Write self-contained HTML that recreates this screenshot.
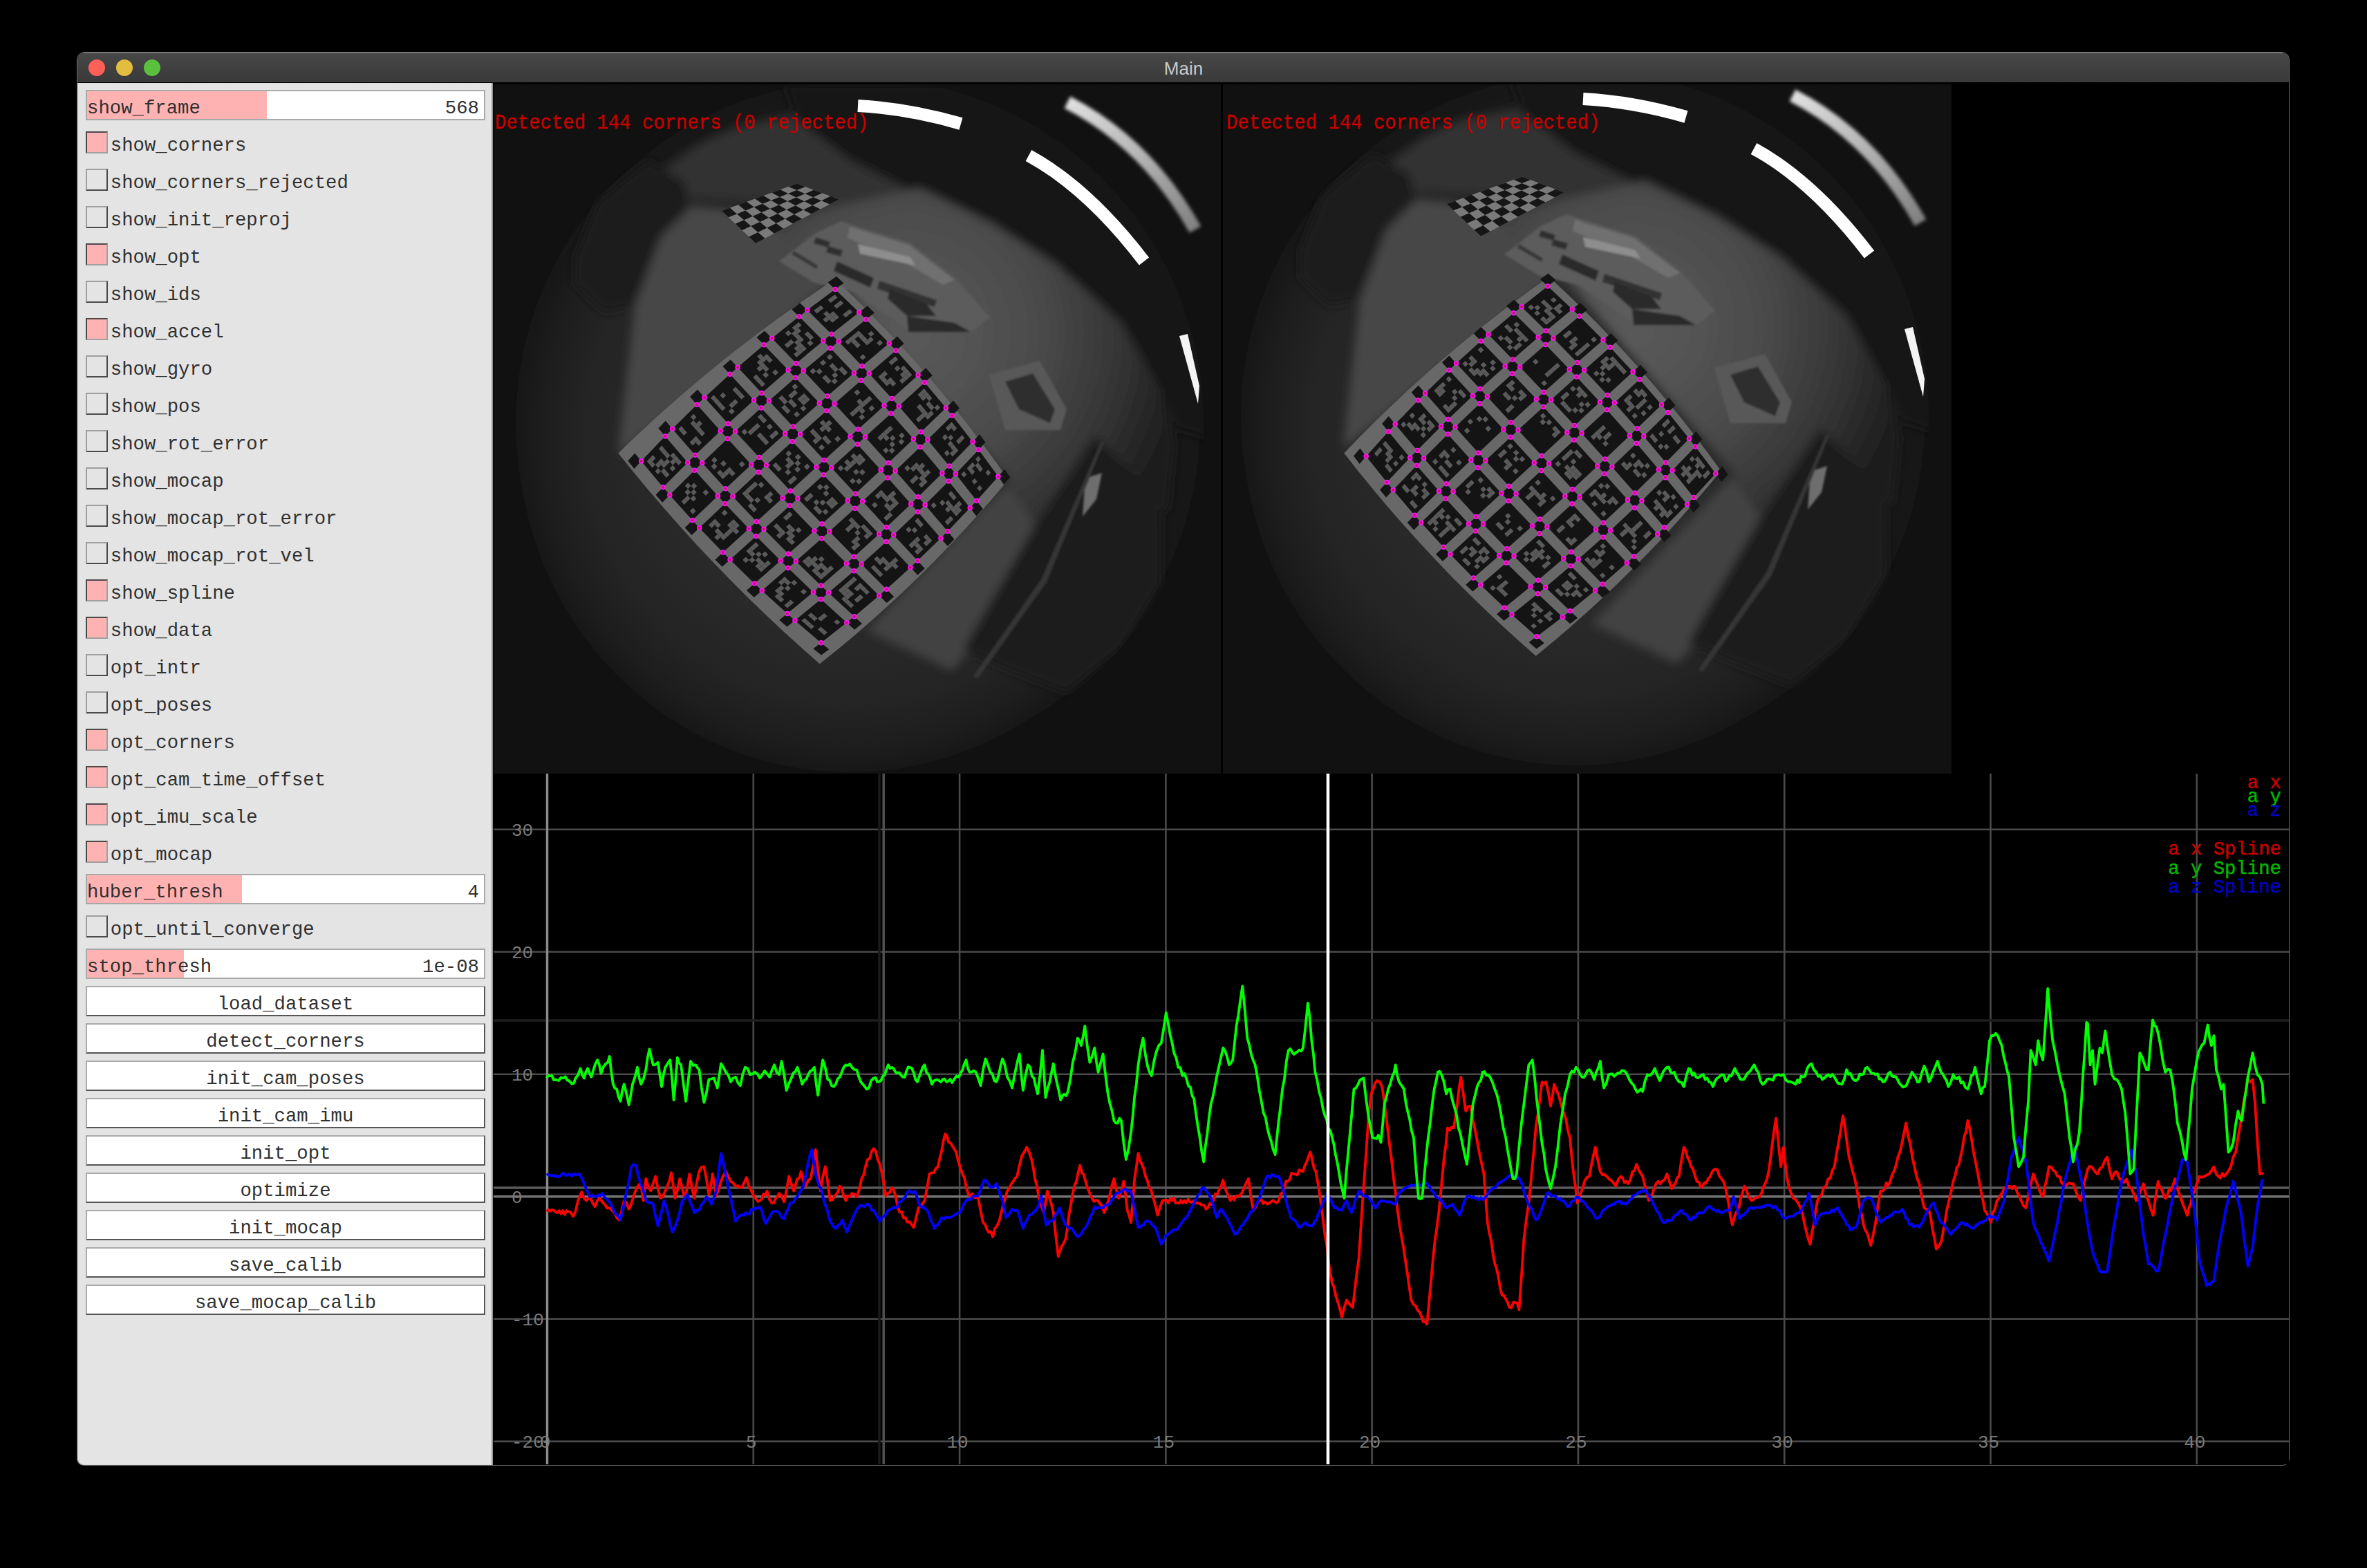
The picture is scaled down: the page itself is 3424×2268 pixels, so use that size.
<!DOCTYPE html><html><head><meta charset="utf-8"><title>Main</title><style>
html,body{margin:0;padding:0;background:#000;width:3424px;height:2268px;overflow:hidden;}
.a{position:absolute;}
.t{position:absolute;font-family:'Liberation Mono', monospace;font-size:27.3px;line-height:1;white-space:pre;color:#303030;}
</style></head><body>
<div class="a" style="left:112px;top:76px;width:3199px;height:2043px;background:#000;border-radius:11px 11px 9px 9px;box-shadow:0 0 0 1px #6a6a6a;overflow:hidden">
<div class="a" style="left:0;top:0;width:100%;height:43px;background:linear-gradient(#474747,#3a3a3a);border-top:1px solid #8c8c8c;box-sizing:border-box"></div>
</div>
<div class="a" style="left:128px;top:86px;width:24px;height:24px;border-radius:50%;background:#fe5f57"></div>
<div class="a" style="left:168px;top:86px;width:24px;height:24px;border-radius:50%;background:#e2bd3f"></div>
<div class="a" style="left:208px;top:86px;width:24px;height:24px;border-radius:50%;background:#5ac13f"></div>
<div class="a" style="left:1612px;top:86px;width:200px;text-align:center;font-family:'Liberation Sans', sans-serif;font-size:26px;line-height:26px;color:#c9c9c9">Main</div>
<div class="a" style="left:112px;top:120px;width:601px;height:1999px;background:#e4e4e4;border-bottom-left-radius:9px;box-shadow:inset 1px 0 0 #b8b8b8, inset -2px 0 1px #9a9a9a"></div>
<div class="a" style="left:124px;top:130px;width:578px;height:44px;box-sizing:border-box;border:2px solid #a9a9a9;background:linear-gradient(90deg,#ffb2b2 0,#ffb2b2 260px,#fff 260px)"></div>
<div class="t" style="left:126px;top:143px">show_frame</div>
<div class="t" style="left:400px;width:293px;text-align:right;top:143px">568</div>
<div class="a" style="left:124px;top:190px;width:32px;height:32px;box-sizing:border-box;background:#ffb2b2;border-style:solid;border-width:2px;border-color:#4a4a4a #a0a0a0 #a0a0a0 #4a4a4a"></div>
<div class="t" style="left:159.8px;top:197px">show_corners</div>
<div class="a" style="left:124px;top:244px;width:32px;height:32px;box-sizing:border-box;background:#e4e4e4;border-style:solid;border-width:2px;border-color:#a0a0a0 #4a4a4a #4a4a4a #a0a0a0"></div>
<div class="t" style="left:159.8px;top:251px">show_corners_rejected</div>
<div class="a" style="left:124px;top:298px;width:32px;height:32px;box-sizing:border-box;background:#e4e4e4;border-style:solid;border-width:2px;border-color:#a0a0a0 #4a4a4a #4a4a4a #a0a0a0"></div>
<div class="t" style="left:159.8px;top:305px">show_init_reproj</div>
<div class="a" style="left:124px;top:352px;width:32px;height:32px;box-sizing:border-box;background:#ffb2b2;border-style:solid;border-width:2px;border-color:#4a4a4a #a0a0a0 #a0a0a0 #4a4a4a"></div>
<div class="t" style="left:159.8px;top:359px">show_opt</div>
<div class="a" style="left:124px;top:406px;width:32px;height:32px;box-sizing:border-box;background:#e4e4e4;border-style:solid;border-width:2px;border-color:#a0a0a0 #4a4a4a #4a4a4a #a0a0a0"></div>
<div class="t" style="left:159.8px;top:413px">show_ids</div>
<div class="a" style="left:124px;top:460px;width:32px;height:32px;box-sizing:border-box;background:#ffb2b2;border-style:solid;border-width:2px;border-color:#4a4a4a #a0a0a0 #a0a0a0 #4a4a4a"></div>
<div class="t" style="left:159.8px;top:467px">show_accel</div>
<div class="a" style="left:124px;top:514px;width:32px;height:32px;box-sizing:border-box;background:#e4e4e4;border-style:solid;border-width:2px;border-color:#a0a0a0 #4a4a4a #4a4a4a #a0a0a0"></div>
<div class="t" style="left:159.8px;top:521px">show_gyro</div>
<div class="a" style="left:124px;top:568px;width:32px;height:32px;box-sizing:border-box;background:#e4e4e4;border-style:solid;border-width:2px;border-color:#a0a0a0 #4a4a4a #4a4a4a #a0a0a0"></div>
<div class="t" style="left:159.8px;top:575px">show_pos</div>
<div class="a" style="left:124px;top:622px;width:32px;height:32px;box-sizing:border-box;background:#e4e4e4;border-style:solid;border-width:2px;border-color:#a0a0a0 #4a4a4a #4a4a4a #a0a0a0"></div>
<div class="t" style="left:159.8px;top:629px">show_rot_error</div>
<div class="a" style="left:124px;top:676px;width:32px;height:32px;box-sizing:border-box;background:#e4e4e4;border-style:solid;border-width:2px;border-color:#a0a0a0 #4a4a4a #4a4a4a #a0a0a0"></div>
<div class="t" style="left:159.8px;top:683px">show_mocap</div>
<div class="a" style="left:124px;top:730px;width:32px;height:32px;box-sizing:border-box;background:#e4e4e4;border-style:solid;border-width:2px;border-color:#a0a0a0 #4a4a4a #4a4a4a #a0a0a0"></div>
<div class="t" style="left:159.8px;top:737px">show_mocap_rot_error</div>
<div class="a" style="left:124px;top:784px;width:32px;height:32px;box-sizing:border-box;background:#e4e4e4;border-style:solid;border-width:2px;border-color:#a0a0a0 #4a4a4a #4a4a4a #a0a0a0"></div>
<div class="t" style="left:159.8px;top:791px">show_mocap_rot_vel</div>
<div class="a" style="left:124px;top:838px;width:32px;height:32px;box-sizing:border-box;background:#ffb2b2;border-style:solid;border-width:2px;border-color:#4a4a4a #a0a0a0 #a0a0a0 #4a4a4a"></div>
<div class="t" style="left:159.8px;top:845px">show_spline</div>
<div class="a" style="left:124px;top:892px;width:32px;height:32px;box-sizing:border-box;background:#ffb2b2;border-style:solid;border-width:2px;border-color:#4a4a4a #a0a0a0 #a0a0a0 #4a4a4a"></div>
<div class="t" style="left:159.8px;top:899px">show_data</div>
<div class="a" style="left:124px;top:946px;width:32px;height:32px;box-sizing:border-box;background:#e4e4e4;border-style:solid;border-width:2px;border-color:#a0a0a0 #4a4a4a #4a4a4a #a0a0a0"></div>
<div class="t" style="left:159.8px;top:953px">opt_intr</div>
<div class="a" style="left:124px;top:1000px;width:32px;height:32px;box-sizing:border-box;background:#e4e4e4;border-style:solid;border-width:2px;border-color:#a0a0a0 #4a4a4a #4a4a4a #a0a0a0"></div>
<div class="t" style="left:159.8px;top:1007px">opt_poses</div>
<div class="a" style="left:124px;top:1054px;width:32px;height:32px;box-sizing:border-box;background:#ffb2b2;border-style:solid;border-width:2px;border-color:#4a4a4a #a0a0a0 #a0a0a0 #4a4a4a"></div>
<div class="t" style="left:159.8px;top:1061px">opt_corners</div>
<div class="a" style="left:124px;top:1108px;width:32px;height:32px;box-sizing:border-box;background:#ffb2b2;border-style:solid;border-width:2px;border-color:#4a4a4a #a0a0a0 #a0a0a0 #4a4a4a"></div>
<div class="t" style="left:159.8px;top:1115px">opt_cam_time_offset</div>
<div class="a" style="left:124px;top:1162px;width:32px;height:32px;box-sizing:border-box;background:#ffb2b2;border-style:solid;border-width:2px;border-color:#4a4a4a #a0a0a0 #a0a0a0 #4a4a4a"></div>
<div class="t" style="left:159.8px;top:1169px">opt_imu_scale</div>
<div class="a" style="left:124px;top:1216px;width:32px;height:32px;box-sizing:border-box;background:#ffb2b2;border-style:solid;border-width:2px;border-color:#4a4a4a #a0a0a0 #a0a0a0 #4a4a4a"></div>
<div class="t" style="left:159.8px;top:1223px">opt_mocap</div>
<div class="a" style="left:124px;top:1264px;width:578px;height:44px;box-sizing:border-box;border:2px solid #a9a9a9;background:linear-gradient(90deg,#ffb2b2 0,#ffb2b2 224px,#fff 224px)"></div>
<div class="t" style="left:126px;top:1277px">huber_thresh</div>
<div class="t" style="left:400px;width:293px;text-align:right;top:1277px">4</div>
<div class="a" style="left:124px;top:1324px;width:32px;height:32px;box-sizing:border-box;background:#e4e4e4;border-style:solid;border-width:2px;border-color:#a0a0a0 #4a4a4a #4a4a4a #a0a0a0"></div>
<div class="t" style="left:159.8px;top:1331px">opt_until_converge</div>
<div class="a" style="left:124px;top:1372px;width:578px;height:44px;box-sizing:border-box;border:2px solid #a9a9a9;background:linear-gradient(90deg,#ffb2b2 0,#ffb2b2 140px,#fff 140px)"></div>
<div class="t" style="left:126px;top:1385px">stop_thresh</div>
<div class="t" style="left:400px;width:293px;text-align:right;top:1385px">1e-08</div>
<div class="a" style="left:124px;top:1426px;width:578px;height:44px;box-sizing:border-box;background:#fff;border-style:solid;border-width:2px;border-color:#a9a9a9 #555 #555 #a9a9a9"></div>
<div class="t" style="left:124px;width:578px;text-align:center;top:1439px">load_dataset</div>
<div class="a" style="left:124px;top:1480px;width:578px;height:44px;box-sizing:border-box;background:#fff;border-style:solid;border-width:2px;border-color:#a9a9a9 #555 #555 #a9a9a9"></div>
<div class="t" style="left:124px;width:578px;text-align:center;top:1493px">detect_corners</div>
<div class="a" style="left:124px;top:1534px;width:578px;height:44px;box-sizing:border-box;background:#fff;border-style:solid;border-width:2px;border-color:#a9a9a9 #555 #555 #a9a9a9"></div>
<div class="t" style="left:124px;width:578px;text-align:center;top:1547px">init_cam_poses</div>
<div class="a" style="left:124px;top:1588px;width:578px;height:44px;box-sizing:border-box;background:#fff;border-style:solid;border-width:2px;border-color:#a9a9a9 #555 #555 #a9a9a9"></div>
<div class="t" style="left:124px;width:578px;text-align:center;top:1601px">init_cam_imu</div>
<div class="a" style="left:124px;top:1642px;width:578px;height:44px;box-sizing:border-box;background:#fff;border-style:solid;border-width:2px;border-color:#a9a9a9 #555 #555 #a9a9a9"></div>
<div class="t" style="left:124px;width:578px;text-align:center;top:1655px">init_opt</div>
<div class="a" style="left:124px;top:1696px;width:578px;height:44px;box-sizing:border-box;background:#fff;border-style:solid;border-width:2px;border-color:#a9a9a9 #555 #555 #a9a9a9"></div>
<div class="t" style="left:124px;width:578px;text-align:center;top:1709px">optimize</div>
<div class="a" style="left:124px;top:1750px;width:578px;height:44px;box-sizing:border-box;background:#fff;border-style:solid;border-width:2px;border-color:#a9a9a9 #555 #555 #a9a9a9"></div>
<div class="t" style="left:124px;width:578px;text-align:center;top:1763px">init_mocap</div>
<div class="a" style="left:124px;top:1804px;width:578px;height:44px;box-sizing:border-box;background:#fff;border-style:solid;border-width:2px;border-color:#a9a9a9 #555 #555 #a9a9a9"></div>
<div class="t" style="left:124px;width:578px;text-align:center;top:1817px">save_calib</div>
<div class="a" style="left:124px;top:1858px;width:578px;height:44px;box-sizing:border-box;background:#fff;border-style:solid;border-width:2px;border-color:#a9a9a9 #555 #555 #a9a9a9"></div>
<div class="t" style="left:124px;width:578px;text-align:center;top:1871px">save_mocap_calib</div>
<svg style="position:absolute;left:714px;top:122px" width="2109" height="997" viewBox="0 0 2109 997">
<defs><filter id="blur20" x="-10%" y="-10%" width="120%" height="120%"><feGaussianBlur stdDeviation="22"/></filter><filter id="blur3" x="-20%" y="-20%" width="140%" height="140%"><feGaussianBlur stdDeviation="2.5"/></filter><filter id="blur2" x="-20%" y="-20%" width="140%" height="140%"><feGaussianBlur stdDeviation="1.5"/></filter><filter id="blur8" x="-20%" y="-20%" width="140%" height="140%"><feGaussianBlur stdDeviation="7"/></filter><filter id="blur14" x="-20%" y="-20%" width="140%" height="140%"><feGaussianBlur stdDeviation="16"/></filter><radialGradient id="lensgrad" cx="0.5" cy="0.5" r="0.5"><stop offset="0" stop-color="#2e2e2e"/><stop offset="0.55" stop-color="#2a2a2a"/><stop offset="0.8" stop-color="#242424"/><stop offset="0.93" stop-color="#1d1d1d"/><stop offset="1" stop-color="#171717"/></radialGradient><radialGradient id="roomgrad" cx="0.55" cy="0.45" r="0.55"><stop offset="0" stop-color="#464646"/><stop offset="0.6" stop-color="#383838"/><stop offset="0.85" stop-color="#272727"/><stop offset="1" stop-color="#1d1d1d"/></radialGradient><linearGradient id="stripC" gradientUnits="userSpaceOnUse" x1="830" y1="26" x2="1015" y2="210"><stop offset="0" stop-color="#e0e0e0"/><stop offset="0.45" stop-color="#b8b8b8"/><stop offset="1" stop-color="#808080"/></linearGradient><radialGradient id="wallgrad" gradientUnits="userSpaceOnUse" cx="600" cy="360" r="400"><stop offset="0" stop-color="#5a5a5a"/><stop offset="0.45" stop-color="#4c4c4c"/><stop offset="0.75" stop-color="#363636"/><stop offset="1" stop-color="#1e1e1e"/></radialGradient><clipPath id="lensclip"><circle cx="527" cy="490" r="500"/></clipPath><clipPath id="clip1"><rect x="0" y="0" width="1052" height="997"/></clipPath><clipPath id="clip2"><rect x="0" y="0" width="1054" height="997"/></clipPath></defs>
<rect x="0" y="0" width="2109" height="997" fill="#000"/>
<g clip-path="url(#clip1)"><g id="scene1"><rect x="-20" y="-20" width="1100" height="1040" fill="#111"/>
<circle cx="527" cy="490" r="495" fill="#171717"/>
<ellipse cx="515" cy="505" rx="480" ry="490" fill="url(#lensgrad)"/>
<g clip-path="url(#lensclip)"><g filter="url(#blur8)">
<polygon points="400.0,0.0 1060.0,0.0 1060.0,520.0 988.0,498.0 966.0,444.0 908.0,349.0 813.0,269.0 718.0,211.0 616.0,160.0 515.0,109.0 440.0,50.0 420.0,0.0" fill="#191919"/>
<polygon points="250.0,120.0 300.0,85.0 350.0,62.0 430.0,45.0 515.0,109.0 616.0,160.0 500.0,190.0 400.0,170.0 300.0,165.0 260.0,175.0" fill="#333333"/>
<polygon points="480.0,180.0 616.0,150.0 718.0,200.0 813.0,260.0 908.0,345.0 966.0,444.0 985.0,520.0 975.0,620.0 870.0,508.0 781.0,641.0 745.0,572.0 494.0,282.0 439.0,250.0 400.0,200.0" fill="url(#wallgrad)"/>
<polygon points="180.0,537.0 204.0,320.0 242.0,221.0 287.0,176.0 330.0,180.0 400.0,200.0 439.0,250.0 494.0,282.0" fill="#474747"/>
<polygon points="118.0,250.0 150.0,170.0 223.0,110.0 275.0,140.0 285.0,173.0 242.0,221.0 204.0,320.0 160.0,330.0 118.0,290.0" fill="#1d1d1d"/>
<polygon points="745.0,578.0 785.0,641.0 690.0,817.0 663.0,848.0 540.0,790.0 735.0,585.0" fill="#424242"/>
<polygon points="679.0,817.0 781.0,641.0 870.0,508.0 966.0,606.0 966.0,721.0 908.0,817.0 829.0,880.0 733.0,842.0" fill="#1d1d1d"/>
</g></g>
<g filter="url(#blur2)">
<polygon points="413.0,256.0 466.0,215.0 502.0,198.0 604.0,230.0 667.0,280.0 718.0,337.0 692.0,358.0 604.0,358.0 520.0,300.0 464.0,287.0" fill="#5c5c5c"/>
<polygon points="515.0,206.0 600.0,232.0 667.0,283.0 650.0,290.0 590.0,255.0 512.0,222.0" fill="#707070"/>
<polygon points="527.0,231.0 603.0,250.0 610.0,262.0 530.0,245.0" fill="#8e8e8e"/>
<polygon points="497.0,256.0 550.0,280.0 545.0,294.0 492.0,270.0" fill="#2c2c2c"/>
<polygon points="558.0,284.0 641.0,312.0 638.0,322.0 555.0,296.0" fill="#303030"/>
<polygon points="466.0,221.0 487.0,228.0 484.0,236.0 463.0,230.0" fill="#2e2e2e"/>
<polygon points="484.0,234.0 505.0,240.0 502.0,249.0 481.0,243.0" fill="#2e2e2e"/>
<polygon points="434.0,241.0 469.0,262.0 467.0,267.0 432.0,246.0" fill="#353535"/>
<polygon points="573.0,296.0 626.0,317.0 640.0,335.0 598.0,335.0 570.0,310.0" fill="#2a2a2a"/>
<polygon points="598.0,335.0 667.0,345.0 690.0,358.0 600.0,358.0" fill="#2c2c2c"/>
<polygon points="717.0,420.0 790.0,400.0 829.0,470.0 820.0,500.0 740.0,500.0" fill="#595959"/>
<polygon points="740.0,430.0 780.0,418.0 812.0,470.0 805.0,490.0 760.0,470.0" fill="#2e2e2e"/>
<polygon points="856.0,570.0 880.0,562.0 872.0,600.0 852.0,625.0" fill="#6e6e6e"/>
<polygon points="878.0,518.0 884.0,516.0 800.0,720.0 700.0,860.0 694.0,856.0 792.0,716.0" fill="#343434"/>
</g>
<polygon points="329.8,182.9 438.8,143.6 499.6,166.4 379.2,229.8" fill="#7a7a7a"/>
<polygon points="329.8,182.9 341.9,178.5 352.0,187.4 339.7,192.3" fill="#161616"/>
<polygon points="349.6,201.7 362.2,196.2 372.3,205.1 359.4,211.0" fill="#161616"/>
<polygon points="369.3,220.4 382.4,213.9 392.6,222.8 379.2,229.8" fill="#161616"/>
<polygon points="352.0,187.4 364.4,182.5 374.8,190.8 362.2,196.2" fill="#161616"/>
<polygon points="372.3,205.1 385.2,199.1 395.6,207.4 382.4,213.9" fill="#161616"/>
<polygon points="354.0,174.2 366.1,169.8 376.8,177.6 364.4,182.5" fill="#161616"/>
<polygon points="374.8,190.8 387.4,185.3 398.1,193.1 385.2,199.1" fill="#161616"/>
<polygon points="395.6,207.4 408.7,200.9 419.3,208.7 406.0,215.7" fill="#161616"/>
<polygon points="376.8,177.6 389.1,172.7 400.0,179.9 387.4,185.3" fill="#161616"/>
<polygon points="398.1,193.1 410.9,187.1 421.8,194.4 408.7,200.9" fill="#161616"/>
<polygon points="378.2,165.4 390.4,161.1 401.5,167.8 389.1,172.7" fill="#161616"/>
<polygon points="400.0,179.9 412.6,174.5 423.8,181.2 410.9,187.1" fill="#161616"/>
<polygon points="421.8,194.4 434.9,187.9 446.1,194.6 432.7,201.6" fill="#161616"/>
<polygon points="401.5,167.8 413.9,162.9 425.3,169.0 412.6,174.5" fill="#161616"/>
<polygon points="423.8,181.2 436.7,175.2 448.1,181.4 434.9,187.9" fill="#161616"/>
<polygon points="402.5,156.7 414.6,152.3 426.2,158.0 413.9,162.9" fill="#161616"/>
<polygon points="425.3,169.0 437.9,163.6 449.5,169.2 436.7,175.2" fill="#161616"/>
<polygon points="448.1,181.4 461.2,174.9 472.8,180.5 459.5,187.5" fill="#161616"/>
<polygon points="426.2,158.0 438.6,153.1 450.5,158.2 437.9,163.6" fill="#161616"/>
<polygon points="449.5,169.2 462.4,163.3 474.3,168.3 461.2,174.9" fill="#161616"/>
<polygon points="426.7,148.0 438.8,143.6 451.0,148.2 438.6,153.1" fill="#161616"/>
<polygon points="450.5,158.2 463.1,152.7 475.3,157.3 462.4,163.3" fill="#161616"/>
<polygon points="474.3,168.3 487.4,161.8 499.6,166.4 486.2,173.4" fill="#161616"/>
<path d="M527,31 Q600,35 676,57" stroke="#fff" stroke-width="18" fill="none"/>
<path d="M774,103 Q860,150 941,256" stroke="#fff" stroke-width="18" fill="none"/>
<path d="M830,26 Q945,85 1015,210" stroke="url(#stripC)" stroke-width="19" fill="none" filter="url(#blur3)"/>
<polygon points="992.0,364.0 1004.0,361.0 1021.0,436.0 1019.0,462.0" fill="#f4f4f4"/></g><g id="board1"><polygon points="180.4,533.5 204.5,510.3 228.9,487.6 253.7,465.2 278.9,443.2 304.5,421.6 330.4,400.4 356.7,379.7 383.5,359.3 410.5,339.3 438.0,319.7 465.9,300.5 494.1,281.7 494.1,281.7 517.3,304.0 540.2,326.6 562.5,349.6 584.5,372.9 606.0,396.6 627.1,420.6 647.8,444.9 668.0,469.6 687.8,494.6 707.2,520.0 726.2,545.7 744.7,571.8 744.7,571.8 724.0,596.2 703.0,620.2 681.6,643.8 659.8,667.0 637.6,689.8 615.1,712.2 592.2,734.2 568.8,755.8 545.2,777.0 521.1,797.9 496.6,818.3 471.8,838.3 471.8,838.3 445.2,814.8 418.9,790.9 393.2,766.7 367.8,742.2 342.9,717.3 318.4,692.1 294.3,666.5 270.7,640.6 247.5,614.3 224.7,587.7 202.3,560.8 180.4,533.5" fill="#686868"/>
<polygon points="194.3,544.5 204.3,533.5 213.6,545.0 203.4,556.0" fill="#141414"/>
<polygon points="234.6,593.7 245.2,582.8 254.8,594.0 244.2,604.8" fill="#141414"/>
<polygon points="276.7,641.3 287.6,630.6 297.7,641.5 286.6,652.1" fill="#141414"/>
<polygon points="320.5,687.4 331.7,677.1 342.1,687.6 330.8,697.8" fill="#141414"/>
<polygon points="366.0,731.9 377.4,722.0 388.2,732.2 376.8,741.9" fill="#141414"/>
<polygon points="413.3,774.8 424.8,765.6 435.9,775.4 424.5,784.5" fill="#141414"/>
<polygon points="462.4,816.3 473.7,807.7 485.2,817.2 474.0,825.6" fill="#141414"/>
<polygon points="238.4,497.4 248.8,486.7 258.6,498.2 248.1,508.9" fill="#141414"/>
<polygon points="280.8,546.9 291.6,536.2 301.7,547.5 290.8,558.2" fill="#141414"/>
<polygon points="324.4,595.3 335.6,584.8 345.8,595.9 334.7,606.4" fill="#141414"/>
<polygon points="369.3,642.7 380.5,632.4 391.0,643.3 379.8,653.5" fill="#141414"/>
<polygon points="415.2,689.1 426.5,679.1 437.3,689.8 426.0,699.6" fill="#141414"/>
<polygon points="462.4,734.4 473.6,724.9 484.6,735.3 473.5,744.7" fill="#141414"/>
<polygon points="510.8,778.6 521.8,769.7 533.0,779.9 522.1,788.7" fill="#141414"/>
<polygon points="284.1,451.9 294.9,441.6 305.1,453.0 294.2,463.3" fill="#141414"/>
<polygon points="328.2,501.2 339.2,490.8 349.5,502.1 338.4,512.5" fill="#141414"/>
<polygon points="372.8,550.0 384.1,539.6 394.5,550.8 383.2,561.1" fill="#141414"/>
<polygon points="418.1,598.2 429.4,587.9 439.9,599.0 428.6,609.2" fill="#141414"/>
<polygon points="464.0,645.8 475.2,635.7 485.8,646.7 474.7,656.7" fill="#141414"/>
<polygon points="510.5,692.9 521.5,683.2 532.2,694.1 521.4,703.7" fill="#141414"/>
<polygon points="557.7,739.4 568.3,730.2 579.2,740.9 568.7,750.1" fill="#141414"/>
<polygon points="331.5,408.1 342.7,398.2 353.1,409.3 341.9,419.3" fill="#141414"/>
<polygon points="376.6,456.7 388.0,446.5 398.4,457.7 387.0,467.9" fill="#141414"/>
<polygon points="421.8,505.2 433.1,494.9 443.6,506.1 432.2,516.4" fill="#141414"/>
<polygon points="467.0,553.6 478.3,543.4 488.7,554.6 477.4,564.8" fill="#141414"/>
<polygon points="512.3,602.0 523.4,591.9 533.7,603.1 522.7,613.2" fill="#141414"/>
<polygon points="557.6,650.4 568.4,640.5 578.7,651.7 568.1,661.5" fill="#141414"/>
<polygon points="603.0,698.7 613.3,689.1 623.7,700.3 613.5,709.8" fill="#141414"/>
<polygon points="380.5,365.9 392.1,356.4 402.7,367.2 391.1,376.8" fill="#141414"/>
<polygon points="426.2,413.2 437.8,403.4 448.2,414.3 436.6,424.2" fill="#141414"/>
<polygon points="471.3,461.0 482.8,450.9 493.1,461.9 481.7,472.1" fill="#141414"/>
<polygon points="516.0,509.2 527.3,498.9 537.4,510.1 526.2,520.4" fill="#141414"/>
<polygon points="560.1,557.8 571.1,547.6 581.1,558.9 570.2,569.1" fill="#141414"/>
<polygon points="603.7,606.9 614.2,596.7 624.1,608.2 613.7,618.3" fill="#141414"/>
<polygon points="646.9,656.4 656.8,646.5 666.5,658.0 656.8,667.9" fill="#141414"/>
<polygon points="431.2,325.4 443.2,316.3 453.8,326.6 441.9,335.8" fill="#141414"/>
<polygon points="476.9,370.9 488.7,361.3 499.1,371.9 487.2,381.6" fill="#141414"/>
<polygon points="521.4,417.4 533.1,407.4 543.2,418.2 531.6,428.3" fill="#141414"/>
<polygon points="565.0,464.8 576.3,454.6 586.1,465.6 574.9,475.9" fill="#141414"/>
<polygon points="607.4,513.1 618.3,502.8 627.8,514.0 617.1,524.4" fill="#141414"/>
<polygon points="648.9,562.4 659.1,552.0 668.4,563.5 658.3,573.9" fill="#141414"/>
<polygon points="689.2,612.6 698.8,602.3 707.7,614.1 698.4,624.4" fill="#141414"/>
<polygon points="483.5,286.6 495.9,277.8 506.4,287.5 494.1,296.4" fill="#141414"/>
<polygon points="528.7,329.8 540.8,320.4 550.9,330.5 538.8,339.9" fill="#141414"/>
<polygon points="572.2,374.4 584.0,364.6 593.7,375.0 582.0,384.9" fill="#141414"/>
<polygon points="614.1,420.5 625.4,410.3 634.7,421.0 623.5,431.3" fill="#141414"/>
<polygon points="654.3,468.0 665.1,457.5 674.0,468.6 663.4,479.1" fill="#141414"/>
<polygon points="693.0,516.9 703.0,506.3 711.5,517.8 701.7,528.4" fill="#141414"/>
<polygon points="730.0,567.3 739.2,556.6 747.3,568.5 738.3,579.1" fill="#141414"/>
<polygon points="213.6,545.0 248.1,508.9 280.8,546.9 245.2,582.8" fill="#141414"/>
<polygon points="221.8,545.2 226.1,540.7 230.0,545.4 225.7,550.0" fill="#5a5a5a"/>
<polygon points="225.7,550.0 230.0,545.4 234.0,550.2 229.6,554.7" fill="#5a5a5a"/>
<polygon points="233.6,559.5 238.0,554.9 242.0,559.6 237.6,564.2" fill="#5a5a5a"/>
<polygon points="226.1,540.7 230.4,536.1 234.4,540.9 230.0,545.4" fill="#5a5a5a"/>
<polygon points="234.0,550.2 238.3,545.7 242.3,550.4 238.0,554.9" fill="#5a5a5a"/>
<polygon points="242.0,559.6 246.3,555.1 250.4,559.8 246.0,564.4" fill="#5a5a5a"/>
<polygon points="246.0,564.4 250.4,559.8 254.4,564.5 250.0,569.1" fill="#5a5a5a"/>
<polygon points="238.3,545.7 242.7,541.1 246.7,545.9 242.3,550.4" fill="#5a5a5a"/>
<polygon points="242.3,550.4 246.7,545.9 250.7,550.6 246.3,555.1" fill="#5a5a5a"/>
<polygon points="246.7,545.9 251.1,541.4 255.2,546.1 250.7,550.6" fill="#5a5a5a"/>
<polygon points="254.8,555.3 259.2,550.8 263.3,555.6 258.8,560.1" fill="#5a5a5a"/>
<polygon points="239.0,527.1 243.4,522.6 247.4,527.4 243.0,531.9" fill="#5a5a5a"/>
<polygon points="243.0,531.9 247.4,527.4 251.5,532.2 247.1,536.6" fill="#5a5a5a"/>
<polygon points="247.1,536.6 251.5,532.2 255.5,536.9 251.1,541.4" fill="#5a5a5a"/>
<polygon points="255.2,546.1 259.6,541.6 263.7,546.4 259.2,550.8" fill="#5a5a5a"/>
<polygon points="255.5,536.9 259.9,532.4 264.0,537.2 259.6,541.6" fill="#5a5a5a"/>
<polygon points="259.6,541.6 264.0,537.2 268.1,541.9 263.7,546.4" fill="#5a5a5a"/>
<polygon points="263.7,546.4 268.1,541.9 272.2,546.6 267.7,551.1" fill="#5a5a5a"/>
<polygon points="254.8,594.0 290.8,558.2 324.4,595.3 287.6,630.6" fill="#141414"/>
<polygon points="271.5,603.3 276.0,598.9 280.2,603.5 275.6,607.9" fill="#5a5a5a"/>
<polygon points="283.9,617.1 288.5,612.6 292.6,617.2 288.1,621.7" fill="#5a5a5a"/>
<polygon points="276.0,598.9 280.6,594.4 284.7,599.0 280.2,603.5" fill="#5a5a5a"/>
<polygon points="276.4,589.8 281.0,585.3 285.1,589.9 280.6,594.4" fill="#5a5a5a"/>
<polygon points="284.7,599.0 289.3,594.6 293.4,599.2 288.9,603.6" fill="#5a5a5a"/>
<polygon points="276.8,580.6 281.4,576.2 285.5,580.8 281.0,585.3" fill="#5a5a5a"/>
<polygon points="285.1,589.9 289.6,585.5 293.8,590.1 289.3,594.6" fill="#5a5a5a"/>
<polygon points="285.5,580.8 290.0,576.4 294.2,581.0 289.6,585.5" fill="#5a5a5a"/>
<polygon points="302.6,590.3 307.1,585.9 311.4,590.5 306.8,594.9" fill="#5a5a5a"/>
<polygon points="297.7,641.5 334.7,606.4 369.3,642.7 331.7,677.1" fill="#141414"/>
<polygon points="319.2,655.0 323.9,650.7 328.2,655.1 323.5,659.5" fill="#5a5a5a"/>
<polygon points="311.1,637.2 315.8,632.8 320.0,637.3 315.4,641.7" fill="#5a5a5a"/>
<polygon points="319.6,646.2 324.3,641.8 328.5,646.3 323.9,650.7" fill="#5a5a5a"/>
<polygon points="323.9,650.7 328.5,646.3 332.8,650.8 328.2,655.1" fill="#5a5a5a"/>
<polygon points="328.2,655.1 332.8,650.8 337.1,655.3 332.5,659.6" fill="#5a5a5a"/>
<polygon points="315.8,632.8 320.4,628.4 324.6,633.0 320.0,637.3" fill="#5a5a5a"/>
<polygon points="320.0,637.3 324.6,633.0 328.9,637.5 324.3,641.8" fill="#5a5a5a"/>
<polygon points="332.8,650.8 337.5,646.5 341.8,651.0 337.1,655.3" fill="#5a5a5a"/>
<polygon points="337.5,646.5 342.2,642.1 346.5,646.6 341.8,651.0" fill="#5a5a5a"/>
<polygon points="337.9,637.6 342.5,633.3 346.9,637.8 342.2,642.1" fill="#5a5a5a"/>
<polygon points="342.2,642.1 346.9,637.8 351.2,642.3 346.5,646.6" fill="#5a5a5a"/>
<polygon points="346.5,646.6 351.2,642.3 355.5,646.8 350.8,651.1" fill="#5a5a5a"/>
<polygon points="329.7,619.7 334.3,615.3 338.6,619.9 333.9,624.2" fill="#5a5a5a"/>
<polygon points="342.5,633.3 347.2,629.0 351.5,633.5 346.9,637.8" fill="#5a5a5a"/>
<polygon points="346.9,637.8 351.5,633.5 355.9,638.0 351.2,642.3" fill="#5a5a5a"/>
<polygon points="342.1,687.6 379.8,653.5 415.2,689.1 377.4,722.0" fill="#141414"/>
<polygon points="360.3,687.8 365.0,683.6 369.4,688.0 364.7,692.2" fill="#5a5a5a"/>
<polygon points="369.4,688.0 374.1,683.8 378.6,688.2 373.8,692.3" fill="#5a5a5a"/>
<polygon points="378.3,696.7 383.0,692.5 387.4,696.9 382.7,701.1" fill="#5a5a5a"/>
<polygon points="382.7,701.1 387.4,696.9 391.9,701.2 387.2,705.4" fill="#5a5a5a"/>
<polygon points="365.3,675.0 370.0,670.7 374.4,675.1 369.7,679.4" fill="#5a5a5a"/>
<polygon points="369.7,679.4 374.4,675.1 378.9,679.6 374.1,683.8" fill="#5a5a5a"/>
<polygon points="378.6,688.2 383.3,684.0 387.7,688.4 383.0,692.5" fill="#5a5a5a"/>
<polygon points="383.0,692.5 387.7,688.4 392.2,692.7 387.4,696.9" fill="#5a5a5a"/>
<polygon points="387.4,696.9 392.2,692.7 396.6,697.1 391.9,701.2" fill="#5a5a5a"/>
<polygon points="370.0,670.7 374.7,666.5 379.1,670.9 374.4,675.1" fill="#5a5a5a"/>
<polygon points="378.9,679.6 383.6,675.4 388.0,679.8 383.3,684.0" fill="#5a5a5a"/>
<polygon points="392.2,692.7 396.9,688.6 401.3,693.0 396.6,697.1" fill="#5a5a5a"/>
<polygon points="374.7,666.5 379.5,662.2 383.9,666.7 379.1,670.9" fill="#5a5a5a"/>
<polygon points="388.0,679.8 392.7,675.6 397.1,680.0 392.4,684.2" fill="#5a5a5a"/>
<polygon points="388.2,732.2 426.0,699.6 462.4,734.4 424.8,765.6" fill="#141414"/>
<polygon points="406.5,740.8 411.3,736.8 415.9,741.1 411.1,745.0" fill="#5a5a5a"/>
<polygon points="411.1,745.0 415.9,741.1 420.4,745.3 415.7,749.2" fill="#5a5a5a"/>
<polygon points="420.3,753.4 425.0,749.5 429.6,753.7 424.9,757.6" fill="#5a5a5a"/>
<polygon points="406.7,732.6 411.5,728.6 416.0,732.8 411.3,736.8" fill="#5a5a5a"/>
<polygon points="411.3,736.8 416.0,732.8 420.6,737.1 415.9,741.1" fill="#5a5a5a"/>
<polygon points="425.0,749.5 429.7,745.5 434.3,749.7 429.6,753.7" fill="#5a5a5a"/>
<polygon points="411.5,728.6 416.2,724.6 420.8,728.8 416.0,732.8" fill="#5a5a5a"/>
<polygon points="411.7,720.3 416.4,716.2 420.9,720.5 416.2,724.6" fill="#5a5a5a"/>
<polygon points="420.8,728.8 425.5,724.8 430.0,729.1 425.3,733.1" fill="#5a5a5a"/>
<polygon points="416.4,716.2 421.1,712.1 425.6,716.5 420.9,720.5" fill="#5a5a5a"/>
<polygon points="420.9,720.5 425.6,716.5 430.2,720.8 425.5,724.8" fill="#5a5a5a"/>
<polygon points="430.2,720.8 434.9,716.8 439.4,721.1 434.7,725.1" fill="#5a5a5a"/>
<polygon points="443.9,733.7 448.6,729.7 453.2,734.0 448.5,738.0" fill="#5a5a5a"/>
<polygon points="435.9,775.4 473.5,744.7 510.8,778.6 473.7,807.7" fill="#141414"/>
<polygon points="445.3,775.7 450.0,771.9 454.7,776.1 450.0,779.8" fill="#5a5a5a"/>
<polygon points="450.0,779.8 454.7,776.1 459.4,780.2 454.7,783.9" fill="#5a5a5a"/>
<polygon points="454.7,783.9 459.4,780.2 464.1,784.3 459.4,788.0" fill="#5a5a5a"/>
<polygon points="468.8,788.3 473.5,784.6 478.2,788.7 473.6,792.4" fill="#5a5a5a"/>
<polygon points="473.6,792.4 478.2,788.7 483.0,792.8 478.3,796.5" fill="#5a5a5a"/>
<polygon points="454.7,768.1 459.4,764.3 464.1,768.5 459.4,772.3" fill="#5a5a5a"/>
<polygon points="459.4,772.3 464.1,768.5 468.8,772.6 464.1,776.4" fill="#5a5a5a"/>
<polygon points="468.8,772.6 473.4,768.9 478.1,773.0 473.5,776.8" fill="#5a5a5a"/>
<polygon points="473.4,768.9 478.1,765.1 482.8,769.3 478.1,773.0" fill="#5a5a5a"/>
<polygon points="492.2,777.6 496.8,773.9 501.5,778.1 496.9,781.8" fill="#5a5a5a"/>
<polygon points="258.6,498.2 294.2,463.3 328.2,501.2 291.6,536.2" fill="#141414"/>
<polygon points="267.1,498.6 271.5,494.2 275.7,499.0 271.2,503.4" fill="#5a5a5a"/>
<polygon points="271.2,503.4 275.7,499.0 279.8,503.7 275.4,508.1" fill="#5a5a5a"/>
<polygon points="283.7,517.6 288.2,513.2 292.3,518.0 287.8,522.4" fill="#5a5a5a"/>
<polygon points="288.2,513.2 292.7,508.8 296.9,513.6 292.3,518.0" fill="#5a5a5a"/>
<polygon points="292.3,518.0 296.9,513.6 301.1,518.3 296.5,522.7" fill="#5a5a5a"/>
<polygon points="284.6,490.2 289.1,485.8 293.3,490.6 288.8,495.0" fill="#5a5a5a"/>
<polygon points="288.8,495.0 293.3,490.6 297.5,495.3 293.0,499.7" fill="#5a5a5a"/>
<polygon points="293.0,499.7 297.5,495.3 301.7,500.1 297.2,504.5" fill="#5a5a5a"/>
<polygon points="297.2,504.5 301.7,500.1 305.9,504.8 301.4,509.2" fill="#5a5a5a"/>
<polygon points="284.9,481.1 289.4,476.7 293.6,481.5 289.1,485.8" fill="#5a5a5a"/>
<polygon points="293.3,490.6 297.8,486.2 302.0,491.0 297.5,495.3" fill="#5a5a5a"/>
<polygon points="301.7,547.5 338.4,512.5 372.8,550.0 335.6,584.8" fill="#141414"/>
<polygon points="314.7,552.5 319.3,548.1 323.5,552.8 318.9,557.2" fill="#5a5a5a"/>
<polygon points="323.1,561.8 327.8,557.5 332.0,562.1 327.4,566.5" fill="#5a5a5a"/>
<polygon points="327.4,566.5 332.0,562.1 336.3,566.8 331.6,571.2" fill="#5a5a5a"/>
<polygon points="315.0,543.4 319.6,539.0 323.9,543.7 319.3,548.1" fill="#5a5a5a"/>
<polygon points="332.0,562.1 336.6,557.7 340.9,562.4 336.3,566.8" fill="#5a5a5a"/>
<polygon points="328.1,548.4 332.7,544.0 337.0,548.7 332.4,553.1" fill="#5a5a5a"/>
<polygon points="336.6,557.7 341.3,553.4 345.5,558.0 340.9,562.4" fill="#5a5a5a"/>
<polygon points="340.9,562.4 345.5,558.0 349.8,562.7 345.2,567.1" fill="#5a5a5a"/>
<polygon points="354.8,549.3 359.5,545.0 363.8,549.6 359.2,554.0" fill="#5a5a5a"/>
<polygon points="345.8,595.9 383.2,561.1 418.1,598.2 380.5,632.4" fill="#141414"/>
<polygon points="367.8,609.9 372.5,605.6 376.8,610.2 372.1,614.5" fill="#5a5a5a"/>
<polygon points="372.1,614.5 376.8,610.2 381.2,614.7 376.5,619.0" fill="#5a5a5a"/>
<polygon points="359.5,591.8 364.1,587.4 368.5,592.0 363.8,596.4" fill="#5a5a5a"/>
<polygon points="363.8,596.4 368.5,592.0 372.8,596.7 368.1,601.0" fill="#5a5a5a"/>
<polygon points="368.1,601.0 372.8,596.7 377.1,601.3 372.5,605.6" fill="#5a5a5a"/>
<polygon points="364.1,587.4 368.8,583.1 373.1,587.7 368.5,592.0" fill="#5a5a5a"/>
<polygon points="377.1,601.3 381.8,596.9 386.2,601.5 381.5,605.8" fill="#5a5a5a"/>
<polygon points="368.8,583.1 373.5,578.8 377.8,583.4 373.1,587.7" fill="#5a5a5a"/>
<polygon points="373.5,578.8 378.2,574.4 382.5,579.1 377.8,583.4" fill="#5a5a5a"/>
<polygon points="390.9,597.2 395.6,592.9 399.9,597.5 395.2,601.8" fill="#5a5a5a"/>
<polygon points="395.2,601.8 399.9,597.5 404.3,602.1 399.6,606.4" fill="#5a5a5a"/>
<polygon points="382.5,579.1 387.2,574.7 391.5,579.4 386.9,583.7" fill="#5a5a5a"/>
<polygon points="395.6,592.9 400.3,588.6 404.6,593.2 399.9,597.5" fill="#5a5a5a"/>
<polygon points="391.0,643.3 428.6,609.2 464.0,645.8 426.5,679.1" fill="#141414"/>
<polygon points="409.0,652.6 413.7,648.3 418.1,652.9 413.4,657.1" fill="#5a5a5a"/>
<polygon points="404.8,639.3 409.5,635.1 414.0,639.6 409.3,643.8" fill="#5a5a5a"/>
<polygon points="409.3,643.8 414.0,639.6 418.4,644.1 413.7,648.3" fill="#5a5a5a"/>
<polygon points="413.7,648.3 418.4,644.1 422.8,648.6 418.1,652.9" fill="#5a5a5a"/>
<polygon points="422.6,657.4 427.3,653.2 431.7,657.7 427.0,661.9" fill="#5a5a5a"/>
<polygon points="427.0,661.9 431.7,657.7 436.2,662.2 431.5,666.3" fill="#5a5a5a"/>
<polygon points="422.8,648.6 427.5,644.4 431.9,649.0 427.3,653.2" fill="#5a5a5a"/>
<polygon points="427.3,653.2 431.9,649.0 436.4,653.5 431.7,657.7" fill="#5a5a5a"/>
<polygon points="423.1,639.9 427.8,635.7 432.2,640.2 427.5,644.4" fill="#5a5a5a"/>
<polygon points="427.5,644.4 432.2,640.2 436.6,644.7 431.9,649.0" fill="#5a5a5a"/>
<polygon points="418.9,626.6 423.6,622.3 428.0,626.9 423.4,631.1" fill="#5a5a5a"/>
<polygon points="436.6,644.7 441.3,640.5 445.8,645.1 441.1,649.3" fill="#5a5a5a"/>
<polygon points="423.6,622.3 428.3,618.0 432.7,622.6 428.0,626.9" fill="#5a5a5a"/>
<polygon points="437.3,689.8 474.7,656.7 510.5,692.9 473.6,724.9" fill="#141414"/>
<polygon points="446.5,690.1 451.2,686.0 455.7,690.4 451.0,694.5" fill="#5a5a5a"/>
<polygon points="451.0,694.5 455.7,690.4 460.2,694.9 455.5,698.9" fill="#5a5a5a"/>
<polygon points="460.1,703.3 464.7,699.3 469.3,703.7 464.6,707.8" fill="#5a5a5a"/>
<polygon points="464.6,707.8 469.3,703.7 473.8,708.1 469.1,712.1" fill="#5a5a5a"/>
<polygon points="469.1,712.1 473.8,708.1 478.3,712.5 473.7,716.5" fill="#5a5a5a"/>
<polygon points="451.2,686.0 455.9,681.9 460.4,686.3 455.7,690.4" fill="#5a5a5a"/>
<polygon points="455.7,690.4 460.4,686.3 464.9,690.8 460.2,694.9" fill="#5a5a5a"/>
<polygon points="460.2,694.9 464.9,690.8 469.4,695.2 464.7,699.3" fill="#5a5a5a"/>
<polygon points="464.7,699.3 469.4,695.2 473.9,699.7 469.3,703.7" fill="#5a5a5a"/>
<polygon points="473.8,708.1 478.4,704.1 483.0,708.5 478.3,712.5" fill="#5a5a5a"/>
<polygon points="460.4,686.3 465.0,682.2 469.5,686.7 464.9,690.8" fill="#5a5a5a"/>
<polygon points="469.4,695.2 474.0,691.2 478.5,695.6 473.9,699.7" fill="#5a5a5a"/>
<polygon points="473.9,699.7 478.5,695.6 483.1,700.1 478.4,704.1" fill="#5a5a5a"/>
<polygon points="478.4,704.1 483.1,700.1 487.6,704.5 483.0,708.5" fill="#5a5a5a"/>
<polygon points="469.5,686.7 474.2,682.6 478.7,687.1 474.0,691.2" fill="#5a5a5a"/>
<polygon points="483.1,700.1 487.7,696.0 492.2,700.5 487.6,704.5" fill="#5a5a5a"/>
<polygon points="484.6,735.3 521.4,703.7 557.7,739.4 521.8,769.7" fill="#141414"/>
<polygon points="503.1,744.4 507.7,740.5 512.3,744.9 507.7,748.7" fill="#5a5a5a"/>
<polygon points="507.7,748.7 512.3,744.9 516.9,749.2 512.3,753.1" fill="#5a5a5a"/>
<polygon points="512.3,753.1 516.9,749.2 521.5,753.6 517.0,757.4" fill="#5a5a5a"/>
<polygon points="498.5,731.8 503.1,727.9 507.6,732.3 503.1,736.2" fill="#5a5a5a"/>
<polygon points="503.1,736.2 507.6,732.3 512.2,736.7 507.7,740.5" fill="#5a5a5a"/>
<polygon points="507.7,740.5 512.2,736.7 516.8,741.0 512.3,744.9" fill="#5a5a5a"/>
<polygon points="503.1,727.9 507.6,724.0 512.2,728.4 507.6,732.3" fill="#5a5a5a"/>
<polygon points="507.6,732.3 512.2,728.4 516.8,732.8 512.2,736.7" fill="#5a5a5a"/>
<polygon points="512.2,736.7 516.8,732.8 521.4,737.2 516.8,741.0" fill="#5a5a5a"/>
<polygon points="521.5,745.4 526.0,741.6 530.6,745.9 526.1,749.8" fill="#5a5a5a"/>
<polygon points="507.6,724.0 512.2,720.0 516.8,724.5 512.2,728.4" fill="#5a5a5a"/>
<polygon points="526.0,741.6 530.5,737.7 535.1,742.1 530.6,745.9" fill="#5a5a5a"/>
<polygon points="512.2,720.0 516.8,716.1 521.3,720.5 516.8,724.5" fill="#5a5a5a"/>
<polygon points="521.4,728.9 525.9,725.0 530.5,729.4 525.9,733.3" fill="#5a5a5a"/>
<polygon points="516.8,716.1 521.3,712.1 525.9,716.6 521.3,720.5" fill="#5a5a5a"/>
<polygon points="525.9,725.0 530.4,721.0 535.0,725.5 530.5,729.4" fill="#5a5a5a"/>
<polygon points="530.5,729.4 535.0,725.5 539.5,729.9 535.0,733.8" fill="#5a5a5a"/>
<polygon points="535.0,733.8 539.5,729.9 544.1,734.4 539.6,738.3" fill="#5a5a5a"/>
<polygon points="305.1,453.0 341.9,419.3 376.6,456.7 339.2,490.8" fill="#141414"/>
<polygon points="313.9,453.5 318.5,449.2 322.8,454.0 318.2,458.2" fill="#5a5a5a"/>
<polygon points="318.2,458.2 322.8,454.0 327.1,458.7 322.5,462.9" fill="#5a5a5a"/>
<polygon points="322.5,462.9 327.1,458.7 331.3,463.4 326.7,467.7" fill="#5a5a5a"/>
<polygon points="326.7,467.7 331.3,463.4 335.6,468.1 331.0,472.4" fill="#5a5a5a"/>
<polygon points="339.9,472.8 344.6,468.5 348.9,473.2 344.2,477.5" fill="#5a5a5a"/>
<polygon points="327.4,449.7 332.0,445.5 336.3,450.2 331.7,454.4" fill="#5a5a5a"/>
<polygon points="340.3,463.8 344.9,459.6 349.2,464.3 344.6,468.5" fill="#5a5a5a"/>
<polygon points="344.9,459.6 349.6,455.3 353.9,460.0 349.2,464.3" fill="#5a5a5a"/>
<polygon points="345.6,441.7 350.2,437.5 354.6,442.2 349.9,446.4" fill="#5a5a5a"/>
<polygon points="349.9,446.4 354.6,442.2 358.9,446.9 354.2,451.1" fill="#5a5a5a"/>
<polygon points="354.2,451.1 358.9,446.9 363.2,451.5 358.6,455.8" fill="#5a5a5a"/>
<polygon points="349.5,502.1 387.0,467.9 421.8,505.2 384.1,539.6" fill="#141414"/>
<polygon points="358.5,502.5 363.2,498.2 367.5,502.9 362.8,507.2" fill="#5a5a5a"/>
<polygon points="367.5,502.9 372.2,498.6 376.5,503.3 371.8,507.6" fill="#5a5a5a"/>
<polygon points="372.2,498.6 376.9,494.3 381.2,499.0 376.5,503.3" fill="#5a5a5a"/>
<polygon points="380.8,507.9 385.5,503.6 389.9,508.3 385.1,512.6" fill="#5a5a5a"/>
<polygon points="385.1,512.6 389.9,508.3 394.2,513.0 389.5,517.3" fill="#5a5a5a"/>
<polygon points="389.5,517.3 394.2,513.0 398.5,517.7 393.8,522.0" fill="#5a5a5a"/>
<polygon points="376.9,494.3 381.6,490.0 385.9,494.7 381.2,499.0" fill="#5a5a5a"/>
<polygon points="398.9,508.7 403.6,504.4 408.0,509.1 403.2,513.4" fill="#5a5a5a"/>
<polygon points="381.9,481.0 386.6,476.8 391.0,481.4 386.3,485.7" fill="#5a5a5a"/>
<polygon points="386.3,485.7 391.0,481.4 395.3,486.1 390.6,490.4" fill="#5a5a5a"/>
<polygon points="394.9,495.1 399.7,490.8 404.0,495.5 399.3,499.7" fill="#5a5a5a"/>
<polygon points="403.6,504.4 408.3,500.1 412.7,504.8 408.0,509.1" fill="#5a5a5a"/>
<polygon points="394.5,550.8 432.2,516.4 467.0,553.6 429.4,587.9" fill="#141414"/>
<polygon points="403.5,551.1 408.2,546.8 412.6,551.4 407.9,555.8" fill="#5a5a5a"/>
<polygon points="407.9,555.8 412.6,551.4 416.9,556.1 412.2,560.4" fill="#5a5a5a"/>
<polygon points="425.3,574.3 430.0,570.0 434.4,574.7 429.7,579.0" fill="#5a5a5a"/>
<polygon points="421.3,560.7 426.0,556.5 430.4,561.1 425.7,565.4" fill="#5a5a5a"/>
<polygon points="430.0,570.0 434.7,565.7 439.1,570.4 434.4,574.7" fill="#5a5a5a"/>
<polygon points="421.6,551.8 426.4,547.5 430.7,552.2 426.0,556.5" fill="#5a5a5a"/>
<polygon points="422.0,542.8 426.7,538.6 431.1,543.2 426.4,547.5" fill="#5a5a5a"/>
<polygon points="426.4,547.5 431.1,543.2 435.4,547.9 430.7,552.2" fill="#5a5a5a"/>
<polygon points="435.1,556.8 439.8,552.5 444.2,557.2 439.4,561.5" fill="#5a5a5a"/>
<polygon points="422.4,533.9 427.1,529.6 431.4,534.3 426.7,538.6" fill="#5a5a5a"/>
<polygon points="435.4,547.9 440.1,543.6 444.5,548.2 439.8,552.5" fill="#5a5a5a"/>
<polygon points="435.8,538.9 440.5,534.6 444.9,539.3 440.1,543.6" fill="#5a5a5a"/>
<polygon points="448.9,552.9 453.6,548.6 457.9,553.3 453.2,557.5" fill="#5a5a5a"/>
<polygon points="439.9,599.0 477.4,564.8 512.3,602.0 475.2,635.7" fill="#141414"/>
<polygon points="449.0,599.3 453.7,595.1 458.1,599.7 453.4,603.9" fill="#5a5a5a"/>
<polygon points="462.2,613.1 466.9,608.9 471.3,613.5 466.6,617.8" fill="#5a5a5a"/>
<polygon points="466.6,617.8 471.3,613.5 475.7,618.1 471.0,622.4" fill="#5a5a5a"/>
<polygon points="453.7,595.1 458.4,590.8 462.7,595.4 458.1,599.7" fill="#5a5a5a"/>
<polygon points="462.5,604.3 467.1,600.0 471.5,604.7 466.9,608.9" fill="#5a5a5a"/>
<polygon points="475.7,618.1 480.3,613.9 484.7,618.5 480.1,622.7" fill="#5a5a5a"/>
<polygon points="471.5,604.7 476.2,600.4 480.6,605.1 475.9,609.3" fill="#5a5a5a"/>
<polygon points="480.6,605.1 485.2,600.8 489.6,605.5 485.0,609.7" fill="#5a5a5a"/>
<polygon points="485.0,609.7 489.6,605.5 494.0,610.1 489.4,614.3" fill="#5a5a5a"/>
<polygon points="467.7,582.3 472.4,578.0 476.8,582.6 472.1,586.9" fill="#5a5a5a"/>
<polygon points="476.5,591.5 481.2,587.3 485.5,591.9 480.9,596.2" fill="#5a5a5a"/>
<polygon points="485.2,600.8 489.9,596.6 494.3,601.2 489.6,605.5" fill="#5a5a5a"/>
<polygon points="489.6,605.5 494.3,601.2 498.7,605.9 494.0,610.1" fill="#5a5a5a"/>
<polygon points="476.8,582.6 481.5,578.4 485.8,583.0 481.2,587.3" fill="#5a5a5a"/>
<polygon points="485.8,646.7 522.7,613.2 557.6,650.4 521.5,683.2" fill="#141414"/>
<polygon points="517.1,670.0 521.7,665.9 526.1,670.5 521.6,674.5" fill="#5a5a5a"/>
<polygon points="517.2,661.3 521.8,657.2 526.2,661.8 521.7,665.9" fill="#5a5a5a"/>
<polygon points="521.7,665.9 526.2,661.8 530.7,666.4 526.1,670.5" fill="#5a5a5a"/>
<polygon points="508.5,643.4 513.1,639.2 517.5,643.8 513.0,648.0" fill="#5a5a5a"/>
<polygon points="521.8,657.2 526.4,653.1 530.8,657.7 526.2,661.8" fill="#5a5a5a"/>
<polygon points="513.1,639.2 517.7,635.1 522.1,639.7 517.5,643.8" fill="#5a5a5a"/>
<polygon points="522.0,648.5 526.5,644.3 530.9,648.9 526.4,653.1" fill="#5a5a5a"/>
<polygon points="513.3,630.4 517.9,626.3 522.3,630.9 517.7,635.1" fill="#5a5a5a"/>
<polygon points="517.7,635.1 522.3,630.9 526.7,635.5 522.1,639.7" fill="#5a5a5a"/>
<polygon points="522.1,639.7 526.7,635.5 531.1,640.1 526.5,644.3" fill="#5a5a5a"/>
<polygon points="535.3,653.5 539.9,649.4 544.3,654.0 539.7,658.1" fill="#5a5a5a"/>
<polygon points="531.1,640.1 535.6,636.0 540.0,640.6 535.5,644.8" fill="#5a5a5a"/>
<polygon points="535.5,644.8 540.0,640.6 544.4,645.3 539.9,649.4" fill="#5a5a5a"/>
<polygon points="539.9,649.4 544.4,645.3 548.8,649.9 544.3,654.0" fill="#5a5a5a"/>
<polygon points="532.2,694.1 568.1,661.5 603.0,698.7 568.3,730.2" fill="#141414"/>
<polygon points="545.7,699.1 550.2,695.1 554.7,699.7 550.2,703.6" fill="#5a5a5a"/>
<polygon points="550.2,703.6 554.7,699.7 559.1,704.2 554.7,708.2" fill="#5a5a5a"/>
<polygon points="554.7,708.2 559.1,704.2 563.6,708.8 559.2,712.7" fill="#5a5a5a"/>
<polygon points="550.2,686.5 554.7,682.5 559.1,687.1 554.7,691.1" fill="#5a5a5a"/>
<polygon points="554.7,691.1 559.1,687.1 563.6,691.6 559.1,695.7" fill="#5a5a5a"/>
<polygon points="563.6,700.2 568.0,696.2 572.4,700.8 568.0,704.8" fill="#5a5a5a"/>
<polygon points="559.1,687.1 563.6,683.0 568.0,687.6 563.6,691.6" fill="#5a5a5a"/>
<polygon points="563.6,691.6 568.0,687.6 572.4,692.2 568.0,696.2" fill="#5a5a5a"/>
<polygon points="568.0,696.2 572.4,692.2 576.8,696.8 572.4,700.8" fill="#5a5a5a"/>
<polygon points="572.4,692.2 576.8,688.2 581.2,692.8 576.8,696.8" fill="#5a5a5a"/>
<polygon points="576.8,696.8 581.2,692.8 585.6,697.4 581.3,701.4" fill="#5a5a5a"/>
<polygon points="576.8,688.2 581.2,684.2 585.6,688.8 581.2,692.8" fill="#5a5a5a"/>
<polygon points="353.1,409.3 391.1,376.8 426.2,413.2 388.0,446.5" fill="#141414"/>
<polygon points="375.3,423.8 380.0,419.6 384.4,424.2 379.6,428.4" fill="#5a5a5a"/>
<polygon points="379.6,428.4 384.4,424.2 388.7,428.9 384.0,433.0" fill="#5a5a5a"/>
<polygon points="384.0,433.0 388.7,428.9 393.1,433.5 388.3,437.7" fill="#5a5a5a"/>
<polygon points="380.4,410.9 385.1,406.8 389.5,411.4 384.8,415.5" fill="#5a5a5a"/>
<polygon points="389.1,420.1 393.9,416.0 398.3,420.6 393.5,424.7" fill="#5a5a5a"/>
<polygon points="380.8,402.1 385.5,398.1 389.9,402.6 385.1,406.8" fill="#5a5a5a"/>
<polygon points="385.1,406.8 389.9,402.6 394.3,407.2 389.5,411.4" fill="#5a5a5a"/>
<polygon points="389.5,411.4 394.3,407.2 398.7,411.8 393.9,416.0" fill="#5a5a5a"/>
<polygon points="381.2,393.5 385.9,389.4 390.3,394.0 385.5,398.1" fill="#5a5a5a"/>
<polygon points="385.5,398.1 390.3,394.0 394.7,398.6 389.9,402.6" fill="#5a5a5a"/>
<polygon points="403.0,416.4 407.8,412.3 412.2,416.9 407.4,421.0" fill="#5a5a5a"/>
<polygon points="390.3,394.0 395.1,389.9 399.5,394.5 394.7,398.6" fill="#5a5a5a"/>
<polygon points="394.7,398.6 399.5,394.5 403.9,399.1 399.1,403.1" fill="#5a5a5a"/>
<polygon points="398.4,457.7 436.6,424.2 471.3,461.0 433.1,494.9" fill="#141414"/>
<polygon points="416.2,467.4 420.9,463.2 425.3,467.8 420.5,472.1" fill="#5a5a5a"/>
<polygon points="420.5,472.1 425.3,467.8 429.6,472.5 424.9,476.7" fill="#5a5a5a"/>
<polygon points="412.2,453.9 417.0,449.7 421.4,454.3 416.6,458.5" fill="#5a5a5a"/>
<polygon points="416.6,458.5 421.4,454.3 425.7,459.0 420.9,463.2" fill="#5a5a5a"/>
<polygon points="434.0,477.1 438.7,472.9 443.1,477.5 438.3,481.8" fill="#5a5a5a"/>
<polygon points="425.7,459.0 430.5,454.7 434.8,459.4 430.1,463.6" fill="#5a5a5a"/>
<polygon points="430.1,463.6 434.8,459.4 439.2,464.0 434.4,468.2" fill="#5a5a5a"/>
<polygon points="426.1,450.1 430.9,445.9 435.3,450.5 430.5,454.7" fill="#5a5a5a"/>
<polygon points="443.5,468.6 448.3,464.4 452.6,469.0 447.9,473.3" fill="#5a5a5a"/>
<polygon points="430.9,445.9 435.7,441.7 440.1,446.3 435.3,450.5" fill="#5a5a5a"/>
<polygon points="439.6,455.2 444.4,451.0 448.7,455.6 444.0,459.8" fill="#5a5a5a"/>
<polygon points="444.0,459.8 448.7,455.6 453.1,460.2 448.3,464.4" fill="#5a5a5a"/>
<polygon points="431.4,437.1 436.2,433.0 440.5,437.6 435.7,441.7" fill="#5a5a5a"/>
<polygon points="444.4,451.0 449.2,446.8 453.5,451.4 448.7,455.6" fill="#5a5a5a"/>
<polygon points="448.7,455.6 453.5,451.4 457.9,456.0 453.1,460.2" fill="#5a5a5a"/>
<polygon points="443.6,506.1 481.7,472.1 516.0,509.2 478.3,543.4" fill="#141414"/>
<polygon points="461.3,515.8 466.1,511.5 470.4,516.2 465.7,520.5" fill="#5a5a5a"/>
<polygon points="470.0,525.1 474.7,520.8 479.0,525.5 474.3,529.8" fill="#5a5a5a"/>
<polygon points="457.4,502.2 462.2,498.0 466.5,502.6 461.7,506.9" fill="#5a5a5a"/>
<polygon points="461.7,506.9 466.5,502.6 470.8,507.3 466.1,511.5" fill="#5a5a5a"/>
<polygon points="466.1,511.5 470.8,507.3 475.1,511.9 470.4,516.2" fill="#5a5a5a"/>
<polygon points="475.1,511.9 479.9,507.6 484.2,512.3 479.5,516.6" fill="#5a5a5a"/>
<polygon points="479.5,516.6 484.2,512.3 488.5,517.0 483.8,521.2" fill="#5a5a5a"/>
<polygon points="471.2,498.3 476.0,494.1 480.3,498.7 475.5,503.0" fill="#5a5a5a"/>
<polygon points="471.7,489.4 476.4,485.2 480.7,489.8 476.0,494.1" fill="#5a5a5a"/>
<polygon points="476.0,494.1 480.7,489.8 485.0,494.5 480.3,498.7" fill="#5a5a5a"/>
<polygon points="480.3,498.7 485.0,494.5 489.3,499.1 484.6,503.4" fill="#5a5a5a"/>
<polygon points="493.2,512.7 497.9,508.4 502.2,513.1 497.5,517.3" fill="#5a5a5a"/>
<polygon points="480.7,489.8 485.5,485.6 489.8,490.2 485.0,494.5" fill="#5a5a5a"/>
<polygon points="488.7,554.6 526.2,520.4 560.1,557.8 523.4,591.9" fill="#141414"/>
<polygon points="497.7,555.0 502.4,550.7 506.7,555.4 502.0,559.6" fill="#5a5a5a"/>
<polygon points="515.0,573.6 519.6,569.4 523.9,574.0 519.3,578.3" fill="#5a5a5a"/>
<polygon points="506.7,555.4 511.4,551.1 515.7,555.8 511.0,560.0" fill="#5a5a5a"/>
<polygon points="523.9,574.0 528.6,569.8 532.9,574.5 528.3,578.7" fill="#5a5a5a"/>
<polygon points="507.1,546.4 511.7,542.1 516.0,546.8 511.4,551.1" fill="#5a5a5a"/>
<polygon points="511.4,551.1 516.0,546.8 520.3,551.5 515.7,555.8" fill="#5a5a5a"/>
<polygon points="520.0,560.4 524.6,556.2 528.9,560.8 524.3,565.1" fill="#5a5a5a"/>
<polygon points="516.0,546.8 520.7,542.5 525.0,547.2 520.3,551.5" fill="#5a5a5a"/>
<polygon points="528.9,560.8 533.5,556.6 537.8,561.3 533.2,565.5" fill="#5a5a5a"/>
<polygon points="516.4,537.9 521.1,533.6 525.4,538.3 520.7,542.5" fill="#5a5a5a"/>
<polygon points="520.7,542.5 525.4,538.3 529.6,542.9 525.0,547.2" fill="#5a5a5a"/>
<polygon points="525.0,547.2 529.6,542.9 533.9,547.6 529.3,551.9" fill="#5a5a5a"/>
<polygon points="525.4,538.3 530.0,534.0 534.3,538.7 529.6,542.9" fill="#5a5a5a"/>
<polygon points="529.6,542.9 534.3,538.7 538.5,543.3 533.9,547.6" fill="#5a5a5a"/>
<polygon points="533.7,603.1 570.2,569.1 603.7,606.9 568.4,640.5" fill="#141414"/>
<polygon points="547.0,608.2 551.5,604.0 555.8,608.7 551.3,612.9" fill="#5a5a5a"/>
<polygon points="564.2,626.9 568.7,622.7 573.0,627.4 568.5,631.6" fill="#5a5a5a"/>
<polygon points="568.7,622.7 573.1,618.5 577.4,623.2 573.0,627.4" fill="#5a5a5a"/>
<polygon points="551.7,595.1 556.3,590.8 560.6,595.5 556.0,599.8" fill="#5a5a5a"/>
<polygon points="564.6,609.2 569.1,604.9 573.4,609.6 568.9,613.8" fill="#5a5a5a"/>
<polygon points="568.9,613.8 573.4,609.6 577.6,614.3 573.1,618.5" fill="#5a5a5a"/>
<polygon points="556.3,590.8 560.8,586.6 565.1,591.3 560.6,595.5" fill="#5a5a5a"/>
<polygon points="560.6,595.5 565.1,591.3 569.3,596.0 564.8,600.2" fill="#5a5a5a"/>
<polygon points="564.8,600.2 569.3,596.0 573.6,600.7 569.1,604.9" fill="#5a5a5a"/>
<polygon points="573.4,609.6 577.8,605.4 582.1,610.1 577.6,614.3" fill="#5a5a5a"/>
<polygon points="569.3,596.0 573.8,591.8 578.1,596.5 573.6,600.7" fill="#5a5a5a"/>
<polygon points="573.6,600.7 578.1,596.5 582.3,601.2 577.8,605.4" fill="#5a5a5a"/>
<polygon points="577.8,605.4 582.3,601.2 586.5,605.9 582.1,610.1" fill="#5a5a5a"/>
<polygon points="573.8,591.8 578.3,587.5 582.5,592.2 578.1,596.5" fill="#5a5a5a"/>
<polygon points="578.7,651.7 613.7,618.3 646.9,656.4 613.3,689.1" fill="#141414"/>
<polygon points="600.4,666.3 604.7,662.2 609.0,666.9 604.7,671.0" fill="#5a5a5a"/>
<polygon points="609.0,675.7 613.2,671.6 617.5,676.3 613.2,680.4" fill="#5a5a5a"/>
<polygon points="604.7,662.2 609.0,658.1 613.2,662.8 609.0,666.9" fill="#5a5a5a"/>
<polygon points="609.0,666.9 613.2,662.8 617.5,667.5 613.2,671.6" fill="#5a5a5a"/>
<polygon points="613.2,671.6 617.5,667.5 621.7,672.2 617.5,676.3" fill="#5a5a5a"/>
<polygon points="596.2,643.9 600.6,639.8 604.8,644.5 600.5,648.6" fill="#5a5a5a"/>
<polygon points="609.0,658.1 613.3,654.0 617.5,658.7 613.2,662.8" fill="#5a5a5a"/>
<polygon points="604.8,644.5 609.1,640.3 613.4,645.1 609.0,649.2" fill="#5a5a5a"/>
<polygon points="621.7,663.4 626.0,659.3 630.2,664.0 626.0,668.1" fill="#5a5a5a"/>
<polygon points="621.8,654.6 626.0,650.4 630.2,655.2 626.0,659.3" fill="#5a5a5a"/>
<polygon points="626.0,659.3 630.2,655.2 634.4,659.9 630.2,664.0" fill="#5a5a5a"/>
<polygon points="609.3,631.4 613.6,627.3 617.8,632.0 613.5,636.2" fill="#5a5a5a"/>
<polygon points="613.5,636.2 617.8,632.0 621.9,636.8 617.6,640.9" fill="#5a5a5a"/>
<polygon points="402.7,367.2 441.9,335.8 476.9,370.9 437.8,403.4" fill="#141414"/>
<polygon points="420.7,376.7 425.6,372.7 430.0,377.2 425.1,381.2" fill="#5a5a5a"/>
<polygon points="433.9,390.2 438.8,386.2 443.1,390.7 438.3,394.7" fill="#5a5a5a"/>
<polygon points="425.6,372.7 430.5,368.7 434.9,373.2 430.0,377.2" fill="#5a5a5a"/>
<polygon points="434.4,381.7 439.3,377.7 443.6,382.1 438.8,386.2" fill="#5a5a5a"/>
<polygon points="438.8,386.2 443.6,382.1 448.0,386.6 443.1,390.7" fill="#5a5a5a"/>
<polygon points="421.7,359.8 426.6,355.8 431.0,360.3 426.1,364.2" fill="#5a5a5a"/>
<polygon points="434.9,373.2 439.8,369.2 444.1,373.6 439.3,377.7" fill="#5a5a5a"/>
<polygon points="439.3,377.7 444.1,373.6 448.5,378.1 443.6,382.1" fill="#5a5a5a"/>
<polygon points="443.6,382.1 448.5,378.1 452.9,382.6 448.0,386.6" fill="#5a5a5a"/>
<polygon points="431.0,360.3 435.9,356.3 440.3,360.8 435.4,364.7" fill="#5a5a5a"/>
<polygon points="435.4,364.7 440.3,360.8 444.7,365.2 439.8,369.2" fill="#5a5a5a"/>
<polygon points="439.8,369.2 444.7,365.2 449.0,369.6 444.1,373.6" fill="#5a5a5a"/>
<polygon points="431.5,351.9 436.4,348.0 440.8,352.4 435.9,356.3" fill="#5a5a5a"/>
<polygon points="435.9,356.3 440.8,352.4 445.2,356.8 440.3,360.8" fill="#5a5a5a"/>
<polygon points="453.4,374.1 458.3,370.1 462.7,374.5 457.8,378.5" fill="#5a5a5a"/>
<polygon points="436.4,348.0 441.3,344.1 445.7,348.5 440.8,352.4" fill="#5a5a5a"/>
<polygon points="449.6,361.2 454.5,357.3 458.9,361.7 454.0,365.6" fill="#5a5a5a"/>
<polygon points="454.0,365.6 458.9,361.7 463.2,366.1 458.3,370.1" fill="#5a5a5a"/>
<polygon points="448.2,414.3 487.2,381.6 521.4,417.4 482.8,450.9" fill="#141414"/>
<polygon points="457.4,414.7 462.3,410.6 466.6,415.1 461.8,419.3" fill="#5a5a5a"/>
<polygon points="466.6,415.1 471.5,411.0 475.8,415.5 470.9,419.7" fill="#5a5a5a"/>
<polygon points="475.2,424.2 480.1,420.1 484.4,424.6 479.6,428.8" fill="#5a5a5a"/>
<polygon points="479.6,428.8 484.4,424.6 488.7,429.2 483.9,433.3" fill="#5a5a5a"/>
<polygon points="488.7,429.2 493.5,425.0 497.8,429.5 493.0,433.7" fill="#5a5a5a"/>
<polygon points="472.0,402.4 476.9,398.3 481.2,402.8 476.3,406.9" fill="#5a5a5a"/>
<polygon points="489.2,420.5 494.1,416.3 498.4,420.8 493.5,425.0" fill="#5a5a5a"/>
<polygon points="485.5,407.3 490.4,403.1 494.7,407.7 489.8,411.8" fill="#5a5a5a"/>
<polygon points="489.8,411.8 494.7,407.7 499.0,412.2 494.1,416.3" fill="#5a5a5a"/>
<polygon points="481.8,394.2 486.7,390.1 491.0,394.6 486.1,398.7" fill="#5a5a5a"/>
<polygon points="499.0,412.2 503.8,408.0 508.1,412.5 503.2,416.7" fill="#5a5a5a"/>
<polygon points="503.2,416.7 508.1,412.5 512.4,417.0 507.5,421.2" fill="#5a5a5a"/>
<polygon points="493.1,461.9 531.6,428.3 565.0,464.8 527.3,498.9" fill="#141414"/>
<polygon points="515.0,476.1 519.8,471.9 524.0,476.5 519.3,480.8" fill="#5a5a5a"/>
<polygon points="519.8,471.9 524.5,467.6 528.7,472.3 524.0,476.5" fill="#5a5a5a"/>
<polygon points="528.2,481.1 533.0,476.9 537.2,481.5 532.5,485.8" fill="#5a5a5a"/>
<polygon points="524.5,467.6 529.3,463.4 533.5,468.0 528.7,472.3" fill="#5a5a5a"/>
<polygon points="528.7,472.3 533.5,468.0 537.7,472.6 533.0,476.9" fill="#5a5a5a"/>
<polygon points="525.1,458.8 529.8,454.6 534.0,459.2 529.3,463.4" fill="#5a5a5a"/>
<polygon points="529.3,463.4 534.0,459.2 538.3,463.8 533.5,468.0" fill="#5a5a5a"/>
<polygon points="521.4,445.4 526.2,441.2 530.4,445.8 525.6,450.0" fill="#5a5a5a"/>
<polygon points="534.0,459.2 538.8,454.9 543.0,459.5 538.3,463.8" fill="#5a5a5a"/>
<polygon points="542.5,468.4 547.2,464.1 551.4,468.7 546.6,473.0" fill="#5a5a5a"/>
<polygon points="538.8,454.9 543.6,450.7 547.8,455.3 543.0,459.5" fill="#5a5a5a"/>
<polygon points="537.4,510.1 574.9,475.9 607.4,513.1 571.1,547.6" fill="#141414"/>
<polygon points="563.1,529.2 567.7,524.9 571.9,529.6 567.3,533.9" fill="#5a5a5a"/>
<polygon points="555.2,510.9 559.8,506.6 564.0,511.3 559.4,515.5" fill="#5a5a5a"/>
<polygon points="571.9,529.6 576.5,525.3 580.6,530.0 576.0,534.3" fill="#5a5a5a"/>
<polygon points="559.8,506.6 564.5,502.3 568.6,507.0 564.0,511.3" fill="#5a5a5a"/>
<polygon points="564.0,511.3 568.6,507.0 572.8,511.6 568.2,515.9" fill="#5a5a5a"/>
<polygon points="572.3,520.6 576.9,516.3 581.0,521.0 576.5,525.3" fill="#5a5a5a"/>
<polygon points="564.5,502.3 569.1,498.0 573.3,502.7 568.6,507.0" fill="#5a5a5a"/>
<polygon points="572.8,511.6 577.4,507.3 581.5,512.0 576.9,516.3" fill="#5a5a5a"/>
<polygon points="569.1,498.0 573.8,493.7 577.9,498.4 573.3,502.7" fill="#5a5a5a"/>
<polygon points="585.6,516.7 590.2,512.4 594.3,517.1 589.7,521.4" fill="#5a5a5a"/>
<polygon points="586.1,507.7 590.7,503.4 594.8,508.1 590.2,512.4" fill="#5a5a5a"/>
<polygon points="581.1,558.9 617.1,524.4 648.9,562.4 614.2,596.7" fill="#141414"/>
<polygon points="602.1,573.5 606.6,569.2 610.7,573.9 606.3,578.2" fill="#5a5a5a"/>
<polygon points="594.2,555.0 598.7,550.7 602.8,555.4 598.4,559.7" fill="#5a5a5a"/>
<polygon points="606.6,569.2 611.0,564.9 615.1,569.7 610.7,573.9" fill="#5a5a5a"/>
<polygon points="614.8,578.7 619.2,574.4 623.2,579.2 618.9,583.4" fill="#5a5a5a"/>
<polygon points="602.8,555.4 607.3,551.1 611.4,555.9 606.9,560.2" fill="#5a5a5a"/>
<polygon points="615.1,569.7 619.5,565.4 623.5,570.1 619.2,574.4" fill="#5a5a5a"/>
<polygon points="619.2,574.4 623.5,570.1 627.6,574.9 623.2,579.2" fill="#5a5a5a"/>
<polygon points="607.3,551.1 611.8,546.8 615.8,551.6 611.4,555.9" fill="#5a5a5a"/>
<polygon points="611.4,555.9 615.8,551.6 619.9,556.3 615.4,560.6" fill="#5a5a5a"/>
<polygon points="615.4,560.6 619.9,556.3 623.9,561.1 619.5,565.4" fill="#5a5a5a"/>
<polygon points="619.5,565.4 623.9,561.1 627.9,565.8 623.5,570.1" fill="#5a5a5a"/>
<polygon points="615.8,551.6 620.2,547.3 624.3,552.0 619.9,556.3" fill="#5a5a5a"/>
<polygon points="623.9,561.1 628.3,556.8 632.3,561.5 627.9,565.8" fill="#5a5a5a"/>
<polygon points="624.1,608.2 658.3,573.9 689.2,612.6 656.8,646.5" fill="#141414"/>
<polygon points="632.5,608.7 636.8,604.4 640.8,609.2 636.6,613.5" fill="#5a5a5a"/>
<polygon points="652.8,632.7 656.9,628.4 661.0,633.3 656.9,637.5" fill="#5a5a5a"/>
<polygon points="656.9,628.4 661.1,624.2 665.1,629.1 661.0,633.3" fill="#5a5a5a"/>
<polygon points="645.1,605.0 649.3,600.7 653.3,605.5 649.1,609.8" fill="#5a5a5a"/>
<polygon points="653.1,614.6 657.2,610.3 661.2,615.2 657.1,619.4" fill="#5a5a5a"/>
<polygon points="653.3,605.5 657.5,601.3 661.4,606.1 657.2,610.3" fill="#5a5a5a"/>
<polygon points="657.2,610.3 661.4,606.1 665.4,610.9 661.2,615.2" fill="#5a5a5a"/>
<polygon points="661.2,615.2 665.4,610.9 669.3,615.7 665.2,620.0" fill="#5a5a5a"/>
<polygon points="665.2,620.0 669.3,615.7 673.2,620.6 669.2,624.8" fill="#5a5a5a"/>
<polygon points="665.4,610.9 669.5,606.6 673.4,611.5 669.3,615.7" fill="#5a5a5a"/>
<polygon points="669.3,615.7 673.4,611.5 677.3,616.3 673.2,620.6" fill="#5a5a5a"/>
<polygon points="657.7,592.2 661.9,587.9 665.8,592.7 661.6,597.0" fill="#5a5a5a"/>
<polygon points="661.6,597.0 665.8,592.7 669.7,597.5 665.6,601.8" fill="#5a5a5a"/>
<polygon points="669.5,606.6 673.6,602.3 677.5,607.2 673.4,611.5" fill="#5a5a5a"/>
<polygon points="453.8,326.6 494.1,296.4 528.7,329.8 488.7,361.3" fill="#141414"/>
<polygon points="463.2,327.1 468.2,323.2 472.6,327.5 467.6,331.4" fill="#5a5a5a"/>
<polygon points="476.3,340.0 481.3,336.1 485.7,340.4 480.7,344.3" fill="#5a5a5a"/>
<polygon points="468.2,323.2 473.2,319.4 477.6,323.7 472.6,327.5" fill="#5a5a5a"/>
<polygon points="476.9,331.8 481.9,327.9 486.3,332.2 481.3,336.1" fill="#5a5a5a"/>
<polygon points="481.3,336.1 486.3,332.2 490.7,336.5 485.7,340.4" fill="#5a5a5a"/>
<polygon points="485.7,340.4 490.7,336.5 495.0,340.8 490.0,344.7" fill="#5a5a5a"/>
<polygon points="486.3,332.2 491.3,328.3 495.7,332.6 490.7,336.5" fill="#5a5a5a"/>
<polygon points="490.7,336.5 495.7,332.6 500.0,336.9 495.0,340.8" fill="#5a5a5a"/>
<polygon points="483.3,311.8 488.3,308.0 492.7,312.2 487.6,316.0" fill="#5a5a5a"/>
<polygon points="492.0,320.2 497.0,316.4 501.4,320.6 496.3,324.5" fill="#5a5a5a"/>
<polygon points="505.0,333.0 510.0,329.1 514.3,333.3 509.3,337.2" fill="#5a5a5a"/>
<polygon points="488.3,308.0 493.4,304.3 497.8,308.4 492.7,312.2" fill="#5a5a5a"/>
<polygon points="497.0,316.4 502.1,312.6 506.4,316.8 501.4,320.6" fill="#5a5a5a"/>
<polygon points="510.0,329.1 515.1,325.2 519.4,329.4 514.3,333.3" fill="#5a5a5a"/>
<polygon points="499.1,371.9 538.8,339.9 572.2,374.4 533.1,407.4" fill="#141414"/>
<polygon points="508.3,372.2 513.2,368.2 517.5,372.6 512.6,376.6" fill="#5a5a5a"/>
<polygon points="529.5,394.4 534.4,390.2 538.6,394.7 533.8,398.8" fill="#5a5a5a"/>
<polygon points="513.2,368.2 518.2,364.2 522.4,368.6 517.5,372.6" fill="#5a5a5a"/>
<polygon points="517.5,372.6 522.4,368.6 526.7,372.9 521.8,377.0" fill="#5a5a5a"/>
<polygon points="521.8,377.0 526.7,372.9 530.9,377.3 526.0,381.4" fill="#5a5a5a"/>
<polygon points="518.2,364.2 523.1,360.2 527.4,364.5 522.4,368.6" fill="#5a5a5a"/>
<polygon points="523.1,360.2 528.1,356.2 532.3,360.5 527.4,364.5" fill="#5a5a5a"/>
<polygon points="527.4,364.5 532.3,360.5 536.6,364.8 531.6,368.9" fill="#5a5a5a"/>
<polygon points="531.6,368.9 536.6,364.8 540.8,369.2 535.8,373.3" fill="#5a5a5a"/>
<polygon points="535.8,373.3 540.8,369.2 545.0,373.6 540.0,377.6" fill="#5a5a5a"/>
<polygon points="540.8,369.2 545.7,365.1 549.9,369.5 545.0,373.6" fill="#5a5a5a"/>
<polygon points="541.5,360.8 546.5,356.8 550.7,361.1 545.7,365.1" fill="#5a5a5a"/>
<polygon points="554.1,373.9 559.0,369.8 563.1,374.1 558.2,378.2" fill="#5a5a5a"/>
<polygon points="543.2,418.2 582.0,384.9 614.1,420.5 576.3,454.6" fill="#141414"/>
<polygon points="556.3,423.0 561.1,418.8 565.3,423.3 560.5,427.6" fill="#5a5a5a"/>
<polygon points="560.5,427.6 565.3,423.3 569.4,427.9 564.6,432.1" fill="#5a5a5a"/>
<polygon points="564.6,432.1 569.4,427.9 573.5,432.4 568.7,436.6" fill="#5a5a5a"/>
<polygon points="561.1,418.8 566.0,414.6 570.1,419.1 565.3,423.3" fill="#5a5a5a"/>
<polygon points="569.4,427.9 574.2,423.6 578.3,428.2 573.5,432.4" fill="#5a5a5a"/>
<polygon points="573.5,432.4 578.3,428.2 582.3,432.7 577.6,436.9" fill="#5a5a5a"/>
<polygon points="587.1,428.4 591.8,424.2 595.9,428.7 591.1,433.0" fill="#5a5a5a"/>
<polygon points="571.5,401.8 576.3,397.6 580.4,402.1 575.6,406.3" fill="#5a5a5a"/>
<polygon points="579.7,410.7 584.5,406.5 588.5,411.0 583.8,415.2" fill="#5a5a5a"/>
<polygon points="587.8,419.7 592.6,415.5 596.6,420.0 591.8,424.2" fill="#5a5a5a"/>
<polygon points="591.8,424.2 596.6,420.0 600.6,424.5 595.9,428.7" fill="#5a5a5a"/>
<polygon points="576.3,397.6 581.2,393.5 585.3,397.9 580.4,402.1" fill="#5a5a5a"/>
<polygon points="588.5,411.0 593.3,406.8 597.4,411.3 592.6,415.5" fill="#5a5a5a"/>
<polygon points="592.6,415.5 597.4,411.3 601.4,415.7 596.6,420.0" fill="#5a5a5a"/>
<polygon points="596.6,420.0 601.4,415.7 605.4,420.2 600.6,424.5" fill="#5a5a5a"/>
<polygon points="586.1,465.6 623.5,431.3 654.3,468.0 618.3,502.8" fill="#141414"/>
<polygon points="610.9,484.4 615.5,480.1 619.4,484.8 614.9,489.1" fill="#5a5a5a"/>
<polygon points="615.5,480.1 620.0,475.8 624.0,480.4 619.4,484.8" fill="#5a5a5a"/>
<polygon points="612.1,466.5 616.7,462.2 620.7,466.8 616.1,471.2" fill="#5a5a5a"/>
<polygon points="616.1,471.2 620.7,466.8 624.6,471.5 620.0,475.8" fill="#5a5a5a"/>
<polygon points="620.0,475.8 624.6,471.5 628.5,476.1 624.0,480.4" fill="#5a5a5a"/>
<polygon points="624.0,480.4 628.5,476.1 632.4,480.7 627.9,485.1" fill="#5a5a5a"/>
<polygon points="628.5,476.1 633.1,471.8 637.0,476.4 632.4,480.7" fill="#5a5a5a"/>
<polygon points="613.4,448.7 618.1,444.4 622.0,449.0 617.4,453.3" fill="#5a5a5a"/>
<polygon points="617.4,453.3 622.0,449.0 626.0,453.6 621.3,457.9" fill="#5a5a5a"/>
<polygon points="625.3,462.5 629.9,458.2 633.7,462.8 629.2,467.1" fill="#5a5a5a"/>
<polygon points="629.2,467.1 633.7,462.8 637.6,467.4 633.1,471.8" fill="#5a5a5a"/>
<polygon points="618.1,444.4 622.7,440.1 626.7,444.7 622.0,449.0" fill="#5a5a5a"/>
<polygon points="622.0,449.0 626.7,444.7 630.6,449.3 626.0,453.6" fill="#5a5a5a"/>
<polygon points="626.0,453.6 630.6,449.3 634.4,453.9 629.9,458.2" fill="#5a5a5a"/>
<polygon points="637.6,467.4 642.2,463.1 646.0,467.7 641.5,472.1" fill="#5a5a5a"/>
<polygon points="627.8,514.0 663.4,479.1 693.0,516.9 659.1,552.0" fill="#141414"/>
<polygon points="651.8,533.3 656.1,529.0 660.0,533.7 655.7,538.1" fill="#5a5a5a"/>
<polygon points="660.0,533.7 664.3,529.4 668.1,534.1 663.8,538.5" fill="#5a5a5a"/>
<polygon points="648.9,510.4 653.3,506.0 657.2,510.8 652.8,515.1" fill="#5a5a5a"/>
<polygon points="656.6,519.9 661.0,515.5 664.8,520.2 660.5,524.6" fill="#5a5a5a"/>
<polygon points="660.5,524.6 664.8,520.2 668.6,525.0 664.3,529.4" fill="#5a5a5a"/>
<polygon points="664.3,529.4 668.6,525.0 672.4,529.8 668.1,534.1" fill="#5a5a5a"/>
<polygon points="657.2,510.8 661.5,506.4 665.3,511.1 661.0,515.5" fill="#5a5a5a"/>
<polygon points="653.9,497.0 658.3,492.6 662.1,497.3 657.7,501.7" fill="#5a5a5a"/>
<polygon points="669.1,515.9 673.4,511.5 677.1,516.2 672.9,520.6" fill="#5a5a5a"/>
<polygon points="658.3,492.6 662.7,488.2 666.5,492.9 662.1,497.3" fill="#5a5a5a"/>
<polygon points="662.1,497.3 666.5,492.9 670.2,497.6 665.9,502.0" fill="#5a5a5a"/>
<polygon points="673.4,511.5 677.7,507.1 681.4,511.8 677.1,516.2" fill="#5a5a5a"/>
<polygon points="668.4,563.5 701.7,528.4 730.0,567.3 698.8,602.3" fill="#141414"/>
<polygon points="676.4,564.0 680.5,559.6 684.3,564.5 680.2,568.8" fill="#5a5a5a"/>
<polygon points="691.8,574.1 695.9,569.8 699.6,574.6 695.5,579.0" fill="#5a5a5a"/>
<polygon points="699.2,583.9 703.2,579.5 706.9,584.4 703.0,588.8" fill="#5a5a5a"/>
<polygon points="684.7,555.3 688.8,550.9 692.5,555.7 688.4,560.1" fill="#5a5a5a"/>
<polygon points="688.4,560.1 692.5,555.7 696.2,560.5 692.1,564.9" fill="#5a5a5a"/>
<polygon points="688.8,550.9 692.9,546.5 696.6,551.3 692.5,555.7" fill="#5a5a5a"/>
<polygon points="696.6,551.3 700.7,546.9 704.3,551.7 700.3,556.2" fill="#5a5a5a"/>
<polygon points="700.3,556.2 704.3,551.7 707.9,556.6 703.9,561.0" fill="#5a5a5a"/>
<polygon points="697.1,542.1 701.2,537.7 704.8,542.5 700.7,546.9" fill="#5a5a5a"/>
<polygon points="711.6,561.5 715.5,557.0 719.1,561.9 715.1,566.3" fill="#5a5a5a"/>
<circle cx="213.6" cy="545.0" r="2.9" fill="#c01860" stroke="#ff10ff" stroke-width="1.7"/>
<circle cx="248.1" cy="508.9" r="2.9" fill="#c01860" stroke="#ff10ff" stroke-width="1.7"/>
<circle cx="280.8" cy="546.9" r="2.9" fill="#c01860" stroke="#ff10ff" stroke-width="1.7"/>
<circle cx="245.2" cy="582.8" r="2.9" fill="#c01860" stroke="#ff10ff" stroke-width="1.7"/>
<circle cx="254.8" cy="594.0" r="2.9" fill="#c01860" stroke="#ff10ff" stroke-width="1.7"/>
<circle cx="290.8" cy="558.2" r="2.9" fill="#c01860" stroke="#ff10ff" stroke-width="1.7"/>
<circle cx="324.4" cy="595.3" r="2.9" fill="#c01860" stroke="#ff10ff" stroke-width="1.7"/>
<circle cx="287.6" cy="630.6" r="2.9" fill="#c01860" stroke="#ff10ff" stroke-width="1.7"/>
<circle cx="297.7" cy="641.5" r="2.9" fill="#c01860" stroke="#ff10ff" stroke-width="1.7"/>
<circle cx="334.7" cy="606.4" r="2.9" fill="#c01860" stroke="#ff10ff" stroke-width="1.7"/>
<circle cx="369.3" cy="642.7" r="2.9" fill="#c01860" stroke="#ff10ff" stroke-width="1.7"/>
<circle cx="331.7" cy="677.1" r="2.9" fill="#c01860" stroke="#ff10ff" stroke-width="1.7"/>
<circle cx="342.1" cy="687.6" r="2.9" fill="#c01860" stroke="#ff10ff" stroke-width="1.7"/>
<circle cx="379.8" cy="653.5" r="2.9" fill="#c01860" stroke="#ff10ff" stroke-width="1.7"/>
<circle cx="415.2" cy="689.1" r="2.9" fill="#c01860" stroke="#ff10ff" stroke-width="1.7"/>
<circle cx="377.4" cy="722.0" r="2.9" fill="#c01860" stroke="#ff10ff" stroke-width="1.7"/>
<circle cx="388.2" cy="732.2" r="2.9" fill="#c01860" stroke="#ff10ff" stroke-width="1.7"/>
<circle cx="426.0" cy="699.6" r="2.9" fill="#c01860" stroke="#ff10ff" stroke-width="1.7"/>
<circle cx="462.4" cy="734.4" r="2.9" fill="#c01860" stroke="#ff10ff" stroke-width="1.7"/>
<circle cx="424.8" cy="765.6" r="2.9" fill="#c01860" stroke="#ff10ff" stroke-width="1.7"/>
<circle cx="435.9" cy="775.4" r="2.9" fill="#c01860" stroke="#ff10ff" stroke-width="1.7"/>
<circle cx="473.5" cy="744.7" r="2.9" fill="#c01860" stroke="#ff10ff" stroke-width="1.7"/>
<circle cx="510.8" cy="778.6" r="2.9" fill="#c01860" stroke="#ff10ff" stroke-width="1.7"/>
<circle cx="473.7" cy="807.7" r="2.9" fill="#c01860" stroke="#ff10ff" stroke-width="1.7"/>
<circle cx="258.6" cy="498.2" r="2.9" fill="#c01860" stroke="#ff10ff" stroke-width="1.7"/>
<circle cx="294.2" cy="463.3" r="2.9" fill="#c01860" stroke="#ff10ff" stroke-width="1.7"/>
<circle cx="328.2" cy="501.2" r="2.9" fill="#c01860" stroke="#ff10ff" stroke-width="1.7"/>
<circle cx="291.6" cy="536.2" r="2.9" fill="#c01860" stroke="#ff10ff" stroke-width="1.7"/>
<circle cx="301.7" cy="547.5" r="2.9" fill="#c01860" stroke="#ff10ff" stroke-width="1.7"/>
<circle cx="338.4" cy="512.5" r="2.9" fill="#c01860" stroke="#ff10ff" stroke-width="1.7"/>
<circle cx="372.8" cy="550.0" r="2.9" fill="#c01860" stroke="#ff10ff" stroke-width="1.7"/>
<circle cx="335.6" cy="584.8" r="2.9" fill="#c01860" stroke="#ff10ff" stroke-width="1.7"/>
<circle cx="345.8" cy="595.9" r="2.9" fill="#c01860" stroke="#ff10ff" stroke-width="1.7"/>
<circle cx="383.2" cy="561.1" r="2.9" fill="#c01860" stroke="#ff10ff" stroke-width="1.7"/>
<circle cx="418.1" cy="598.2" r="2.9" fill="#c01860" stroke="#ff10ff" stroke-width="1.7"/>
<circle cx="380.5" cy="632.4" r="2.9" fill="#c01860" stroke="#ff10ff" stroke-width="1.7"/>
<circle cx="391.0" cy="643.3" r="2.9" fill="#c01860" stroke="#ff10ff" stroke-width="1.7"/>
<circle cx="428.6" cy="609.2" r="2.9" fill="#c01860" stroke="#ff10ff" stroke-width="1.7"/>
<circle cx="464.0" cy="645.8" r="2.9" fill="#c01860" stroke="#ff10ff" stroke-width="1.7"/>
<circle cx="426.5" cy="679.1" r="2.9" fill="#c01860" stroke="#ff10ff" stroke-width="1.7"/>
<circle cx="437.3" cy="689.8" r="2.9" fill="#c01860" stroke="#ff10ff" stroke-width="1.7"/>
<circle cx="474.7" cy="656.7" r="2.9" fill="#c01860" stroke="#ff10ff" stroke-width="1.7"/>
<circle cx="510.5" cy="692.9" r="2.9" fill="#c01860" stroke="#ff10ff" stroke-width="1.7"/>
<circle cx="473.6" cy="724.9" r="2.9" fill="#c01860" stroke="#ff10ff" stroke-width="1.7"/>
<circle cx="484.6" cy="735.3" r="2.9" fill="#c01860" stroke="#ff10ff" stroke-width="1.7"/>
<circle cx="521.4" cy="703.7" r="2.9" fill="#c01860" stroke="#ff10ff" stroke-width="1.7"/>
<circle cx="557.7" cy="739.4" r="2.9" fill="#c01860" stroke="#ff10ff" stroke-width="1.7"/>
<circle cx="521.8" cy="769.7" r="2.9" fill="#c01860" stroke="#ff10ff" stroke-width="1.7"/>
<circle cx="305.1" cy="453.0" r="2.9" fill="#c01860" stroke="#ff10ff" stroke-width="1.7"/>
<circle cx="341.9" cy="419.3" r="2.9" fill="#c01860" stroke="#ff10ff" stroke-width="1.7"/>
<circle cx="376.6" cy="456.7" r="2.9" fill="#c01860" stroke="#ff10ff" stroke-width="1.7"/>
<circle cx="339.2" cy="490.8" r="2.9" fill="#c01860" stroke="#ff10ff" stroke-width="1.7"/>
<circle cx="349.5" cy="502.1" r="2.9" fill="#c01860" stroke="#ff10ff" stroke-width="1.7"/>
<circle cx="387.0" cy="467.9" r="2.9" fill="#c01860" stroke="#ff10ff" stroke-width="1.7"/>
<circle cx="421.8" cy="505.2" r="2.9" fill="#c01860" stroke="#ff10ff" stroke-width="1.7"/>
<circle cx="384.1" cy="539.6" r="2.9" fill="#c01860" stroke="#ff10ff" stroke-width="1.7"/>
<circle cx="394.5" cy="550.8" r="2.9" fill="#c01860" stroke="#ff10ff" stroke-width="1.7"/>
<circle cx="432.2" cy="516.4" r="2.9" fill="#c01860" stroke="#ff10ff" stroke-width="1.7"/>
<circle cx="467.0" cy="553.6" r="2.9" fill="#c01860" stroke="#ff10ff" stroke-width="1.7"/>
<circle cx="429.4" cy="587.9" r="2.9" fill="#c01860" stroke="#ff10ff" stroke-width="1.7"/>
<circle cx="439.9" cy="599.0" r="2.9" fill="#c01860" stroke="#ff10ff" stroke-width="1.7"/>
<circle cx="477.4" cy="564.8" r="2.9" fill="#c01860" stroke="#ff10ff" stroke-width="1.7"/>
<circle cx="512.3" cy="602.0" r="2.9" fill="#c01860" stroke="#ff10ff" stroke-width="1.7"/>
<circle cx="475.2" cy="635.7" r="2.9" fill="#c01860" stroke="#ff10ff" stroke-width="1.7"/>
<circle cx="485.8" cy="646.7" r="2.9" fill="#c01860" stroke="#ff10ff" stroke-width="1.7"/>
<circle cx="522.7" cy="613.2" r="2.9" fill="#c01860" stroke="#ff10ff" stroke-width="1.7"/>
<circle cx="557.6" cy="650.4" r="2.9" fill="#c01860" stroke="#ff10ff" stroke-width="1.7"/>
<circle cx="521.5" cy="683.2" r="2.9" fill="#c01860" stroke="#ff10ff" stroke-width="1.7"/>
<circle cx="532.2" cy="694.1" r="2.9" fill="#c01860" stroke="#ff10ff" stroke-width="1.7"/>
<circle cx="568.1" cy="661.5" r="2.9" fill="#c01860" stroke="#ff10ff" stroke-width="1.7"/>
<circle cx="603.0" cy="698.7" r="2.9" fill="#c01860" stroke="#ff10ff" stroke-width="1.7"/>
<circle cx="568.3" cy="730.2" r="2.9" fill="#c01860" stroke="#ff10ff" stroke-width="1.7"/>
<circle cx="353.1" cy="409.3" r="2.9" fill="#c01860" stroke="#ff10ff" stroke-width="1.7"/>
<circle cx="391.1" cy="376.8" r="2.9" fill="#c01860" stroke="#ff10ff" stroke-width="1.7"/>
<circle cx="426.2" cy="413.2" r="2.9" fill="#c01860" stroke="#ff10ff" stroke-width="1.7"/>
<circle cx="388.0" cy="446.5" r="2.9" fill="#c01860" stroke="#ff10ff" stroke-width="1.7"/>
<circle cx="398.4" cy="457.7" r="2.9" fill="#c01860" stroke="#ff10ff" stroke-width="1.7"/>
<circle cx="436.6" cy="424.2" r="2.9" fill="#c01860" stroke="#ff10ff" stroke-width="1.7"/>
<circle cx="471.3" cy="461.0" r="2.9" fill="#c01860" stroke="#ff10ff" stroke-width="1.7"/>
<circle cx="433.1" cy="494.9" r="2.9" fill="#c01860" stroke="#ff10ff" stroke-width="1.7"/>
<circle cx="443.6" cy="506.1" r="2.9" fill="#c01860" stroke="#ff10ff" stroke-width="1.7"/>
<circle cx="481.7" cy="472.1" r="2.9" fill="#c01860" stroke="#ff10ff" stroke-width="1.7"/>
<circle cx="516.0" cy="509.2" r="2.9" fill="#c01860" stroke="#ff10ff" stroke-width="1.7"/>
<circle cx="478.3" cy="543.4" r="2.9" fill="#c01860" stroke="#ff10ff" stroke-width="1.7"/>
<circle cx="488.7" cy="554.6" r="2.9" fill="#c01860" stroke="#ff10ff" stroke-width="1.7"/>
<circle cx="526.2" cy="520.4" r="2.9" fill="#c01860" stroke="#ff10ff" stroke-width="1.7"/>
<circle cx="560.1" cy="557.8" r="2.9" fill="#c01860" stroke="#ff10ff" stroke-width="1.7"/>
<circle cx="523.4" cy="591.9" r="2.9" fill="#c01860" stroke="#ff10ff" stroke-width="1.7"/>
<circle cx="533.7" cy="603.1" r="2.9" fill="#c01860" stroke="#ff10ff" stroke-width="1.7"/>
<circle cx="570.2" cy="569.1" r="2.9" fill="#c01860" stroke="#ff10ff" stroke-width="1.7"/>
<circle cx="603.7" cy="606.9" r="2.9" fill="#c01860" stroke="#ff10ff" stroke-width="1.7"/>
<circle cx="568.4" cy="640.5" r="2.9" fill="#c01860" stroke="#ff10ff" stroke-width="1.7"/>
<circle cx="578.7" cy="651.7" r="2.9" fill="#c01860" stroke="#ff10ff" stroke-width="1.7"/>
<circle cx="613.7" cy="618.3" r="2.9" fill="#c01860" stroke="#ff10ff" stroke-width="1.7"/>
<circle cx="646.9" cy="656.4" r="2.9" fill="#c01860" stroke="#ff10ff" stroke-width="1.7"/>
<circle cx="613.3" cy="689.1" r="2.9" fill="#c01860" stroke="#ff10ff" stroke-width="1.7"/>
<circle cx="402.7" cy="367.2" r="2.9" fill="#c01860" stroke="#ff10ff" stroke-width="1.7"/>
<circle cx="441.9" cy="335.8" r="2.9" fill="#c01860" stroke="#ff10ff" stroke-width="1.7"/>
<circle cx="476.9" cy="370.9" r="2.9" fill="#c01860" stroke="#ff10ff" stroke-width="1.7"/>
<circle cx="437.8" cy="403.4" r="2.9" fill="#c01860" stroke="#ff10ff" stroke-width="1.7"/>
<circle cx="448.2" cy="414.3" r="2.9" fill="#c01860" stroke="#ff10ff" stroke-width="1.7"/>
<circle cx="487.2" cy="381.6" r="2.9" fill="#c01860" stroke="#ff10ff" stroke-width="1.7"/>
<circle cx="521.4" cy="417.4" r="2.9" fill="#c01860" stroke="#ff10ff" stroke-width="1.7"/>
<circle cx="482.8" cy="450.9" r="2.9" fill="#c01860" stroke="#ff10ff" stroke-width="1.7"/>
<circle cx="493.1" cy="461.9" r="2.9" fill="#c01860" stroke="#ff10ff" stroke-width="1.7"/>
<circle cx="531.6" cy="428.3" r="2.9" fill="#c01860" stroke="#ff10ff" stroke-width="1.7"/>
<circle cx="565.0" cy="464.8" r="2.9" fill="#c01860" stroke="#ff10ff" stroke-width="1.7"/>
<circle cx="527.3" cy="498.9" r="2.9" fill="#c01860" stroke="#ff10ff" stroke-width="1.7"/>
<circle cx="537.4" cy="510.1" r="2.9" fill="#c01860" stroke="#ff10ff" stroke-width="1.7"/>
<circle cx="574.9" cy="475.9" r="2.9" fill="#c01860" stroke="#ff10ff" stroke-width="1.7"/>
<circle cx="607.4" cy="513.1" r="2.9" fill="#c01860" stroke="#ff10ff" stroke-width="1.7"/>
<circle cx="571.1" cy="547.6" r="2.9" fill="#c01860" stroke="#ff10ff" stroke-width="1.7"/>
<circle cx="581.1" cy="558.9" r="2.9" fill="#c01860" stroke="#ff10ff" stroke-width="1.7"/>
<circle cx="617.1" cy="524.4" r="2.9" fill="#c01860" stroke="#ff10ff" stroke-width="1.7"/>
<circle cx="648.9" cy="562.4" r="2.9" fill="#c01860" stroke="#ff10ff" stroke-width="1.7"/>
<circle cx="614.2" cy="596.7" r="2.9" fill="#c01860" stroke="#ff10ff" stroke-width="1.7"/>
<circle cx="624.1" cy="608.2" r="2.9" fill="#c01860" stroke="#ff10ff" stroke-width="1.7"/>
<circle cx="658.3" cy="573.9" r="2.9" fill="#c01860" stroke="#ff10ff" stroke-width="1.7"/>
<circle cx="689.2" cy="612.6" r="2.9" fill="#c01860" stroke="#ff10ff" stroke-width="1.7"/>
<circle cx="656.8" cy="646.5" r="2.9" fill="#c01860" stroke="#ff10ff" stroke-width="1.7"/>
<circle cx="453.8" cy="326.6" r="2.9" fill="#c01860" stroke="#ff10ff" stroke-width="1.7"/>
<circle cx="494.1" cy="296.4" r="2.9" fill="#c01860" stroke="#ff10ff" stroke-width="1.7"/>
<circle cx="528.7" cy="329.8" r="2.9" fill="#c01860" stroke="#ff10ff" stroke-width="1.7"/>
<circle cx="488.7" cy="361.3" r="2.9" fill="#c01860" stroke="#ff10ff" stroke-width="1.7"/>
<circle cx="499.1" cy="371.9" r="2.9" fill="#c01860" stroke="#ff10ff" stroke-width="1.7"/>
<circle cx="538.8" cy="339.9" r="2.9" fill="#c01860" stroke="#ff10ff" stroke-width="1.7"/>
<circle cx="572.2" cy="374.4" r="2.9" fill="#c01860" stroke="#ff10ff" stroke-width="1.7"/>
<circle cx="533.1" cy="407.4" r="2.9" fill="#c01860" stroke="#ff10ff" stroke-width="1.7"/>
<circle cx="543.2" cy="418.2" r="2.9" fill="#c01860" stroke="#ff10ff" stroke-width="1.7"/>
<circle cx="582.0" cy="384.9" r="2.9" fill="#c01860" stroke="#ff10ff" stroke-width="1.7"/>
<circle cx="614.1" cy="420.5" r="2.9" fill="#c01860" stroke="#ff10ff" stroke-width="1.7"/>
<circle cx="576.3" cy="454.6" r="2.9" fill="#c01860" stroke="#ff10ff" stroke-width="1.7"/>
<circle cx="586.1" cy="465.6" r="2.9" fill="#c01860" stroke="#ff10ff" stroke-width="1.7"/>
<circle cx="623.5" cy="431.3" r="2.9" fill="#c01860" stroke="#ff10ff" stroke-width="1.7"/>
<circle cx="654.3" cy="468.0" r="2.9" fill="#c01860" stroke="#ff10ff" stroke-width="1.7"/>
<circle cx="618.3" cy="502.8" r="2.9" fill="#c01860" stroke="#ff10ff" stroke-width="1.7"/>
<circle cx="627.8" cy="514.0" r="2.9" fill="#c01860" stroke="#ff10ff" stroke-width="1.7"/>
<circle cx="663.4" cy="479.1" r="2.9" fill="#c01860" stroke="#ff10ff" stroke-width="1.7"/>
<circle cx="693.0" cy="516.9" r="2.9" fill="#c01860" stroke="#ff10ff" stroke-width="1.7"/>
<circle cx="659.1" cy="552.0" r="2.9" fill="#c01860" stroke="#ff10ff" stroke-width="1.7"/>
<circle cx="668.4" cy="563.5" r="2.9" fill="#c01860" stroke="#ff10ff" stroke-width="1.7"/>
<circle cx="701.7" cy="528.4" r="2.9" fill="#c01860" stroke="#ff10ff" stroke-width="1.7"/>
<circle cx="730.0" cy="567.3" r="2.9" fill="#c01860" stroke="#ff10ff" stroke-width="1.7"/>
<circle cx="698.8" cy="602.3" r="2.9" fill="#c01860" stroke="#ff10ff" stroke-width="1.7"/></g><text transform="translate(2.0,64) scale(1,1.1)" x="0" y="0" font-family="Liberation Mono, monospace" font-size="27.3" fill="#c80000" stroke="#c80000" stroke-width="0.35">Detected 144 corners (0 rejected)</text></g>
<g transform="translate(1055,0)"><g clip-path="url(#clip2)"><g transform="translate(-6,-10)"><use href="#scene1"/></g><polygon points="175.3,533.5 197.9,510.1 220.9,487.0 244.3,464.4 268.1,442.1 292.2,420.3 316.7,398.8 341.6,377.8 366.9,357.1 392.6,336.9 418.6,317.0 445.0,297.6 471.8,278.5 471.8,278.5 494.8,299.9 517.4,321.7 539.6,343.8 561.3,366.3 582.7,389.1 603.6,412.3 624.1,435.8 644.2,459.8 663.9,484.0 683.1,508.7 702.0,533.7 720.4,559.0 720.4,559.0 700.2,583.5 679.6,607.6 658.6,631.3 637.2,654.7 615.5,677.6 593.4,700.1 570.9,722.2 548.0,743.9 524.7,765.2 501.1,786.2 477.1,806.7 452.7,826.8 452.7,826.8 427.3,804.3 402.3,781.5 377.7,758.3 353.6,734.8 329.8,710.9 306.5,686.6 283.6,662.0 261.1,637.0 239.0,611.7 217.4,586.0 196.1,559.9 175.3,533.5" fill="#686868"/>
<polygon points="189.1,537.5 198.4,526.5 207.2,538.0 197.7,548.9" fill="#141414"/>
<polygon points="227.1,586.4 237.1,575.6 246.2,586.7 236.1,597.5" fill="#141414"/>
<polygon points="266.8,633.8 277.3,623.2 286.8,634.0 276.2,644.5" fill="#141414"/>
<polygon points="308.1,679.5 319.1,669.3 328.9,679.8 317.9,689.8" fill="#141414"/>
<polygon points="351.2,723.7 362.4,714.0 372.7,724.1 361.4,733.6" fill="#141414"/>
<polygon points="396.0,766.2 407.4,757.1 418.0,766.9 406.6,775.8" fill="#141414"/>
<polygon points="442.5,807.1 453.9,798.8 464.9,808.2 453.5,816.4" fill="#141414"/>
<polygon points="230.1,490.7 239.8,480.1 249.2,491.6 239.4,502.2" fill="#141414"/>
<polygon points="270.7,540.0 281.0,529.5 290.6,540.7 280.3,551.2" fill="#141414"/>
<polygon points="312.5,588.3 323.2,577.8 333.1,588.9 322.3,599.2" fill="#141414"/>
<polygon points="355.5,635.4 366.4,625.2 376.5,636.0 365.6,646.1" fill="#141414"/>
<polygon points="399.6,681.5 410.7,671.7 421.0,682.3 409.9,692.0" fill="#141414"/>
<polygon points="444.9,726.5 456.0,717.2 466.6,727.5 455.5,736.7" fill="#141414"/>
<polygon points="491.3,770.4 502.3,761.7 513.2,771.8 502.2,780.3" fill="#141414"/>
<polygon points="272.7,445.6 282.7,435.4 292.7,446.8 282.5,457.0" fill="#141414"/>
<polygon points="315.5,494.7 325.9,484.5 336.0,495.7 325.4,506.0" fill="#141414"/>
<polygon points="358.9,543.3 369.6,533.1 379.8,544.2 369.0,554.5" fill="#141414"/>
<polygon points="402.9,591.4 413.8,581.2 424.1,592.3 413.1,602.4" fill="#141414"/>
<polygon points="447.5,638.8 458.5,628.9 468.9,639.9 457.9,649.7" fill="#141414"/>
<polygon points="492.7,685.7 503.6,676.2 514.1,687.0 503.2,696.4" fill="#141414"/>
<polygon points="538.6,732.0 549.3,722.9 559.9,733.7 549.2,742.6" fill="#141414"/>
<polygon points="316.9,402.2 327.3,392.4 337.6,403.5 327.1,413.3" fill="#141414"/>
<polygon points="361.3,450.6 372.0,440.6 382.3,451.7 371.6,461.8" fill="#141414"/>
<polygon points="405.8,499.0 416.7,488.9 427.0,500.1 416.1,510.2" fill="#141414"/>
<polygon points="450.3,547.4 461.3,537.3 471.6,548.4 460.6,558.5" fill="#141414"/>
<polygon points="494.9,595.7 505.8,585.7 516.1,596.8 505.2,606.8" fill="#141414"/>
<polygon points="539.6,643.9 550.3,634.1 560.5,645.3 549.9,655.0" fill="#141414"/>
<polygon points="584.3,692.1 594.7,682.7 604.9,693.9 594.7,703.2" fill="#141414"/>
<polygon points="362.7,360.4 373.5,351.0 384.1,361.8 373.2,371.3" fill="#141414"/>
<polygon points="408.2,407.7 419.2,397.9 429.7,408.8 418.7,418.6" fill="#141414"/>
<polygon points="453.3,455.3 464.3,445.3 474.6,456.4 463.6,466.4" fill="#141414"/>
<polygon points="497.8,503.5 508.8,493.4 519.0,504.5 508.1,514.6" fill="#141414"/>
<polygon points="541.9,552.1 552.7,541.9 562.8,553.2 552.0,563.3" fill="#141414"/>
<polygon points="585.5,601.1 596.0,591.1 605.9,602.5 595.5,612.5" fill="#141414"/>
<polygon points="628.7,650.6 638.7,640.8 648.4,652.4 638.5,662.1" fill="#141414"/>
<polygon points="410.1,320.4 421.2,311.4 432.0,321.7 420.8,330.8" fill="#141414"/>
<polygon points="456.2,365.8 467.5,356.4 478.0,366.9 466.7,376.5" fill="#141414"/>
<polygon points="501.3,412.3 512.5,402.4 522.7,413.2 511.6,423.1" fill="#141414"/>
<polygon points="545.4,459.6 556.4,449.5 566.4,460.5 555.4,470.7" fill="#141414"/>
<polygon points="588.5,508.0 599.1,497.7 608.8,509.0 598.3,519.3" fill="#141414"/>
<polygon points="630.5,557.3 640.7,547.0 650.1,558.5 640.0,568.8" fill="#141414"/>
<polygon points="671.5,607.5 681.1,597.4 690.3,609.2 680.8,619.3" fill="#141414"/>
<polygon points="459.1,282.1 470.6,273.5 481.4,283.1 469.9,291.9" fill="#141414"/>
<polygon points="505.3,325.2 516.8,316.0 527.2,326.0 515.8,335.3" fill="#141414"/>
<polygon points="550.0,369.8 561.3,360.1 571.3,370.5 560.1,380.3" fill="#141414"/>
<polygon points="593.0,415.8 604.1,405.7 613.7,416.5 602.8,426.7" fill="#141414"/>
<polygon points="634.5,463.4 645.1,453.0 654.3,464.2 643.9,474.6" fill="#141414"/>
<polygon points="674.5,512.4 684.5,501.9 693.3,513.4 683.4,523.9" fill="#141414"/>
<polygon points="712.8,562.9 722.1,552.4 730.6,564.3 721.4,574.8" fill="#141414"/>
<polygon points="207.2,538.0 239.4,502.2 270.7,540.0 237.1,575.6" fill="#141414"/>
<polygon points="218.9,533.7 222.9,529.2 226.7,534.0 222.6,538.5" fill="#5a5a5a"/>
<polygon points="234.0,552.6 238.1,548.1 241.9,552.8 237.8,557.3" fill="#5a5a5a"/>
<polygon points="237.8,557.3 241.9,552.8 245.8,557.5 241.6,562.0" fill="#5a5a5a"/>
<polygon points="222.9,529.2 227.0,524.7 230.8,529.5 226.7,534.0" fill="#5a5a5a"/>
<polygon points="234.3,543.4 238.4,538.9 242.2,543.7 238.1,548.1" fill="#5a5a5a"/>
<polygon points="234.6,534.2 238.7,529.8 242.5,534.5 238.4,538.9" fill="#5a5a5a"/>
<polygon points="238.4,538.9 242.5,534.5 246.4,539.2 242.2,543.7" fill="#5a5a5a"/>
<polygon points="246.1,548.4 250.2,543.9 254.1,548.6 249.9,553.0" fill="#5a5a5a"/>
<polygon points="231.0,520.3 235.1,515.8 238.9,520.6 234.8,525.0" fill="#5a5a5a"/>
<polygon points="234.8,525.0 238.9,520.6 242.8,525.3 238.7,529.8" fill="#5a5a5a"/>
<polygon points="238.7,529.8 242.8,525.3 246.7,530.0 242.5,534.5" fill="#5a5a5a"/>
<polygon points="254.4,539.5 258.6,535.0 262.5,539.7 258.3,544.2" fill="#5a5a5a"/>
<polygon points="246.2,586.7 280.3,551.2 312.5,588.3 277.3,623.2" fill="#141414"/>
<polygon points="269.8,605.2 274.2,600.8 278.1,605.4 273.8,609.8" fill="#5a5a5a"/>
<polygon points="273.8,609.8 278.1,605.4 282.1,609.9 277.7,614.3" fill="#5a5a5a"/>
<polygon points="258.5,582.4 262.8,578.0 266.7,582.6 262.4,587.0" fill="#5a5a5a"/>
<polygon points="262.4,587.0 266.7,582.6 270.6,587.2 266.3,591.6" fill="#5a5a5a"/>
<polygon points="270.6,587.2 275.0,582.8 278.9,587.4 274.6,591.8" fill="#5a5a5a"/>
<polygon points="274.6,591.8 278.9,587.4 282.9,592.0 278.5,596.4" fill="#5a5a5a"/>
<polygon points="275.0,582.8 279.3,578.4 283.2,583.0 278.9,587.4" fill="#5a5a5a"/>
<polygon points="286.9,596.6 291.2,592.2 295.2,596.8 290.8,601.1" fill="#5a5a5a"/>
<polygon points="271.4,569.1 275.7,564.7 279.6,569.3 275.3,573.8" fill="#5a5a5a"/>
<polygon points="287.2,587.6 291.6,583.2 295.6,587.8 291.2,592.2" fill="#5a5a5a"/>
<polygon points="291.2,592.2 295.6,587.8 299.6,592.4 295.2,596.8" fill="#5a5a5a"/>
<polygon points="275.7,564.7 280.0,560.3 283.9,564.9 279.6,569.3" fill="#5a5a5a"/>
<polygon points="279.6,569.3 283.9,564.9 287.9,569.6 283.6,574.0" fill="#5a5a5a"/>
<polygon points="287.6,578.6 292.0,574.2 296.0,578.8 291.6,583.2" fill="#5a5a5a"/>
<polygon points="286.8,634.0 322.3,599.2 355.5,635.4 319.1,669.3" fill="#141414"/>
<polygon points="295.2,634.1 299.7,629.8 303.7,634.2 299.2,638.6" fill="#5a5a5a"/>
<polygon points="303.2,643.0 307.7,638.7 311.8,643.2 307.3,647.5" fill="#5a5a5a"/>
<polygon points="311.4,651.9 315.9,647.6 319.9,652.0 315.4,656.3" fill="#5a5a5a"/>
<polygon points="299.7,629.8 304.1,625.4 308.2,629.9 303.7,634.2" fill="#5a5a5a"/>
<polygon points="303.7,634.2 308.2,629.9 312.2,634.4 307.7,638.7" fill="#5a5a5a"/>
<polygon points="315.9,647.6 320.4,643.3 324.5,647.8 319.9,652.0" fill="#5a5a5a"/>
<polygon points="304.1,625.4 308.6,621.1 312.6,625.6 308.2,629.9" fill="#5a5a5a"/>
<polygon points="320.4,643.3 324.9,639.0 329.0,643.5 324.5,647.8" fill="#5a5a5a"/>
<polygon points="308.6,621.1 313.0,616.8 317.1,621.3 312.6,625.6" fill="#5a5a5a"/>
<polygon points="312.6,625.6 317.1,621.3 321.2,625.8 316.7,630.1" fill="#5a5a5a"/>
<polygon points="320.8,634.6 325.3,630.3 329.4,634.7 324.9,639.0" fill="#5a5a5a"/>
<polygon points="324.9,639.0 329.4,634.7 333.5,639.2 329.0,643.5" fill="#5a5a5a"/>
<polygon points="329.0,643.5 333.5,639.2 337.7,643.7 333.1,647.9" fill="#5a5a5a"/>
<polygon points="313.0,616.8 317.5,612.4 321.6,617.0 317.1,621.3" fill="#5a5a5a"/>
<polygon points="321.2,625.8 325.7,621.5 329.8,626.0 325.3,630.3" fill="#5a5a5a"/>
<polygon points="333.9,630.5 338.4,626.2 342.6,630.7 338.1,635.0" fill="#5a5a5a"/>
<polygon points="338.1,635.0 342.6,630.7 346.8,635.2 342.2,639.4" fill="#5a5a5a"/>
<polygon points="328.9,679.8 365.6,646.1 399.6,681.5 362.4,714.0" fill="#141414"/>
<polygon points="346.0,688.5 350.6,684.4 354.8,688.7 350.2,692.8" fill="#5a5a5a"/>
<polygon points="350.2,692.8 354.8,688.7 359.0,693.0 354.4,697.1" fill="#5a5a5a"/>
<polygon points="342.2,675.7 346.8,671.5 351.0,675.9 346.4,680.1" fill="#5a5a5a"/>
<polygon points="363.2,697.3 367.9,693.2 372.1,697.5 367.5,701.6" fill="#5a5a5a"/>
<polygon points="346.8,671.5 351.4,667.3 355.6,671.7 351.0,675.9" fill="#5a5a5a"/>
<polygon points="355.2,680.2 359.8,676.1 364.0,680.4 359.4,684.6" fill="#5a5a5a"/>
<polygon points="363.6,688.9 368.3,684.8 372.5,689.1 367.9,693.2" fill="#5a5a5a"/>
<polygon points="355.6,671.7 360.2,667.6 364.4,671.9 359.8,676.1" fill="#5a5a5a"/>
<polygon points="359.8,676.1 364.4,671.9 368.7,676.3 364.0,680.4" fill="#5a5a5a"/>
<polygon points="368.3,684.8 372.9,680.7 377.1,685.0 372.5,689.1" fill="#5a5a5a"/>
<polygon points="372.5,689.1 377.1,685.0 381.4,689.4 376.8,693.4" fill="#5a5a5a"/>
<polygon points="368.7,676.3 373.3,672.2 377.5,676.6 372.9,680.7" fill="#5a5a5a"/>
<polygon points="377.1,685.0 381.8,680.9 386.0,685.3 381.4,689.4" fill="#5a5a5a"/>
<polygon points="360.6,659.0 365.2,654.8 369.4,659.2 364.8,663.4" fill="#5a5a5a"/>
<polygon points="364.8,663.4 369.4,659.2 373.6,663.6 369.0,667.8" fill="#5a5a5a"/>
<polygon points="373.3,672.2 377.9,668.0 382.1,672.4 377.5,676.6" fill="#5a5a5a"/>
<polygon points="377.5,676.6 382.1,672.4 386.4,676.8 381.8,680.9" fill="#5a5a5a"/>
<polygon points="372.7,724.1 409.9,692.0 444.9,726.5 407.4,757.1" fill="#141414"/>
<polygon points="385.9,728.5 390.6,724.5 395.0,728.7 390.3,732.6" fill="#5a5a5a"/>
<polygon points="395.0,728.7 399.6,724.8 404.0,729.0 399.3,732.9" fill="#5a5a5a"/>
<polygon points="399.3,732.9 404.0,729.0 408.3,733.2 403.6,737.1" fill="#5a5a5a"/>
<polygon points="403.6,737.1 408.3,733.2 412.7,737.4 408.0,741.2" fill="#5a5a5a"/>
<polygon points="399.6,724.8 404.3,720.8 408.7,725.1 404.0,729.0" fill="#5a5a5a"/>
<polygon points="395.6,712.3 400.3,708.3 404.6,712.6 400.0,716.6" fill="#5a5a5a"/>
<polygon points="404.3,720.8 409.0,716.9 413.3,721.1 408.7,725.1" fill="#5a5a5a"/>
<polygon points="418.0,766.9 455.5,736.7 491.3,770.4 453.9,798.8" fill="#141414"/>
<polygon points="445.0,783.3 449.8,779.7 454.3,783.8 449.6,787.3" fill="#5a5a5a"/>
<polygon points="445.5,768.0 450.2,764.3 454.6,768.4 450.0,772.0" fill="#5a5a5a"/>
<polygon points="454.5,776.1 459.1,772.5 463.6,776.6 459.0,780.2" fill="#5a5a5a"/>
<polygon points="445.7,760.1 450.4,756.4 454.8,760.6 450.2,764.3" fill="#5a5a5a"/>
<polygon points="445.9,752.3 450.6,748.5 455.0,752.7 450.4,756.4" fill="#5a5a5a"/>
<polygon points="450.4,756.4 455.0,752.7 459.5,756.9 454.8,760.6" fill="#5a5a5a"/>
<polygon points="454.8,760.6 459.5,756.9 464.0,761.0 459.3,764.7" fill="#5a5a5a"/>
<polygon points="463.8,768.8 468.5,765.2 473.0,769.3 468.3,772.9" fill="#5a5a5a"/>
<polygon points="468.3,772.9 473.0,769.3 477.5,773.4 472.8,777.0" fill="#5a5a5a"/>
<polygon points="468.5,765.2 473.1,761.5 477.6,765.7 473.0,769.3" fill="#5a5a5a"/>
<polygon points="249.2,491.6 282.5,457.0 315.5,494.7 281.0,529.5" fill="#141414"/>
<polygon points="257.3,492.0 261.4,487.6 265.4,492.4 261.2,496.7" fill="#5a5a5a"/>
<polygon points="265.4,492.4 269.6,488.0 273.6,492.8 269.4,497.1" fill="#5a5a5a"/>
<polygon points="269.4,497.1 273.6,492.8 277.6,497.5 273.4,501.8" fill="#5a5a5a"/>
<polygon points="273.6,492.8 277.8,488.4 281.9,493.1 277.6,497.5" fill="#5a5a5a"/>
<polygon points="277.6,497.5 281.9,493.1 285.9,497.9 281.7,502.2" fill="#5a5a5a"/>
<polygon points="285.7,506.9 290.0,502.6 294.1,507.3 289.8,511.7" fill="#5a5a5a"/>
<polygon points="269.8,478.9 273.9,474.6 278.0,479.3 273.8,483.7" fill="#5a5a5a"/>
<polygon points="285.9,497.9 290.2,493.5 294.3,498.3 290.0,502.6" fill="#5a5a5a"/>
<polygon points="282.1,484.1 286.3,479.8 290.4,484.5 286.1,488.8" fill="#5a5a5a"/>
<polygon points="286.1,488.8 290.4,484.5 294.5,489.2 290.2,493.5" fill="#5a5a5a"/>
<polygon points="294.3,498.3 298.6,493.9 302.7,498.7 298.4,503.0" fill="#5a5a5a"/>
<polygon points="286.3,479.8 290.6,475.5 294.7,480.2 290.4,484.5" fill="#5a5a5a"/>
<polygon points="294.5,489.2 298.8,484.9 302.9,489.6 298.6,493.9" fill="#5a5a5a"/>
<polygon points="298.6,493.9 302.9,489.6 307.0,494.3 302.7,498.7" fill="#5a5a5a"/>
<polygon points="290.6,540.7 325.4,506.0 358.9,543.3 323.2,577.8" fill="#141414"/>
<polygon points="303.0,545.7 307.4,541.3 311.5,546.0 307.1,550.3" fill="#5a5a5a"/>
<polygon points="311.2,555.0 315.6,550.6 319.7,555.3 315.3,559.6" fill="#5a5a5a"/>
<polygon points="315.3,559.6 319.7,555.3 323.8,559.9 319.4,564.3" fill="#5a5a5a"/>
<polygon points="319.4,564.3 323.8,559.9 327.9,564.6 323.5,568.9" fill="#5a5a5a"/>
<polygon points="311.8,537.0 316.2,532.6 320.3,537.3 315.9,541.6" fill="#5a5a5a"/>
<polygon points="320.0,546.3 324.4,542.0 328.5,546.6 324.1,551.0" fill="#5a5a5a"/>
<polygon points="324.1,551.0 328.5,546.6 332.7,551.3 328.2,555.6" fill="#5a5a5a"/>
<polygon points="316.2,532.6 320.5,528.3 324.7,533.0 320.3,537.3" fill="#5a5a5a"/>
<polygon points="320.3,537.3 324.7,533.0 328.8,537.6 324.4,542.0" fill="#5a5a5a"/>
<polygon points="337.1,547.0 341.6,542.6 345.7,547.3 341.3,551.6" fill="#5a5a5a"/>
<polygon points="329.1,528.7 333.5,524.4 337.7,529.0 333.2,533.3" fill="#5a5a5a"/>
<polygon points="333.1,588.9 369.0,554.5 402.9,591.4 366.4,625.2" fill="#141414"/>
<polygon points="350.3,589.4 354.8,585.1 359.0,589.7 354.5,594.0" fill="#5a5a5a"/>
<polygon points="350.7,580.5 355.2,576.2 359.3,580.8 354.8,585.1" fill="#5a5a5a"/>
<polygon points="355.2,576.2 359.7,571.9 363.9,576.6 359.3,580.8" fill="#5a5a5a"/>
<polygon points="372.0,594.6 376.5,590.3 380.7,594.9 376.2,599.2" fill="#5a5a5a"/>
<polygon points="372.3,585.8 376.8,581.5 381.0,586.1 376.5,590.3" fill="#5a5a5a"/>
<polygon points="380.7,594.9 385.3,590.7 389.5,595.3 385.0,599.5" fill="#5a5a5a"/>
<polygon points="368.4,572.3 372.9,568.0 377.1,572.6 372.6,576.9" fill="#5a5a5a"/>
<polygon points="381.0,586.1 385.6,581.8 389.8,586.4 385.3,590.7" fill="#5a5a5a"/>
<polygon points="385.3,590.7 389.8,586.4 394.1,591.0 389.5,595.3" fill="#5a5a5a"/>
<polygon points="376.5,636.0 413.1,602.4 447.5,638.8 410.7,671.7" fill="#141414"/>
<polygon points="394.2,636.6 398.8,632.5 403.0,637.0 398.5,641.1" fill="#5a5a5a"/>
<polygon points="398.5,641.1 403.0,637.0 407.3,641.5 402.7,645.6" fill="#5a5a5a"/>
<polygon points="407.0,650.1 411.6,646.0 415.9,650.4 411.3,654.6" fill="#5a5a5a"/>
<polygon points="411.6,646.0 416.2,641.8 420.5,646.3 415.9,650.4" fill="#5a5a5a"/>
<polygon points="407.6,632.8 412.2,628.6 416.5,633.1 411.9,637.3" fill="#5a5a5a"/>
<polygon points="407.9,624.1 412.5,619.9 416.8,624.4 412.2,628.6" fill="#5a5a5a"/>
<polygon points="425.1,642.2 429.7,638.0 434.0,642.6 429.4,646.7" fill="#5a5a5a"/>
<polygon points="421.0,682.3 457.9,649.7 492.7,685.7 456.0,717.2" fill="#141414"/>
<polygon points="434.3,687.0 439.0,683.0 443.3,687.4 438.7,691.4" fill="#5a5a5a"/>
<polygon points="434.6,678.6 439.2,674.5 443.6,679.0 439.0,683.0" fill="#5a5a5a"/>
<polygon points="443.3,687.4 447.9,683.4 452.3,687.8 447.7,691.8" fill="#5a5a5a"/>
<polygon points="443.6,679.0 448.2,674.9 452.5,679.4 447.9,683.4" fill="#5a5a5a"/>
<polygon points="447.9,683.4 452.5,679.4 456.9,683.8 452.3,687.8" fill="#5a5a5a"/>
<polygon points="461.0,696.6 465.6,692.7 470.0,697.1 465.4,701.0" fill="#5a5a5a"/>
<polygon points="448.2,674.9 452.8,670.9 457.1,675.4 452.5,679.4" fill="#5a5a5a"/>
<polygon points="452.5,679.4 457.1,675.4 461.5,679.8 456.9,683.8" fill="#5a5a5a"/>
<polygon points="456.9,683.8 461.5,679.8 465.9,684.3 461.3,688.3" fill="#5a5a5a"/>
<polygon points="465.6,692.7 470.2,688.7 474.6,693.1 470.0,697.1" fill="#5a5a5a"/>
<polygon points="457.1,675.4 461.7,671.3 466.1,675.8 461.5,679.8" fill="#5a5a5a"/>
<polygon points="465.9,684.3 470.5,680.3 474.8,684.7 470.2,688.7" fill="#5a5a5a"/>
<polygon points="453.0,662.4 457.6,658.3 462.0,662.8 457.4,666.8" fill="#5a5a5a"/>
<polygon points="457.4,666.8 462.0,662.8 466.3,667.3 461.7,671.3" fill="#5a5a5a"/>
<polygon points="466.6,727.5 503.2,696.4 538.6,732.0 502.3,761.7" fill="#141414"/>
<polygon points="480.1,732.3 484.7,728.5 489.1,732.8 484.5,736.6" fill="#5a5a5a"/>
<polygon points="484.5,736.6 489.1,732.8 493.6,737.1 489.0,740.9" fill="#5a5a5a"/>
<polygon points="493.6,737.1 498.1,733.4 502.6,737.7 498.0,741.4" fill="#5a5a5a"/>
<polygon points="489.3,724.7 493.8,720.8 498.3,725.2 493.7,729.0" fill="#5a5a5a"/>
<polygon points="493.7,729.0 498.3,725.2 502.7,729.6 498.1,733.4" fill="#5a5a5a"/>
<polygon points="502.6,737.7 507.2,733.9 511.6,738.3 507.1,742.0" fill="#5a5a5a"/>
<polygon points="493.8,720.8 498.4,717.0 502.8,721.4 498.3,725.2" fill="#5a5a5a"/>
<polygon points="498.3,725.2 502.8,721.4 507.3,725.8 502.7,729.6" fill="#5a5a5a"/>
<polygon points="507.2,733.9 511.7,730.1 516.2,734.5 511.6,738.3" fill="#5a5a5a"/>
<polygon points="511.6,738.3 516.2,734.5 520.6,738.9 516.1,742.6" fill="#5a5a5a"/>
<polygon points="507.3,725.8 511.8,721.9 516.2,726.3 511.7,730.1" fill="#5a5a5a"/>
<polygon points="498.5,708.7 503.1,704.8 507.5,709.3 503.0,713.1" fill="#5a5a5a"/>
<polygon points="503.0,713.1 507.5,709.3 511.9,713.7 507.4,717.5" fill="#5a5a5a"/>
<polygon points="520.7,730.7 525.2,727.0 529.6,731.4 525.1,735.1" fill="#5a5a5a"/>
<polygon points="292.7,446.8 327.1,413.3 361.3,450.6 325.9,484.5" fill="#141414"/>
<polygon points="317.8,466.1 322.1,461.9 326.3,466.6 322.0,470.8" fill="#5a5a5a"/>
<polygon points="322.0,470.8 326.3,466.6 330.5,471.2 326.1,475.5" fill="#5a5a5a"/>
<polygon points="305.4,443.0 309.7,438.8 313.9,443.5 309.6,447.7" fill="#5a5a5a"/>
<polygon points="309.6,447.7 313.9,443.5 318.1,448.2 313.7,452.5" fill="#5a5a5a"/>
<polygon points="326.3,466.6 330.7,462.3 334.9,467.0 330.5,471.2" fill="#5a5a5a"/>
<polygon points="309.7,438.8 314.0,434.6 318.2,439.3 313.9,443.5" fill="#5a5a5a"/>
<polygon points="313.9,443.5 318.2,439.3 322.4,444.0 318.1,448.2" fill="#5a5a5a"/>
<polygon points="330.7,462.3 335.1,458.1 339.3,462.8 334.9,467.0" fill="#5a5a5a"/>
<polygon points="314.0,434.6 318.3,430.5 322.6,435.1 318.2,439.3" fill="#5a5a5a"/>
<polygon points="330.9,453.4 335.2,449.2 339.5,453.9 335.1,458.1" fill="#5a5a5a"/>
<polygon points="331.0,444.5 335.4,440.3 339.6,445.0 335.2,449.2" fill="#5a5a5a"/>
<polygon points="322.7,426.3 327.0,422.1 331.3,426.8 326.9,431.0" fill="#5a5a5a"/>
<polygon points="339.6,445.0 344.1,440.8 348.3,445.5 343.9,449.7" fill="#5a5a5a"/>
<polygon points="343.9,449.7 348.3,445.5 352.6,450.2 348.1,454.3" fill="#5a5a5a"/>
<polygon points="336.0,495.7 371.6,461.8 405.8,499.0 369.6,533.1" fill="#141414"/>
<polygon points="348.8,500.8 353.3,496.5 357.5,501.2 353.0,505.5" fill="#5a5a5a"/>
<polygon points="353.5,487.6 357.9,483.4 362.2,488.0 357.7,492.3" fill="#5a5a5a"/>
<polygon points="366.6,483.8 371.1,479.6 375.4,484.2 370.9,488.5" fill="#5a5a5a"/>
<polygon points="379.4,497.8 383.9,493.5 388.2,498.2 383.7,502.4" fill="#5a5a5a"/>
<polygon points="375.4,484.2 379.9,480.0 384.2,484.6 379.6,488.9" fill="#5a5a5a"/>
<polygon points="379.8,544.2 416.1,510.2 450.3,547.4 413.8,581.2" fill="#141414"/>
<polygon points="405.9,554.2 410.4,550.0 414.7,554.6 410.1,558.9" fill="#5a5a5a"/>
<polygon points="397.6,536.1 402.2,531.8 406.4,536.5 401.9,540.7" fill="#5a5a5a"/>
<polygon points="406.1,545.4 410.7,541.1 415.0,545.8 410.4,550.0" fill="#5a5a5a"/>
<polygon points="410.4,550.0 415.0,545.8 419.2,550.4 414.7,554.6" fill="#5a5a5a"/>
<polygon points="419.0,559.3 423.5,555.0 427.8,559.7 423.2,563.9" fill="#5a5a5a"/>
<polygon points="402.2,531.8 406.7,527.6 411.0,532.2 406.4,536.5" fill="#5a5a5a"/>
<polygon points="419.5,541.5 424.1,537.3 428.3,541.9 423.8,546.2" fill="#5a5a5a"/>
<polygon points="411.2,523.3 415.8,519.1 420.1,523.7 415.5,528.0" fill="#5a5a5a"/>
<polygon points="419.8,532.6 424.3,528.4 428.6,533.0 424.1,537.3" fill="#5a5a5a"/>
<polygon points="428.3,541.9 432.9,537.7 437.2,542.3 432.6,546.6" fill="#5a5a5a"/>
<polygon points="424.1,592.3 460.6,558.5 494.9,595.7 458.5,628.9" fill="#141414"/>
<polygon points="437.2,597.3 441.8,593.1 446.1,597.7 441.5,601.8" fill="#5a5a5a"/>
<polygon points="441.8,593.1 446.4,588.9 450.7,593.5 446.1,597.7" fill="#5a5a5a"/>
<polygon points="454.7,606.9 459.3,602.7 463.6,607.3 459.0,611.5" fill="#5a5a5a"/>
<polygon points="442.1,584.2 446.6,580.0 450.9,584.7 446.4,588.9" fill="#5a5a5a"/>
<polygon points="446.4,588.9 450.9,584.7 455.2,589.3 450.7,593.5" fill="#5a5a5a"/>
<polygon points="450.7,593.5 455.2,589.3 459.5,593.9 455.0,598.1" fill="#5a5a5a"/>
<polygon points="455.0,598.1 459.5,593.9 463.8,598.5 459.3,602.7" fill="#5a5a5a"/>
<polygon points="459.3,602.7 463.8,598.5 468.1,603.1 463.6,607.3" fill="#5a5a5a"/>
<polygon points="459.5,593.9 464.1,589.7 468.4,594.3 463.8,598.5" fill="#5a5a5a"/>
<polygon points="451.2,575.8 455.8,571.6 460.1,576.2 455.5,580.4" fill="#5a5a5a"/>
<polygon points="472.7,598.9 477.2,594.8 481.5,599.4 477.0,603.6" fill="#5a5a5a"/>
<polygon points="468.9,639.9 505.2,606.8 539.6,643.9 503.6,676.2" fill="#141414"/>
<polygon points="482.1,644.9 486.6,640.8 491.0,645.4 486.4,649.4" fill="#5a5a5a"/>
<polygon points="495.1,658.5 499.6,654.5 504.0,659.0 499.4,663.1" fill="#5a5a5a"/>
<polygon points="499.4,663.1 504.0,659.0 508.3,663.6 503.8,667.6" fill="#5a5a5a"/>
<polygon points="486.6,640.8 491.2,636.7 495.5,641.3 491.0,645.4" fill="#5a5a5a"/>
<polygon points="504.0,659.0 508.5,655.0 512.8,659.6 508.3,663.6" fill="#5a5a5a"/>
<polygon points="495.7,632.6 500.3,628.5 504.6,633.1 500.0,637.2" fill="#5a5a5a"/>
<polygon points="500.0,637.2 504.6,633.1 508.9,637.7 504.4,641.8" fill="#5a5a5a"/>
<polygon points="500.3,628.5 504.8,624.4 509.1,629.0 504.6,633.1" fill="#5a5a5a"/>
<polygon points="504.8,624.4 509.3,620.2 513.6,624.9 509.1,629.0" fill="#5a5a5a"/>
<polygon points="509.1,629.0 513.6,624.9 517.9,629.5 513.4,633.6" fill="#5a5a5a"/>
<polygon points="514.1,687.0 549.9,655.0 584.3,692.1 549.3,722.9" fill="#141414"/>
<polygon points="523.0,687.6 527.5,683.6 531.9,688.2 527.4,692.1" fill="#5a5a5a"/>
<polygon points="527.4,692.1 531.9,688.2 536.2,692.7 531.7,696.6" fill="#5a5a5a"/>
<polygon points="531.7,696.6 536.2,692.7 540.6,697.2 536.1,701.1" fill="#5a5a5a"/>
<polygon points="544.9,710.1 549.3,706.3 553.7,710.8 549.3,714.6" fill="#5a5a5a"/>
<polygon points="531.9,688.2 536.3,684.2 540.7,688.8 536.2,692.7" fill="#5a5a5a"/>
<polygon points="536.2,692.7 540.7,688.8 545.0,693.3 540.6,697.2" fill="#5a5a5a"/>
<polygon points="540.7,688.8 545.1,684.8 549.5,689.4 545.0,693.3" fill="#5a5a5a"/>
<polygon points="536.4,675.7 540.9,671.7 545.2,676.3 540.8,680.3" fill="#5a5a5a"/>
<polygon points="540.8,680.3 545.2,676.3 549.6,680.9 545.1,684.8" fill="#5a5a5a"/>
<polygon points="558.2,698.5 562.6,694.6 566.9,699.2 562.6,703.1" fill="#5a5a5a"/>
<polygon points="545.2,676.3 549.7,672.3 554.0,676.9 549.6,680.9" fill="#5a5a5a"/>
<polygon points="545.4,667.7 549.8,663.7 554.1,668.3 549.7,672.3" fill="#5a5a5a"/>
<polygon points="337.6,403.5 373.2,371.3 408.2,407.7 372.0,440.6" fill="#141414"/>
<polygon points="346.3,404.0 350.8,400.0 355.1,404.6 350.7,408.7" fill="#5a5a5a"/>
<polygon points="355.0,413.3 359.4,409.2 363.7,413.8 359.3,417.9" fill="#5a5a5a"/>
<polygon points="359.3,417.9 363.7,413.8 368.1,418.4 363.6,422.6" fill="#5a5a5a"/>
<polygon points="355.1,404.6 359.5,400.5 363.9,405.1 359.4,409.2" fill="#5a5a5a"/>
<polygon points="363.7,413.8 368.2,409.7 372.5,414.3 368.1,418.4" fill="#5a5a5a"/>
<polygon points="368.1,418.4 372.5,414.3 376.9,418.9 372.4,423.1" fill="#5a5a5a"/>
<polygon points="355.2,395.9 359.7,391.9 364.0,396.5 359.5,400.5" fill="#5a5a5a"/>
<polygon points="359.5,400.5 364.0,396.5 368.4,401.1 363.9,405.1" fill="#5a5a5a"/>
<polygon points="372.5,414.3 377.0,410.2 381.4,414.8 376.9,418.9" fill="#5a5a5a"/>
<polygon points="376.9,418.9 381.4,414.8 385.7,419.4 381.2,423.6" fill="#5a5a5a"/>
<polygon points="372.7,405.6 377.2,401.6 381.5,406.2 377.0,410.2" fill="#5a5a5a"/>
<polygon points="385.9,410.8 390.4,406.7 394.8,411.2 390.2,415.3" fill="#5a5a5a"/>
<polygon points="368.6,383.8 373.1,379.8 377.5,384.4 373.0,388.4" fill="#5a5a5a"/>
<polygon points="386.1,402.1 390.6,398.0 394.9,402.6 390.4,406.7" fill="#5a5a5a"/>
<polygon points="382.3,451.7 418.7,418.6 453.3,455.3 416.7,488.9" fill="#141414"/>
<polygon points="408.4,470.8 412.9,466.6 417.2,471.2 412.7,475.4" fill="#5a5a5a"/>
<polygon points="412.9,466.6 417.5,462.4 421.8,467.0 417.2,471.2" fill="#5a5a5a"/>
<polygon points="404.5,448.5 409.1,444.3 413.4,449.0 408.8,453.1" fill="#5a5a5a"/>
<polygon points="408.8,453.1 413.4,449.0 417.7,453.6 413.1,457.7" fill="#5a5a5a"/>
<polygon points="417.7,453.6 422.3,449.4 426.6,454.0 422.0,458.2" fill="#5a5a5a"/>
<polygon points="409.3,435.6 413.9,431.4 418.2,436.0 413.6,440.2" fill="#5a5a5a"/>
<polygon points="413.6,440.2 418.2,436.0 422.5,440.6 417.9,444.8" fill="#5a5a5a"/>
<polygon points="426.6,454.0 431.2,449.9 435.5,454.5 430.9,458.6" fill="#5a5a5a"/>
<polygon points="413.9,431.4 418.4,427.3 422.8,431.9 418.2,436.0" fill="#5a5a5a"/>
<polygon points="426.8,445.2 431.4,441.1 435.7,445.7 431.2,449.9" fill="#5a5a5a"/>
<polygon points="431.2,449.9 435.7,445.7 440.1,450.3 435.5,454.5" fill="#5a5a5a"/>
<polygon points="427.0,500.1 463.6,466.4 497.8,503.5 461.3,537.3" fill="#141414"/>
<polygon points="458.4,488.3 463.0,484.1 467.3,488.7 462.7,492.9" fill="#5a5a5a"/>
<polygon points="475.6,506.8 480.2,502.6 484.4,507.3 479.9,511.5" fill="#5a5a5a"/>
<polygon points="458.7,479.4 463.3,475.2 467.6,479.9 463.0,484.1" fill="#5a5a5a"/>
<polygon points="467.3,488.7 471.9,484.5 476.2,489.1 471.6,493.3" fill="#5a5a5a"/>
<polygon points="475.9,498.0 480.5,493.8 484.7,498.4 480.2,502.6" fill="#5a5a5a"/>
<polygon points="480.2,502.6 484.7,498.4 489.0,503.0 484.4,507.3" fill="#5a5a5a"/>
<polygon points="471.6,548.4 508.1,514.6 541.9,552.1 505.8,585.7" fill="#141414"/>
<polygon points="480.4,548.9 485.0,544.6 489.2,549.3 484.7,553.5" fill="#5a5a5a"/>
<polygon points="493.3,562.8 497.8,558.6 502.1,563.3 497.5,567.5" fill="#5a5a5a"/>
<polygon points="497.5,567.5 502.1,563.3 506.3,568.0 501.8,572.2" fill="#5a5a5a"/>
<polygon points="493.5,554.0 498.1,549.7 502.3,554.4 497.8,558.6" fill="#5a5a5a"/>
<polygon points="497.8,558.6 502.3,554.4 506.6,559.1 502.1,563.3" fill="#5a5a5a"/>
<polygon points="502.1,563.3 506.6,559.1 510.9,563.8 506.3,568.0" fill="#5a5a5a"/>
<polygon points="506.3,568.0 510.9,563.8 515.1,568.4 510.6,572.6" fill="#5a5a5a"/>
<polygon points="489.5,540.4 494.1,536.2 498.4,540.9 493.8,545.1" fill="#5a5a5a"/>
<polygon points="502.3,554.4 506.9,550.2 511.1,554.9 506.6,559.1" fill="#5a5a5a"/>
<polygon points="506.6,559.1 511.1,554.9 515.4,559.5 510.9,563.8" fill="#5a5a5a"/>
<polygon points="510.9,563.8 515.4,559.5 519.7,564.2 515.1,568.4" fill="#5a5a5a"/>
<polygon points="494.1,536.2 498.6,532.0 502.9,536.6 498.4,540.9" fill="#5a5a5a"/>
<polygon points="502.6,545.5 507.2,541.3 511.4,546.0 506.9,550.2" fill="#5a5a5a"/>
<polygon points="498.6,532.0 503.2,527.8 507.5,532.4 502.9,536.6" fill="#5a5a5a"/>
<polygon points="507.5,532.4 512.0,528.2 516.3,532.9 511.7,537.1" fill="#5a5a5a"/>
<polygon points="511.7,537.1 516.3,532.9 520.5,537.5 516.0,541.8" fill="#5a5a5a"/>
<polygon points="516.1,596.8 552.0,563.3 585.5,601.1 550.3,634.1" fill="#141414"/>
<polygon points="533.4,606.7 537.9,602.5 542.1,607.2 537.7,611.3" fill="#5a5a5a"/>
<polygon points="546.2,620.7 550.7,616.6 554.9,621.2 550.5,625.4" fill="#5a5a5a"/>
<polygon points="529.4,593.2 533.9,589.0 538.1,593.7 533.6,597.8" fill="#5a5a5a"/>
<polygon points="533.9,589.0 538.3,584.8 542.6,589.5 538.1,593.7" fill="#5a5a5a"/>
<polygon points="538.1,593.7 542.6,589.5 546.8,594.2 542.4,598.4" fill="#5a5a5a"/>
<polygon points="542.4,598.4 546.8,594.2 551.1,598.9 546.6,603.1" fill="#5a5a5a"/>
<polygon points="546.6,603.1 551.1,598.9 555.3,603.6 550.9,607.7" fill="#5a5a5a"/>
<polygon points="546.8,594.2 551.3,590.0 555.5,594.7 551.1,598.9" fill="#5a5a5a"/>
<polygon points="555.3,603.6 559.7,599.4 564.0,604.1 559.5,608.3" fill="#5a5a5a"/>
<polygon points="542.8,580.6 547.3,576.4 551.5,581.1 547.1,585.3" fill="#5a5a5a"/>
<polygon points="559.7,599.4 564.2,595.3 568.4,600.0 564.0,604.1" fill="#5a5a5a"/>
<polygon points="564.0,604.1 568.4,600.0 572.6,604.7 568.2,608.9" fill="#5a5a5a"/>
<polygon points="551.5,581.1 556.0,577.0 560.2,581.7 555.7,585.9" fill="#5a5a5a"/>
<polygon points="560.5,645.3 595.5,612.5 628.7,650.6 594.7,682.7" fill="#141414"/>
<polygon points="573.5,650.6 577.8,646.6 582.1,651.3 577.7,655.3" fill="#5a5a5a"/>
<polygon points="590.5,669.3 594.8,665.3 599.0,670.0 594.7,674.0" fill="#5a5a5a"/>
<polygon points="577.8,646.6 582.2,642.5 586.4,647.2 582.1,651.3" fill="#5a5a5a"/>
<polygon points="590.6,660.6 594.9,656.6 599.1,661.3 594.8,665.3" fill="#5a5a5a"/>
<polygon points="578.0,637.8 582.3,633.7 586.5,638.4 582.2,642.5" fill="#5a5a5a"/>
<polygon points="582.2,642.5 586.5,638.4 590.8,643.1 586.4,647.2" fill="#5a5a5a"/>
<polygon points="586.4,647.2 590.8,643.1 595.0,647.9 590.7,651.9" fill="#5a5a5a"/>
<polygon points="590.7,651.9 595.0,647.9 599.2,652.6 594.9,656.6" fill="#5a5a5a"/>
<polygon points="590.8,643.1 595.1,639.1 599.3,643.8 595.0,647.9" fill="#5a5a5a"/>
<polygon points="595.1,639.1 599.4,635.0 603.6,639.7 599.3,643.8" fill="#5a5a5a"/>
<polygon points="607.7,653.3 611.9,649.2 616.1,653.9 611.8,658.0" fill="#5a5a5a"/>
<polygon points="599.4,635.0 603.7,630.9 607.9,635.6 603.6,639.7" fill="#5a5a5a"/>
<polygon points="611.9,649.2 616.2,645.1 620.3,649.9 616.1,653.9" fill="#5a5a5a"/>
<polygon points="384.1,361.8 420.8,330.8 456.2,365.8 419.2,397.9" fill="#141414"/>
<polygon points="397.5,366.8 402.0,362.9 406.4,367.4 401.9,371.3" fill="#5a5a5a"/>
<polygon points="410.6,380.3 415.2,376.3 419.6,380.8 415.0,384.8" fill="#5a5a5a"/>
<polygon points="406.4,367.4 411.0,363.4 415.4,367.9 410.8,371.9" fill="#5a5a5a"/>
<polygon points="410.8,371.9 415.4,367.9 419.8,372.4 415.2,376.3" fill="#5a5a5a"/>
<polygon points="419.6,380.8 424.2,376.8 428.6,381.3 424.0,385.3" fill="#5a5a5a"/>
<polygon points="424.2,376.8 428.9,372.9 433.2,377.3 428.6,381.3" fill="#5a5a5a"/>
<polygon points="406.8,350.6 411.4,346.7 415.8,351.1 411.2,355.1" fill="#5a5a5a"/>
<polygon points="411.2,355.1 415.8,351.1 420.2,355.6 415.6,359.5" fill="#5a5a5a"/>
<polygon points="424.5,368.4 429.1,364.4 433.5,368.9 428.9,372.9" fill="#5a5a5a"/>
<polygon points="420.2,355.6 424.9,351.7 429.3,356.1 424.7,360.0" fill="#5a5a5a"/>
<polygon points="424.7,360.0 429.3,356.1 433.7,360.5 429.1,364.4" fill="#5a5a5a"/>
<polygon points="429.1,364.4 433.7,360.5 438.1,364.9 433.5,368.9" fill="#5a5a5a"/>
<polygon points="433.5,368.9 438.1,364.9 442.5,369.4 437.9,373.3" fill="#5a5a5a"/>
<polygon points="420.4,347.3 425.1,343.4 429.5,347.8 424.9,351.7" fill="#5a5a5a"/>
<polygon points="429.7,408.8 466.7,376.5 501.3,412.3 464.3,445.3" fill="#141414"/>
<polygon points="460.3,432.0 464.9,427.9 469.2,432.5 464.6,436.6" fill="#5a5a5a"/>
<polygon points="447.9,401.1 452.5,397.1 456.8,401.6 452.2,405.6" fill="#5a5a5a"/>
<polygon points="465.2,419.2 469.8,415.1 474.2,419.7 469.5,423.8" fill="#5a5a5a"/>
<polygon points="469.8,415.1 474.5,411.0 478.8,415.6 474.2,419.7" fill="#5a5a5a"/>
<polygon points="474.5,411.0 479.1,406.9 483.4,411.4 478.8,415.6" fill="#5a5a5a"/>
<polygon points="479.1,406.9 483.8,402.8 488.1,407.3 483.4,411.4" fill="#5a5a5a"/>
<polygon points="474.6,456.4 511.6,423.1 545.4,459.6 508.8,493.4" fill="#141414"/>
<polygon points="487.8,461.4 492.4,457.2 496.7,461.8 492.1,466.0" fill="#5a5a5a"/>
<polygon points="492.1,466.0 496.7,461.8 501.0,466.4 496.4,470.6" fill="#5a5a5a"/>
<polygon points="496.4,470.6 501.0,466.4 505.2,471.0 500.6,475.2" fill="#5a5a5a"/>
<polygon points="488.1,452.6 492.7,448.4 497.0,453.0 492.4,457.2" fill="#5a5a5a"/>
<polygon points="505.2,471.0 509.8,466.8 514.1,471.5 509.5,475.7" fill="#5a5a5a"/>
<polygon points="492.7,448.4 497.4,444.3 501.6,448.9 497.0,453.0" fill="#5a5a5a"/>
<polygon points="514.1,471.5 518.6,467.2 522.9,471.9 518.3,476.1" fill="#5a5a5a"/>
<polygon points="514.4,462.6 519.0,458.4 523.2,463.0 518.6,467.2" fill="#5a5a5a"/>
<polygon points="502.0,440.1 506.6,435.9 510.9,440.5 506.2,444.7" fill="#5a5a5a"/>
<polygon points="510.5,449.3 515.1,445.1 519.4,449.7 514.8,453.8" fill="#5a5a5a"/>
<polygon points="523.2,463.0 527.8,458.8 532.1,463.4 527.5,467.7" fill="#5a5a5a"/>
<polygon points="510.9,440.5 515.5,436.3 519.7,440.9 515.1,445.1" fill="#5a5a5a"/>
<polygon points="515.1,445.1 519.7,440.9 524.0,445.5 519.4,449.7" fill="#5a5a5a"/>
<polygon points="519.4,449.7 524.0,445.5 528.2,450.1 523.6,454.2" fill="#5a5a5a"/>
<polygon points="519.0,504.5 555.4,470.7 588.5,508.0 552.7,541.9" fill="#141414"/>
<polygon points="532.0,509.6 536.5,505.4 540.7,510.0 536.2,514.3" fill="#5a5a5a"/>
<polygon points="536.5,505.4 541.1,501.1 545.3,505.8 540.7,510.0" fill="#5a5a5a"/>
<polygon points="540.7,510.0 545.3,505.8 549.5,510.5 544.9,514.7" fill="#5a5a5a"/>
<polygon points="549.1,519.4 553.6,515.2 557.8,519.8 553.3,524.1" fill="#5a5a5a"/>
<polygon points="541.1,501.1 545.6,496.9 549.8,501.6 545.3,505.8" fill="#5a5a5a"/>
<polygon points="549.5,510.5 554.0,506.2 558.2,510.9 553.6,515.2" fill="#5a5a5a"/>
<polygon points="545.6,496.9 550.2,492.7 554.3,497.3 549.8,501.6" fill="#5a5a5a"/>
<polygon points="554.0,506.2 558.5,502.0 562.7,506.7 558.2,510.9" fill="#5a5a5a"/>
<polygon points="562.8,553.2 598.3,519.3 630.5,557.3 596.0,591.1" fill="#141414"/>
<polygon points="575.8,549.5 580.2,545.2 584.4,550.0 580.0,554.2" fill="#5a5a5a"/>
<polygon points="580.0,554.2 584.4,550.0 588.5,554.7 584.1,558.9" fill="#5a5a5a"/>
<polygon points="584.4,550.0 588.8,545.7 592.9,550.5 588.5,554.7" fill="#5a5a5a"/>
<polygon points="592.6,559.4 597.0,555.2 601.1,560.0 596.7,564.2" fill="#5a5a5a"/>
<polygon points="596.7,564.2 601.1,560.0 605.2,564.7 600.8,568.9" fill="#5a5a5a"/>
<polygon points="592.9,550.5 597.3,546.2 601.4,551.0 597.0,555.2" fill="#5a5a5a"/>
<polygon points="605.2,564.7 609.5,560.5 613.6,565.2 609.2,569.5" fill="#5a5a5a"/>
<polygon points="589.1,536.8 593.5,532.5 597.6,537.2 593.2,541.5" fill="#5a5a5a"/>
<polygon points="597.3,546.2 601.7,542.0 605.7,546.7 601.4,551.0" fill="#5a5a5a"/>
<polygon points="601.4,551.0 605.7,546.7 609.8,551.5 605.4,555.7" fill="#5a5a5a"/>
<polygon points="609.8,551.5 614.1,547.2 618.2,552.0 613.8,556.2" fill="#5a5a5a"/>
<polygon points="605.9,602.5 640.0,568.8 671.5,607.5 638.7,640.8" fill="#141414"/>
<polygon points="622.5,612.7 626.7,608.5 630.8,613.3 626.6,617.5" fill="#5a5a5a"/>
<polygon points="630.6,622.3 634.8,618.1 638.9,622.9 634.7,627.1" fill="#5a5a5a"/>
<polygon points="622.6,603.7 626.9,599.5 630.9,604.3 626.7,608.5" fill="#5a5a5a"/>
<polygon points="626.7,608.5 630.9,604.3 635.0,609.1 630.8,613.3" fill="#5a5a5a"/>
<polygon points="630.8,613.3 635.0,609.1 639.0,614.0 634.8,618.1" fill="#5a5a5a"/>
<polygon points="634.8,618.1 639.0,614.0 643.0,618.8 638.9,622.9" fill="#5a5a5a"/>
<polygon points="638.9,622.9 643.0,618.8 647.1,623.6 642.9,627.7" fill="#5a5a5a"/>
<polygon points="643.0,618.8 647.2,614.6 651.2,619.4 647.1,623.6" fill="#5a5a5a"/>
<polygon points="627.1,590.5 631.3,586.3 635.3,591.1 631.1,595.3" fill="#5a5a5a"/>
<polygon points="635.2,600.1 639.4,595.9 643.4,600.8 639.2,605.0" fill="#5a5a5a"/>
<polygon points="635.3,591.1 639.6,586.9 643.5,591.7 639.4,595.9" fill="#5a5a5a"/>
<polygon points="639.4,595.9 643.5,591.7 647.5,596.5 643.4,600.8" fill="#5a5a5a"/>
<polygon points="651.3,610.4 655.5,606.2 659.4,611.1 655.3,615.3" fill="#5a5a5a"/>
<polygon points="647.5,596.5 651.7,592.3 655.6,597.2 651.5,601.4" fill="#5a5a5a"/>
<polygon points="432.0,321.7 469.9,291.9 505.3,325.2 467.5,356.4" fill="#141414"/>
<polygon points="441.2,322.2 445.9,318.4 450.3,322.7 445.6,326.5" fill="#5a5a5a"/>
<polygon points="450.1,330.8 454.8,327.0 459.2,331.2 454.5,335.1" fill="#5a5a5a"/>
<polygon points="458.9,339.4 463.7,335.5 468.1,339.9 463.4,343.7" fill="#5a5a5a"/>
<polygon points="463.4,343.7 468.1,339.9 472.5,344.2 467.8,348.1" fill="#5a5a5a"/>
<polygon points="450.3,322.7 455.1,318.9 459.5,323.1 454.8,327.0" fill="#5a5a5a"/>
<polygon points="468.1,339.9 472.8,336.0 477.2,340.3 472.5,344.2" fill="#5a5a5a"/>
<polygon points="463.9,327.4 468.7,323.6 473.1,327.8 468.4,331.7" fill="#5a5a5a"/>
<polygon points="468.4,331.7 473.1,327.8 477.5,332.1 472.8,336.0" fill="#5a5a5a"/>
<polygon points="472.8,336.0 477.5,332.1 481.9,336.4 477.2,340.3" fill="#5a5a5a"/>
<polygon points="459.8,315.1 464.5,311.3 469.0,315.6 464.2,319.3" fill="#5a5a5a"/>
<polygon points="464.2,319.3 469.0,315.6 473.4,319.8 468.7,323.6" fill="#5a5a5a"/>
<polygon points="468.7,323.6 473.4,319.8 477.8,324.0 473.1,327.8" fill="#5a5a5a"/>
<polygon points="477.8,324.0 482.6,320.2 487.0,324.4 482.3,328.3" fill="#5a5a5a"/>
<polygon points="482.3,328.3 487.0,324.4 491.4,328.7 486.7,332.5" fill="#5a5a5a"/>
<polygon points="473.7,311.8 478.5,308.0 482.9,312.2 478.2,316.0" fill="#5a5a5a"/>
<polygon points="482.6,320.2 487.4,316.4 491.8,320.6 487.0,324.4" fill="#5a5a5a"/>
<polygon points="478.0,366.9 515.8,335.3 550.0,369.8 512.5,402.4" fill="#141414"/>
<polygon points="500.0,380.5 504.7,376.5 509.0,380.9 504.3,385.0" fill="#5a5a5a"/>
<polygon points="508.6,389.4 513.3,385.3 517.6,389.8 512.9,393.8" fill="#5a5a5a"/>
<polygon points="491.7,363.3 496.4,359.3 500.8,363.7 496.0,367.7" fill="#5a5a5a"/>
<polygon points="500.4,372.1 505.1,368.1 509.4,372.5 504.7,376.5" fill="#5a5a5a"/>
<polygon points="504.7,376.5 509.4,372.5 513.7,376.9 509.0,380.9" fill="#5a5a5a"/>
<polygon points="513.3,385.3 518.0,381.3 522.3,385.7 517.6,389.8" fill="#5a5a5a"/>
<polygon points="496.4,359.3 501.1,355.4 505.5,359.7 500.8,363.7" fill="#5a5a5a"/>
<polygon points="505.1,368.1 509.8,364.1 514.1,368.4 509.4,372.5" fill="#5a5a5a"/>
<polygon points="518.0,381.3 522.7,377.2 526.9,381.6 522.3,385.7" fill="#5a5a5a"/>
<polygon points="522.7,377.2 527.4,373.2 531.6,377.6 526.9,381.6" fill="#5a5a5a"/>
<polygon points="532.1,369.1 536.8,365.1 541.0,369.5 536.3,373.5" fill="#5a5a5a"/>
<polygon points="522.7,413.2 560.1,380.3 593.0,415.8 556.4,449.5" fill="#141414"/>
<polygon points="535.9,418.0 540.5,413.9 544.7,418.4 540.1,422.6" fill="#5a5a5a"/>
<polygon points="544.3,427.1 548.9,422.9 553.1,427.4 548.5,431.6" fill="#5a5a5a"/>
<polygon points="544.7,418.4 549.3,414.2 553.5,418.8 548.9,422.9" fill="#5a5a5a"/>
<polygon points="553.1,427.4 557.7,423.3 561.9,427.8 557.3,432.0" fill="#5a5a5a"/>
<polygon points="545.1,409.8 549.8,405.6 554.0,410.1 549.3,414.2" fill="#5a5a5a"/>
<polygon points="545.6,401.1 550.2,397.0 554.4,401.5 549.8,405.6" fill="#5a5a5a"/>
<polygon points="549.8,405.6 554.4,401.5 558.6,405.9 554.0,410.1" fill="#5a5a5a"/>
<polygon points="554.0,410.1 558.6,405.9 562.8,410.4 558.1,414.6" fill="#5a5a5a"/>
<polygon points="550.2,397.0 554.9,392.9 559.1,397.3 554.4,401.5" fill="#5a5a5a"/>
<polygon points="558.6,405.9 563.2,401.8 567.4,406.3 562.8,410.4" fill="#5a5a5a"/>
<polygon points="559.1,397.3 563.7,393.2 567.9,397.6 563.2,401.8" fill="#5a5a5a"/>
<polygon points="563.2,401.8 567.9,397.6 572.0,402.1 567.4,406.3" fill="#5a5a5a"/>
<polygon points="567.4,406.3 572.0,402.1 576.2,406.6 571.5,410.7" fill="#5a5a5a"/>
<polygon points="571.5,410.7 576.2,406.6 580.3,411.0 575.7,415.2" fill="#5a5a5a"/>
<polygon points="575.7,415.2 580.3,411.0 584.4,415.5 579.8,419.7" fill="#5a5a5a"/>
<polygon points="566.4,460.5 602.8,426.7 634.5,463.4 599.1,497.7" fill="#141414"/>
<polygon points="583.3,470.2 587.8,465.9 591.8,470.5 587.3,474.8" fill="#5a5a5a"/>
<polygon points="591.4,479.4 595.9,475.2 599.9,479.8 595.5,484.1" fill="#5a5a5a"/>
<polygon points="579.6,456.7 584.1,452.4 588.2,457.0 583.7,461.3" fill="#5a5a5a"/>
<polygon points="583.7,461.3 588.2,457.0 592.3,461.6 587.8,465.9" fill="#5a5a5a"/>
<polygon points="587.8,465.9 592.3,461.6 596.3,466.3 591.8,470.5" fill="#5a5a5a"/>
<polygon points="584.1,452.4 588.7,448.2 592.7,452.8 588.2,457.0" fill="#5a5a5a"/>
<polygon points="596.3,466.3 600.8,462.0 604.9,466.6 600.4,470.9" fill="#5a5a5a"/>
<polygon points="604.4,475.5 608.9,471.3 612.9,475.9 608.4,480.2" fill="#5a5a5a"/>
<polygon points="600.8,462.0 605.3,457.7 609.3,462.4 604.9,466.6" fill="#5a5a5a"/>
<polygon points="593.2,444.0 597.7,439.7 601.8,444.3 597.2,448.5" fill="#5a5a5a"/>
<polygon points="597.2,448.5 601.8,444.3 605.8,448.9 601.3,453.1" fill="#5a5a5a"/>
<polygon points="605.3,457.7 609.8,453.5 613.8,458.1 609.3,462.4" fill="#5a5a5a"/>
<polygon points="613.3,467.0 617.8,462.7 621.8,467.3 617.3,471.6" fill="#5a5a5a"/>
<polygon points="601.8,444.3 606.3,440.0 610.3,444.6 605.8,448.9" fill="#5a5a5a"/>
<polygon points="605.8,448.9 610.3,444.6 614.3,449.2 609.8,453.5" fill="#5a5a5a"/>
<polygon points="608.8,509.0 643.9,474.6 674.5,512.4 640.7,547.0" fill="#141414"/>
<polygon points="617.2,509.4 621.6,505.1 625.6,509.9 621.2,514.1" fill="#5a5a5a"/>
<polygon points="621.2,514.1 625.6,509.9 629.6,514.6 625.2,518.9" fill="#5a5a5a"/>
<polygon points="629.2,523.6 633.5,519.3 637.5,524.1 633.2,528.4" fill="#5a5a5a"/>
<polygon points="637.5,524.1 641.7,519.8 645.7,524.5 641.4,528.8" fill="#5a5a5a"/>
<polygon points="630.0,505.5 634.3,501.2 638.2,506.0 633.9,510.3" fill="#5a5a5a"/>
<polygon points="634.7,492.2 639.1,487.9 643.0,492.6 638.6,496.9" fill="#5a5a5a"/>
<polygon points="642.5,501.6 646.9,497.3 650.7,502.1 646.4,506.4" fill="#5a5a5a"/>
<polygon points="650.3,511.1 654.6,506.8 658.4,511.6 654.2,515.9" fill="#5a5a5a"/>
<polygon points="654.2,515.9 658.4,511.6 662.3,516.3 658.0,520.7" fill="#5a5a5a"/>
<polygon points="639.1,487.9 643.4,483.6 647.3,488.3 643.0,492.6" fill="#5a5a5a"/>
<polygon points="646.9,497.3 651.2,493.0 655.0,497.7 650.7,502.1" fill="#5a5a5a"/>
<polygon points="650.1,558.5 683.4,523.9 712.8,562.9 681.1,597.4" fill="#141414"/>
<polygon points="662.1,563.9 666.3,559.6 670.1,564.4 666.0,568.7" fill="#5a5a5a"/>
<polygon points="669.8,573.6 673.9,569.3 677.7,574.2 673.7,578.5" fill="#5a5a5a"/>
<polygon points="662.4,554.8 666.6,550.5 670.4,555.3 666.3,559.6" fill="#5a5a5a"/>
<polygon points="666.3,559.6 670.4,555.3 674.2,560.1 670.1,564.4" fill="#5a5a5a"/>
<polygon points="670.1,564.4 674.2,560.1 678.0,565.0 673.9,569.3" fill="#5a5a5a"/>
<polygon points="673.9,569.3 678.0,565.0 681.8,569.9 677.7,574.2" fill="#5a5a5a"/>
<polygon points="670.4,555.3 674.5,551.0 678.3,555.8 674.2,560.1" fill="#5a5a5a"/>
<polygon points="678.0,565.0 682.1,560.7 685.8,565.6 681.8,569.9" fill="#5a5a5a"/>
<polygon points="682.1,560.7 686.1,556.4 689.9,561.2 685.8,565.6" fill="#5a5a5a"/>
<polygon points="685.8,565.6 689.9,561.2 693.6,566.1 689.6,570.4" fill="#5a5a5a"/>
<polygon points="674.8,541.8 679.0,537.5 682.7,542.3 678.6,546.6" fill="#5a5a5a"/>
<polygon points="682.4,551.5 686.5,547.2 690.2,552.0 686.1,556.4" fill="#5a5a5a"/>
<polygon points="693.6,566.1 697.6,561.8 701.3,566.7 697.3,571.0" fill="#5a5a5a"/>
<polygon points="682.7,542.3 686.8,538.0 690.5,542.8 686.5,547.2" fill="#5a5a5a"/>
<polygon points="686.5,547.2 690.5,542.8 694.2,547.7 690.2,552.0" fill="#5a5a5a"/>
<polygon points="690.2,552.0 694.2,547.7 697.9,552.5 693.9,556.9" fill="#5a5a5a"/>
<polygon points="697.6,561.8 701.6,557.4 705.2,562.3 701.3,566.7" fill="#5a5a5a"/>
<circle cx="207.2" cy="538.0" r="2.9" fill="#c01860" stroke="#ff10ff" stroke-width="1.7"/>
<circle cx="239.4" cy="502.2" r="2.9" fill="#c01860" stroke="#ff10ff" stroke-width="1.7"/>
<circle cx="270.7" cy="540.0" r="2.9" fill="#c01860" stroke="#ff10ff" stroke-width="1.7"/>
<circle cx="237.1" cy="575.6" r="2.9" fill="#c01860" stroke="#ff10ff" stroke-width="1.7"/>
<circle cx="246.2" cy="586.7" r="2.9" fill="#c01860" stroke="#ff10ff" stroke-width="1.7"/>
<circle cx="280.3" cy="551.2" r="2.9" fill="#c01860" stroke="#ff10ff" stroke-width="1.7"/>
<circle cx="312.5" cy="588.3" r="2.9" fill="#c01860" stroke="#ff10ff" stroke-width="1.7"/>
<circle cx="277.3" cy="623.2" r="2.9" fill="#c01860" stroke="#ff10ff" stroke-width="1.7"/>
<circle cx="286.8" cy="634.0" r="2.9" fill="#c01860" stroke="#ff10ff" stroke-width="1.7"/>
<circle cx="322.3" cy="599.2" r="2.9" fill="#c01860" stroke="#ff10ff" stroke-width="1.7"/>
<circle cx="355.5" cy="635.4" r="2.9" fill="#c01860" stroke="#ff10ff" stroke-width="1.7"/>
<circle cx="319.1" cy="669.3" r="2.9" fill="#c01860" stroke="#ff10ff" stroke-width="1.7"/>
<circle cx="328.9" cy="679.8" r="2.9" fill="#c01860" stroke="#ff10ff" stroke-width="1.7"/>
<circle cx="365.6" cy="646.1" r="2.9" fill="#c01860" stroke="#ff10ff" stroke-width="1.7"/>
<circle cx="399.6" cy="681.5" r="2.9" fill="#c01860" stroke="#ff10ff" stroke-width="1.7"/>
<circle cx="362.4" cy="714.0" r="2.9" fill="#c01860" stroke="#ff10ff" stroke-width="1.7"/>
<circle cx="372.7" cy="724.1" r="2.9" fill="#c01860" stroke="#ff10ff" stroke-width="1.7"/>
<circle cx="409.9" cy="692.0" r="2.9" fill="#c01860" stroke="#ff10ff" stroke-width="1.7"/>
<circle cx="444.9" cy="726.5" r="2.9" fill="#c01860" stroke="#ff10ff" stroke-width="1.7"/>
<circle cx="407.4" cy="757.1" r="2.9" fill="#c01860" stroke="#ff10ff" stroke-width="1.7"/>
<circle cx="418.0" cy="766.9" r="2.9" fill="#c01860" stroke="#ff10ff" stroke-width="1.7"/>
<circle cx="455.5" cy="736.7" r="2.9" fill="#c01860" stroke="#ff10ff" stroke-width="1.7"/>
<circle cx="491.3" cy="770.4" r="2.9" fill="#c01860" stroke="#ff10ff" stroke-width="1.7"/>
<circle cx="453.9" cy="798.8" r="2.9" fill="#c01860" stroke="#ff10ff" stroke-width="1.7"/>
<circle cx="249.2" cy="491.6" r="2.9" fill="#c01860" stroke="#ff10ff" stroke-width="1.7"/>
<circle cx="282.5" cy="457.0" r="2.9" fill="#c01860" stroke="#ff10ff" stroke-width="1.7"/>
<circle cx="315.5" cy="494.7" r="2.9" fill="#c01860" stroke="#ff10ff" stroke-width="1.7"/>
<circle cx="281.0" cy="529.5" r="2.9" fill="#c01860" stroke="#ff10ff" stroke-width="1.7"/>
<circle cx="290.6" cy="540.7" r="2.9" fill="#c01860" stroke="#ff10ff" stroke-width="1.7"/>
<circle cx="325.4" cy="506.0" r="2.9" fill="#c01860" stroke="#ff10ff" stroke-width="1.7"/>
<circle cx="358.9" cy="543.3" r="2.9" fill="#c01860" stroke="#ff10ff" stroke-width="1.7"/>
<circle cx="323.2" cy="577.8" r="2.9" fill="#c01860" stroke="#ff10ff" stroke-width="1.7"/>
<circle cx="333.1" cy="588.9" r="2.9" fill="#c01860" stroke="#ff10ff" stroke-width="1.7"/>
<circle cx="369.0" cy="554.5" r="2.9" fill="#c01860" stroke="#ff10ff" stroke-width="1.7"/>
<circle cx="402.9" cy="591.4" r="2.9" fill="#c01860" stroke="#ff10ff" stroke-width="1.7"/>
<circle cx="366.4" cy="625.2" r="2.9" fill="#c01860" stroke="#ff10ff" stroke-width="1.7"/>
<circle cx="376.5" cy="636.0" r="2.9" fill="#c01860" stroke="#ff10ff" stroke-width="1.7"/>
<circle cx="413.1" cy="602.4" r="2.9" fill="#c01860" stroke="#ff10ff" stroke-width="1.7"/>
<circle cx="447.5" cy="638.8" r="2.9" fill="#c01860" stroke="#ff10ff" stroke-width="1.7"/>
<circle cx="410.7" cy="671.7" r="2.9" fill="#c01860" stroke="#ff10ff" stroke-width="1.7"/>
<circle cx="421.0" cy="682.3" r="2.9" fill="#c01860" stroke="#ff10ff" stroke-width="1.7"/>
<circle cx="457.9" cy="649.7" r="2.9" fill="#c01860" stroke="#ff10ff" stroke-width="1.7"/>
<circle cx="492.7" cy="685.7" r="2.9" fill="#c01860" stroke="#ff10ff" stroke-width="1.7"/>
<circle cx="456.0" cy="717.2" r="2.9" fill="#c01860" stroke="#ff10ff" stroke-width="1.7"/>
<circle cx="466.6" cy="727.5" r="2.9" fill="#c01860" stroke="#ff10ff" stroke-width="1.7"/>
<circle cx="503.2" cy="696.4" r="2.9" fill="#c01860" stroke="#ff10ff" stroke-width="1.7"/>
<circle cx="538.6" cy="732.0" r="2.9" fill="#c01860" stroke="#ff10ff" stroke-width="1.7"/>
<circle cx="502.3" cy="761.7" r="2.9" fill="#c01860" stroke="#ff10ff" stroke-width="1.7"/>
<circle cx="292.7" cy="446.8" r="2.9" fill="#c01860" stroke="#ff10ff" stroke-width="1.7"/>
<circle cx="327.1" cy="413.3" r="2.9" fill="#c01860" stroke="#ff10ff" stroke-width="1.7"/>
<circle cx="361.3" cy="450.6" r="2.9" fill="#c01860" stroke="#ff10ff" stroke-width="1.7"/>
<circle cx="325.9" cy="484.5" r="2.9" fill="#c01860" stroke="#ff10ff" stroke-width="1.7"/>
<circle cx="336.0" cy="495.7" r="2.9" fill="#c01860" stroke="#ff10ff" stroke-width="1.7"/>
<circle cx="371.6" cy="461.8" r="2.9" fill="#c01860" stroke="#ff10ff" stroke-width="1.7"/>
<circle cx="405.8" cy="499.0" r="2.9" fill="#c01860" stroke="#ff10ff" stroke-width="1.7"/>
<circle cx="369.6" cy="533.1" r="2.9" fill="#c01860" stroke="#ff10ff" stroke-width="1.7"/>
<circle cx="379.8" cy="544.2" r="2.9" fill="#c01860" stroke="#ff10ff" stroke-width="1.7"/>
<circle cx="416.1" cy="510.2" r="2.9" fill="#c01860" stroke="#ff10ff" stroke-width="1.7"/>
<circle cx="450.3" cy="547.4" r="2.9" fill="#c01860" stroke="#ff10ff" stroke-width="1.7"/>
<circle cx="413.8" cy="581.2" r="2.9" fill="#c01860" stroke="#ff10ff" stroke-width="1.7"/>
<circle cx="424.1" cy="592.3" r="2.9" fill="#c01860" stroke="#ff10ff" stroke-width="1.7"/>
<circle cx="460.6" cy="558.5" r="2.9" fill="#c01860" stroke="#ff10ff" stroke-width="1.7"/>
<circle cx="494.9" cy="595.7" r="2.9" fill="#c01860" stroke="#ff10ff" stroke-width="1.7"/>
<circle cx="458.5" cy="628.9" r="2.9" fill="#c01860" stroke="#ff10ff" stroke-width="1.7"/>
<circle cx="468.9" cy="639.9" r="2.9" fill="#c01860" stroke="#ff10ff" stroke-width="1.7"/>
<circle cx="505.2" cy="606.8" r="2.9" fill="#c01860" stroke="#ff10ff" stroke-width="1.7"/>
<circle cx="539.6" cy="643.9" r="2.9" fill="#c01860" stroke="#ff10ff" stroke-width="1.7"/>
<circle cx="503.6" cy="676.2" r="2.9" fill="#c01860" stroke="#ff10ff" stroke-width="1.7"/>
<circle cx="514.1" cy="687.0" r="2.9" fill="#c01860" stroke="#ff10ff" stroke-width="1.7"/>
<circle cx="549.9" cy="655.0" r="2.9" fill="#c01860" stroke="#ff10ff" stroke-width="1.7"/>
<circle cx="584.3" cy="692.1" r="2.9" fill="#c01860" stroke="#ff10ff" stroke-width="1.7"/>
<circle cx="549.3" cy="722.9" r="2.9" fill="#c01860" stroke="#ff10ff" stroke-width="1.7"/>
<circle cx="337.6" cy="403.5" r="2.9" fill="#c01860" stroke="#ff10ff" stroke-width="1.7"/>
<circle cx="373.2" cy="371.3" r="2.9" fill="#c01860" stroke="#ff10ff" stroke-width="1.7"/>
<circle cx="408.2" cy="407.7" r="2.9" fill="#c01860" stroke="#ff10ff" stroke-width="1.7"/>
<circle cx="372.0" cy="440.6" r="2.9" fill="#c01860" stroke="#ff10ff" stroke-width="1.7"/>
<circle cx="382.3" cy="451.7" r="2.9" fill="#c01860" stroke="#ff10ff" stroke-width="1.7"/>
<circle cx="418.7" cy="418.6" r="2.9" fill="#c01860" stroke="#ff10ff" stroke-width="1.7"/>
<circle cx="453.3" cy="455.3" r="2.9" fill="#c01860" stroke="#ff10ff" stroke-width="1.7"/>
<circle cx="416.7" cy="488.9" r="2.9" fill="#c01860" stroke="#ff10ff" stroke-width="1.7"/>
<circle cx="427.0" cy="500.1" r="2.9" fill="#c01860" stroke="#ff10ff" stroke-width="1.7"/>
<circle cx="463.6" cy="466.4" r="2.9" fill="#c01860" stroke="#ff10ff" stroke-width="1.7"/>
<circle cx="497.8" cy="503.5" r="2.9" fill="#c01860" stroke="#ff10ff" stroke-width="1.7"/>
<circle cx="461.3" cy="537.3" r="2.9" fill="#c01860" stroke="#ff10ff" stroke-width="1.7"/>
<circle cx="471.6" cy="548.4" r="2.9" fill="#c01860" stroke="#ff10ff" stroke-width="1.7"/>
<circle cx="508.1" cy="514.6" r="2.9" fill="#c01860" stroke="#ff10ff" stroke-width="1.7"/>
<circle cx="541.9" cy="552.1" r="2.9" fill="#c01860" stroke="#ff10ff" stroke-width="1.7"/>
<circle cx="505.8" cy="585.7" r="2.9" fill="#c01860" stroke="#ff10ff" stroke-width="1.7"/>
<circle cx="516.1" cy="596.8" r="2.9" fill="#c01860" stroke="#ff10ff" stroke-width="1.7"/>
<circle cx="552.0" cy="563.3" r="2.9" fill="#c01860" stroke="#ff10ff" stroke-width="1.7"/>
<circle cx="585.5" cy="601.1" r="2.9" fill="#c01860" stroke="#ff10ff" stroke-width="1.7"/>
<circle cx="550.3" cy="634.1" r="2.9" fill="#c01860" stroke="#ff10ff" stroke-width="1.7"/>
<circle cx="560.5" cy="645.3" r="2.9" fill="#c01860" stroke="#ff10ff" stroke-width="1.7"/>
<circle cx="595.5" cy="612.5" r="2.9" fill="#c01860" stroke="#ff10ff" stroke-width="1.7"/>
<circle cx="628.7" cy="650.6" r="2.9" fill="#c01860" stroke="#ff10ff" stroke-width="1.7"/>
<circle cx="594.7" cy="682.7" r="2.9" fill="#c01860" stroke="#ff10ff" stroke-width="1.7"/>
<circle cx="384.1" cy="361.8" r="2.9" fill="#c01860" stroke="#ff10ff" stroke-width="1.7"/>
<circle cx="420.8" cy="330.8" r="2.9" fill="#c01860" stroke="#ff10ff" stroke-width="1.7"/>
<circle cx="456.2" cy="365.8" r="2.9" fill="#c01860" stroke="#ff10ff" stroke-width="1.7"/>
<circle cx="419.2" cy="397.9" r="2.9" fill="#c01860" stroke="#ff10ff" stroke-width="1.7"/>
<circle cx="429.7" cy="408.8" r="2.9" fill="#c01860" stroke="#ff10ff" stroke-width="1.7"/>
<circle cx="466.7" cy="376.5" r="2.9" fill="#c01860" stroke="#ff10ff" stroke-width="1.7"/>
<circle cx="501.3" cy="412.3" r="2.9" fill="#c01860" stroke="#ff10ff" stroke-width="1.7"/>
<circle cx="464.3" cy="445.3" r="2.9" fill="#c01860" stroke="#ff10ff" stroke-width="1.7"/>
<circle cx="474.6" cy="456.4" r="2.9" fill="#c01860" stroke="#ff10ff" stroke-width="1.7"/>
<circle cx="511.6" cy="423.1" r="2.9" fill="#c01860" stroke="#ff10ff" stroke-width="1.7"/>
<circle cx="545.4" cy="459.6" r="2.9" fill="#c01860" stroke="#ff10ff" stroke-width="1.7"/>
<circle cx="508.8" cy="493.4" r="2.9" fill="#c01860" stroke="#ff10ff" stroke-width="1.7"/>
<circle cx="519.0" cy="504.5" r="2.9" fill="#c01860" stroke="#ff10ff" stroke-width="1.7"/>
<circle cx="555.4" cy="470.7" r="2.9" fill="#c01860" stroke="#ff10ff" stroke-width="1.7"/>
<circle cx="588.5" cy="508.0" r="2.9" fill="#c01860" stroke="#ff10ff" stroke-width="1.7"/>
<circle cx="552.7" cy="541.9" r="2.9" fill="#c01860" stroke="#ff10ff" stroke-width="1.7"/>
<circle cx="562.8" cy="553.2" r="2.9" fill="#c01860" stroke="#ff10ff" stroke-width="1.7"/>
<circle cx="598.3" cy="519.3" r="2.9" fill="#c01860" stroke="#ff10ff" stroke-width="1.7"/>
<circle cx="630.5" cy="557.3" r="2.9" fill="#c01860" stroke="#ff10ff" stroke-width="1.7"/>
<circle cx="596.0" cy="591.1" r="2.9" fill="#c01860" stroke="#ff10ff" stroke-width="1.7"/>
<circle cx="605.9" cy="602.5" r="2.9" fill="#c01860" stroke="#ff10ff" stroke-width="1.7"/>
<circle cx="640.0" cy="568.8" r="2.9" fill="#c01860" stroke="#ff10ff" stroke-width="1.7"/>
<circle cx="671.5" cy="607.5" r="2.9" fill="#c01860" stroke="#ff10ff" stroke-width="1.7"/>
<circle cx="638.7" cy="640.8" r="2.9" fill="#c01860" stroke="#ff10ff" stroke-width="1.7"/>
<circle cx="432.0" cy="321.7" r="2.9" fill="#c01860" stroke="#ff10ff" stroke-width="1.7"/>
<circle cx="469.9" cy="291.9" r="2.9" fill="#c01860" stroke="#ff10ff" stroke-width="1.7"/>
<circle cx="505.3" cy="325.2" r="2.9" fill="#c01860" stroke="#ff10ff" stroke-width="1.7"/>
<circle cx="467.5" cy="356.4" r="2.9" fill="#c01860" stroke="#ff10ff" stroke-width="1.7"/>
<circle cx="478.0" cy="366.9" r="2.9" fill="#c01860" stroke="#ff10ff" stroke-width="1.7"/>
<circle cx="515.8" cy="335.3" r="2.9" fill="#c01860" stroke="#ff10ff" stroke-width="1.7"/>
<circle cx="550.0" cy="369.8" r="2.9" fill="#c01860" stroke="#ff10ff" stroke-width="1.7"/>
<circle cx="512.5" cy="402.4" r="2.9" fill="#c01860" stroke="#ff10ff" stroke-width="1.7"/>
<circle cx="522.7" cy="413.2" r="2.9" fill="#c01860" stroke="#ff10ff" stroke-width="1.7"/>
<circle cx="560.1" cy="380.3" r="2.9" fill="#c01860" stroke="#ff10ff" stroke-width="1.7"/>
<circle cx="593.0" cy="415.8" r="2.9" fill="#c01860" stroke="#ff10ff" stroke-width="1.7"/>
<circle cx="556.4" cy="449.5" r="2.9" fill="#c01860" stroke="#ff10ff" stroke-width="1.7"/>
<circle cx="566.4" cy="460.5" r="2.9" fill="#c01860" stroke="#ff10ff" stroke-width="1.7"/>
<circle cx="602.8" cy="426.7" r="2.9" fill="#c01860" stroke="#ff10ff" stroke-width="1.7"/>
<circle cx="634.5" cy="463.4" r="2.9" fill="#c01860" stroke="#ff10ff" stroke-width="1.7"/>
<circle cx="599.1" cy="497.7" r="2.9" fill="#c01860" stroke="#ff10ff" stroke-width="1.7"/>
<circle cx="608.8" cy="509.0" r="2.9" fill="#c01860" stroke="#ff10ff" stroke-width="1.7"/>
<circle cx="643.9" cy="474.6" r="2.9" fill="#c01860" stroke="#ff10ff" stroke-width="1.7"/>
<circle cx="674.5" cy="512.4" r="2.9" fill="#c01860" stroke="#ff10ff" stroke-width="1.7"/>
<circle cx="640.7" cy="547.0" r="2.9" fill="#c01860" stroke="#ff10ff" stroke-width="1.7"/>
<circle cx="650.1" cy="558.5" r="2.9" fill="#c01860" stroke="#ff10ff" stroke-width="1.7"/>
<circle cx="683.4" cy="523.9" r="2.9" fill="#c01860" stroke="#ff10ff" stroke-width="1.7"/>
<circle cx="712.8" cy="562.9" r="2.9" fill="#c01860" stroke="#ff10ff" stroke-width="1.7"/>
<circle cx="681.1" cy="597.4" r="2.9" fill="#c01860" stroke="#ff10ff" stroke-width="1.7"/><text transform="translate(5.0,64) scale(1,1.1)" x="0" y="0" font-family="Liberation Mono, monospace" font-size="27.3" fill="#c80000" stroke="#c80000" stroke-width="0.35">Detected 144 corners (0 rejected)</text></g></g>
</svg>
<svg class="a" style="left:714px;top:1119px" width="2597" height="999" viewBox="714 1119 2597 999"><rect x="714" y="1119" width="2597" height="999" fill="#000"/><line x1="1089.8" y1="1119" x2="1089.8" y2="2118" stroke="#4a4a4a" stroke-width="2.6"/><line x1="1388.1" y1="1119" x2="1388.1" y2="2118" stroke="#4a4a4a" stroke-width="2.6"/><line x1="1686.4" y1="1119" x2="1686.4" y2="2118" stroke="#4a4a4a" stroke-width="2.6"/><line x1="1984.6" y1="1119" x2="1984.6" y2="2118" stroke="#4a4a4a" stroke-width="2.6"/><line x1="2282.9" y1="1119" x2="2282.9" y2="2118" stroke="#4a4a4a" stroke-width="2.6"/><line x1="2581.2" y1="1119" x2="2581.2" y2="2118" stroke="#4a4a4a" stroke-width="2.6"/><line x1="2879.5" y1="1119" x2="2879.5" y2="2118" stroke="#4a4a4a" stroke-width="2.6"/><line x1="3177.8" y1="1119" x2="3177.8" y2="2118" stroke="#4a4a4a" stroke-width="2.6"/><line x1="714" y1="1199.7" x2="3311" y2="1199.7" stroke="#4a4a4a" stroke-width="2.6"/><line x1="714" y1="1376.7" x2="3311" y2="1376.7" stroke="#4a4a4a" stroke-width="2.6"/><line x1="714" y1="1553.8" x2="3311" y2="1553.8" stroke="#4a4a4a" stroke-width="2.6"/><line x1="714" y1="1907.8" x2="3311" y2="1907.8" stroke="#4a4a4a" stroke-width="2.6"/><line x1="714" y1="2084.9" x2="3311" y2="2084.9" stroke="#4a4a4a" stroke-width="2.6"/><line x1="714" y1="1476" x2="3311" y2="1476" stroke="#1e1e1e" stroke-width="3.5"/><line x1="1272" y1="1119" x2="1272" y2="2118" stroke="#1b1b1b" stroke-width="3.5"/><line x1="1278.2" y1="1119" x2="1278.2" y2="2118" stroke="#505050" stroke-width="3.5"/><line x1="714" y1="1718" x2="3311" y2="1718" stroke="#5a5a5a" stroke-width="3.5"/><line x1="791.5" y1="1119" x2="791.5" y2="2118" stroke="#8a8a8a" stroke-width="3.5"/><line x1="714" y1="1730.8" x2="3311" y2="1730.8" stroke="#747474" stroke-width="3.5"/><text x="740" y="1209.2" font-family="Liberation Mono, monospace" font-size="26" fill="#7a7a7a">30</text><text x="740" y="1386.2" font-family="Liberation Mono, monospace" font-size="26" fill="#7a7a7a">20</text><text x="740" y="1563.3" font-family="Liberation Mono, monospace" font-size="26" fill="#7a7a7a">10</text><text x="740" y="1740.3" font-family="Liberation Mono, monospace" font-size="26" fill="#7a7a7a">0</text><text x="740" y="1917.3" font-family="Liberation Mono, monospace" font-size="26" fill="#7a7a7a">-10</text><text x="740" y="2094.4" font-family="Liberation Mono, monospace" font-size="26" fill="#7a7a7a">-20</text><text x="788.5" y="2093.5" text-anchor="middle" font-family="Liberation Mono, monospace" font-size="26" fill="#7a7a7a">0</text><text x="1086.8" y="2093.5" text-anchor="middle" font-family="Liberation Mono, monospace" font-size="26" fill="#7a7a7a">5</text><text x="1385.1" y="2093.5" text-anchor="middle" font-family="Liberation Mono, monospace" font-size="26" fill="#7a7a7a">10</text><text x="1683.4" y="2093.5" text-anchor="middle" font-family="Liberation Mono, monospace" font-size="26" fill="#7a7a7a">15</text><text x="1981.6" y="2093.5" text-anchor="middle" font-family="Liberation Mono, monospace" font-size="26" fill="#7a7a7a">20</text><text x="2279.9" y="2093.5" text-anchor="middle" font-family="Liberation Mono, monospace" font-size="26" fill="#7a7a7a">25</text><text x="2578.2" y="2093.5" text-anchor="middle" font-family="Liberation Mono, monospace" font-size="26" fill="#7a7a7a">30</text><text x="2876.5" y="2093.5" text-anchor="middle" font-family="Liberation Mono, monospace" font-size="26" fill="#7a7a7a">35</text><text x="3174.8" y="2093.5" text-anchor="middle" font-family="Liberation Mono, monospace" font-size="26" fill="#7a7a7a">40</text><path d="M790.5,1752.4 L793.1,1749.8 L795.8,1751.9 L798.4,1750.0 L801.0,1750.6 L803.7,1752.8 L806.3,1754.3 L808.9,1751.1 L811.6,1755.9 L814.2,1751.1 L816.8,1756.8 L819.4,1751.3 L822.1,1752.4 L825.6,1753.8 L829.1,1759.4 L832.6,1752.0 L836.1,1736.6 L838.7,1730.2 L841.4,1724.3 L844.9,1733.2 L848.4,1736.6 L851.0,1733.8 L853.6,1731.3 L857.1,1739.5 L860.6,1745.4 L864.2,1736.4 L867.7,1733.1 L871.2,1738.6 L874.7,1741.9 L878.2,1747.4 L881.7,1747.1 L885.2,1750.8 L888.7,1754.1 L892.2,1761.3 L895.7,1764.7 L899.2,1752.0 L902.7,1736.6 L906.2,1739.3 L909.7,1748.9 L912.7,1742.8 L915.6,1733.2 L918.5,1724.3 L922.0,1716.6 L925.5,1712.1 L928.1,1720.6 L930.8,1736.6 L934.3,1705.0 L937.8,1716.7 L941.3,1722.6 L944.8,1711.8 L948.3,1701.5 L951.8,1719.1 L955.3,1733.1 L958.8,1730.9 L962.3,1722.6 L965.3,1715.5 L968.2,1708.4 L971.1,1696.3 L973.7,1713.9 L976.4,1733.1 L979.9,1721.5 L983.4,1705.0 L986.9,1718.6 L990.4,1733.1 L993.9,1719.1 L997.4,1698.0 L1000.9,1718.6 L1004.4,1733.1 L1007.9,1710.6 L1011.4,1694.5 L1014.9,1688.1 L1018.4,1687.5 L1021.9,1705.4 L1025.4,1727.8 L1028.1,1716.7 L1030.7,1698.0 L1033.3,1713.3 L1036.0,1729.6 L1039.5,1720.1 L1043.0,1708.6 L1046.5,1700.0 L1050.0,1694.5 L1053.5,1701.6 L1057.0,1708.6 L1060.5,1711.1 L1064.0,1715.6 L1066.9,1715.0 L1069.9,1717.4 L1072.8,1717.3 L1076.3,1711.0 L1079.8,1703.3 L1082.7,1714.1 L1085.6,1719.9 L1088.6,1726.1 L1091.2,1732.1 L1093.8,1734.2 L1096.4,1737.9 L1099.1,1736.6 L1101.7,1734.5 L1104.3,1726.9 L1107.0,1729.0 L1109.6,1722.6 L1113.1,1735.1 L1116.6,1740.1 L1119.2,1739.8 L1121.9,1733.7 L1124.5,1731.3 L1127.1,1726.1 L1130.6,1729.9 L1134.1,1738.4 L1137.6,1722.6 L1141.2,1701.5 L1144.7,1712.6 L1148.2,1722.6 L1150.8,1713.8 L1153.4,1705.1 L1156.1,1704.4 L1158.7,1694.5 L1162.2,1709.0 L1165.7,1715.6 L1169.2,1707.0 L1172.7,1705.0 L1176.2,1686.4 L1179.7,1663.0 L1183.2,1692.1 L1186.7,1722.6 L1190.2,1702.3 L1193.7,1687.5 L1197.3,1710.4 L1200.8,1736.6 L1204.3,1735.2 L1207.8,1729.6 L1211.3,1725.6 L1214.8,1715.6 L1217.7,1718.9 L1220.6,1730.5 L1223.5,1736.6 L1226.5,1729.5 L1229.4,1731.3 L1232.3,1726.1 L1235.8,1727.4 L1239.3,1731.3 L1242.8,1721.2 L1246.3,1705.0 L1249.3,1699.5 L1252.2,1686.4 L1255.1,1677.0 L1258.0,1675.7 L1260.9,1665.0 L1263.9,1661.2 L1266.8,1665.4 L1269.7,1677.2 L1272.6,1684.0 L1275.6,1695.5 L1278.5,1712.0 L1281.4,1729.6 L1284.0,1726.2 L1286.7,1725.2 L1289.3,1719.0 L1291.9,1719.1 L1295.4,1729.4 L1298.9,1747.1 L1301.6,1753.6 L1304.2,1752.6 L1306.8,1761.3 L1309.5,1761.2 L1312.5,1767.8 L1315.6,1767.2 L1318.7,1771.4 L1321.7,1775.2 L1325.2,1761.3 L1328.7,1747.1 L1331.7,1744.8 L1334.6,1740.9 L1337.5,1736.6 L1341.0,1717.8 L1344.5,1698.0 L1347.6,1696.4 L1350.7,1696.3 L1353.7,1690.2 L1356.8,1687.5 L1359.4,1675.1 L1362.0,1665.6 L1364.7,1649.9 L1367.3,1640.2 L1369.8,1642.8 L1372.4,1652.4 L1374.9,1653.0 L1377.5,1657.4 L1380.0,1661.2 L1383.1,1666.5 L1386.1,1679.0 L1389.2,1689.5 L1392.3,1698.0 L1395.2,1704.1 L1398.1,1718.8 L1401.0,1727.8 L1403.8,1729.9 L1406.6,1726.4 L1409.5,1732.0 L1412.3,1731.8 L1415.1,1733.1 L1418.6,1752.1 L1422.1,1768.2 L1424.9,1771.2 L1427.7,1778.2 L1430.5,1782.7 L1433.3,1781.2 L1436.1,1789.2 L1439.2,1776.9 L1442.2,1773.1 L1445.3,1766.6 L1448.4,1754.1 L1451.3,1741.6 L1454.2,1732.8 L1457.1,1722.6 L1459.9,1719.1 L1462.7,1712.7 L1465.6,1708.9 L1468.4,1704.3 L1471.2,1701.5 L1474.7,1685.6 L1478.2,1671.7 L1481.7,1666.4 L1485.2,1659.5 L1488.7,1666.6 L1492.2,1677.0 L1494.8,1690.0 L1497.5,1707.2 L1500.1,1715.3 L1502.7,1733.1 L1506.2,1744.2 L1509.7,1754.1 L1512.4,1740.2 L1515.0,1722.6 L1517.9,1731.6 L1520.8,1741.4 L1523.8,1754.1 L1527.3,1788.1 L1530.8,1817.3 L1533.4,1809.0 L1536.0,1802.5 L1538.7,1798.3 L1541.3,1792.7 L1543.9,1777.6 L1546.5,1756.2 L1549.2,1741.3 L1551.8,1726.1 L1554.4,1714.7 L1557.1,1708.6 L1559.7,1695.4 L1562.3,1685.8 L1565.0,1696.5 L1567.6,1698.9 L1570.2,1708.1 L1572.8,1717.3 L1576.4,1726.4 L1579.9,1733.1 L1582.5,1737.9 L1585.1,1736.2 L1587.7,1736.2 L1590.4,1740.1 L1593.9,1744.1 L1597.4,1754.1 L1600.9,1743.9 L1604.4,1733.1 L1607.9,1716.6 L1611.4,1705.0 L1614.9,1721.5 L1618.4,1733.1 L1621.9,1723.5 L1625.4,1708.6 L1628.1,1727.1 L1630.7,1750.6 L1633.3,1757.6 L1636.0,1768.2 L1638.6,1739.1 L1641.2,1705.0 L1643.8,1687.8 L1646.5,1668.2 L1649.1,1679.0 L1651.7,1683.7 L1654.4,1690.3 L1657.0,1701.5 L1659.6,1706.9 L1662.3,1717.9 L1664.9,1720.8 L1667.5,1729.6 L1671.0,1742.4 L1674.5,1757.6 L1678.0,1746.5 L1681.5,1736.6 L1684.3,1736.0 L1687.2,1735.9 L1690.0,1740.0 L1692.8,1733.9 L1695.6,1736.6 L1698.1,1732.6 L1700.6,1740.2 L1703.1,1739.6 L1705.6,1740.5 L1708.1,1736.1 L1710.6,1740.2 L1713.1,1736.6 L1715.9,1740.0 L1718.7,1734.4 L1721.5,1738.6 L1724.3,1739.3 L1727.1,1736.6 L1729.6,1739.7 L1732.1,1740.3 L1734.6,1740.2 L1737.1,1742.3 L1739.6,1743.2 L1742.2,1743.7 L1744.7,1748.9 L1747.3,1746.5 L1749.9,1741.0 L1752.5,1742.2 L1755.2,1736.6 L1758.0,1727.0 L1760.8,1727.9 L1763.6,1720.3 L1766.4,1716.2 L1769.2,1706.8 L1771.8,1717.4 L1774.5,1724.9 L1777.1,1729.8 L1779.7,1736.6 L1782.5,1731.3 L1785.3,1735.8 L1788.1,1729.8 L1790.9,1729.4 L1793.7,1729.6 L1796.8,1724.8 L1799.9,1717.5 L1802.9,1710.5 L1806.0,1705.0 L1809.5,1731.4 L1813.0,1750.6 L1816.0,1746.9 L1818.9,1740.0 L1821.8,1736.6 L1824.6,1735.3 L1827.4,1740.9 L1830.2,1738.5 L1833.0,1741.7 L1835.8,1740.1 L1838.6,1738.2 L1841.4,1736.3 L1844.2,1738.3 L1847.0,1739.8 L1849.8,1736.6 L1852.5,1727.0 L1855.1,1724.9 L1857.7,1718.9 L1860.4,1708.6 L1863.0,1708.4 L1865.6,1705.9 L1868.3,1696.7 L1870.9,1698.0 L1873.7,1698.4 L1876.5,1699.5 L1879.3,1692.3 L1882.1,1693.4 L1884.9,1694.5 L1887.5,1685.7 L1890.2,1680.7 L1892.8,1672.9 L1895.4,1666.5 L1898.1,1676.8 L1900.7,1689.7 L1903.3,1694.1 L1905.9,1708.6 L1908.6,1724.3 L1911.2,1744.1 L1913.8,1763.4 L1916.5,1785.7 L1919.1,1799.8 L1921.7,1824.6 L1924.4,1841.1 L1927.0,1855.8 L1929.8,1862.3 L1932.6,1875.5 L1935.4,1883.8 L1938.2,1893.6 L1941.0,1904.9 L1944.5,1891.4 L1948.0,1880.4 L1950.9,1885.0 L1953.9,1888.1 L1956.8,1890.9 L1959.7,1866.4 L1962.6,1841.7 L1965.6,1820.8 L1968.4,1777.3 L1971.3,1733.6 L1974.2,1695.0 L1977.1,1654.2 L1980.0,1610.4 L1983.5,1582.3 L1986.4,1574.9 L1989.4,1566.1 L1992.3,1563.0 L1995.8,1564.9 L1999.3,1571.8 L2002.8,1597.1 L2006.3,1624.4 L2009.8,1653.3 L2013.3,1680.5 L2016.2,1707.3 L2019.2,1728.6 L2022.1,1754.1 L2024.7,1773.2 L2027.3,1788.4 L2030.0,1803.6 L2032.6,1820.8 L2035.5,1839.6 L2038.4,1860.5 L2041.4,1880.4 L2044.4,1886.4 L2047.5,1888.5 L2050.6,1895.1 L2053.6,1897.9 L2056.3,1904.6 L2058.9,1911.9 L2061.5,1911.6 L2064.2,1915.4 L2067.1,1884.2 L2070.0,1853.9 L2072.9,1820.8 L2075.8,1794.0 L2078.8,1773.4 L2081.7,1750.6 L2085.2,1713.2 L2088.7,1677.0 L2091.3,1657.2 L2094.0,1631.4 L2096.9,1634.9 L2099.8,1630.4 L2102.7,1631.4 L2105.4,1616.2 L2108.0,1596.9 L2110.6,1574.3 L2113.2,1557.8 L2116.7,1582.0 L2120.3,1606.9 L2123.8,1600.4 L2127.3,1599.9 L2130.2,1617.6 L2133.1,1631.5 L2136.0,1645.4 L2138.7,1661.7 L2141.3,1674.1 L2143.9,1686.2 L2146.5,1698.0 L2149.2,1735.0 L2151.8,1768.2 L2154.4,1783.6 L2157.1,1794.8 L2159.7,1813.6 L2162.3,1827.8 L2165.0,1835.2 L2167.6,1847.7 L2170.2,1864.2 L2172.8,1873.4 L2175.5,1874.1 L2178.1,1878.9 L2180.7,1883.3 L2183.4,1890.9 L2186.3,1891.6 L2189.2,1883.6 L2192.1,1883.9 L2194.8,1885.3 L2197.4,1894.4 L2200.9,1846.3 L2204.4,1792.7 L2207.9,1763.4 L2211.4,1740.1 L2214.0,1714.8 L2216.7,1685.4 L2219.3,1658.7 L2221.9,1627.9 L2224.9,1610.5 L2227.8,1586.5 L2230.7,1564.8 L2233.3,1567.2 L2236.0,1564.8 L2239.5,1578.6 L2243.0,1599.9 L2245.6,1586.2 L2248.2,1568.3 L2251.7,1577.2 L2255.2,1585.8 L2258.8,1599.8 L2262.3,1610.4 L2265.2,1618.9 L2268.1,1635.7 L2271.0,1645.4 L2273.7,1675.2 L2276.3,1698.0 L2278.9,1715.6 L2281.5,1740.1 L2284.2,1730.8 L2286.8,1724.8 L2289.4,1719.1 L2292.1,1708.6 L2295.6,1703.0 L2299.1,1701.5 L2302.0,1685.0 L2304.9,1671.5 L2307.8,1659.5 L2311.3,1677.9 L2314.9,1694.5 L2317.9,1699.2 L2321.0,1698.9 L2324.1,1701.4 L2327.1,1705.0 L2329.8,1706.9 L2332.4,1709.1 L2335.0,1712.3 L2337.6,1715.6 L2341.2,1705.2 L2344.7,1701.5 L2347.3,1704.2 L2349.9,1710.6 L2352.5,1708.7 L2355.2,1712.1 L2358.2,1707.0 L2361.3,1695.3 L2364.4,1692.6 L2367.4,1684.0 L2370.4,1691.9 L2373.3,1697.1 L2376.2,1701.5 L2379.1,1713.4 L2382.1,1724.8 L2385.0,1736.6 L2387.9,1730.7 L2390.8,1725.8 L2393.7,1715.6 L2396.4,1711.0 L2399.0,1708.8 L2401.6,1712.3 L2404.3,1708.6 L2407.8,1706.6 L2411.3,1698.0 L2414.8,1708.7 L2418.3,1719.1 L2420.9,1714.2 L2423.5,1712.1 L2426.2,1703.4 L2428.8,1701.5 L2432.3,1678.6 L2435.8,1659.5 L2438.5,1664.1 L2441.1,1674.2 L2443.7,1679.0 L2446.3,1687.5 L2449.1,1691.3 L2451.9,1701.0 L2454.8,1709.0 L2457.6,1709.7 L2460.4,1717.3 L2463.0,1715.9 L2465.6,1710.5 L2468.3,1710.9 L2470.9,1705.0 L2473.5,1702.2 L2476.1,1696.2 L2478.8,1692.3 L2481.4,1691.0 L2484.2,1692.1 L2487.0,1700.7 L2489.8,1704.8 L2492.6,1708.0 L2495.4,1715.6 L2498.1,1728.5 L2500.7,1742.2 L2503.3,1759.8 L2505.9,1771.7 L2509.5,1758.3 L2513.0,1750.6 L2515.6,1745.8 L2518.2,1732.9 L2520.8,1725.1 L2523.5,1715.6 L2526.1,1720.6 L2528.7,1728.8 L2531.4,1733.9 L2534.0,1736.6 L2536.8,1735.0 L2539.6,1732.2 L2542.4,1732.1 L2545.2,1731.0 L2548.0,1726.1 L2550.7,1717.4 L2553.3,1712.2 L2555.9,1706.1 L2558.5,1694.5 L2561.2,1675.0 L2563.8,1653.8 L2566.4,1634.6 L2569.1,1617.4 L2572.6,1654.2 L2576.1,1687.5 L2580.0,1659.5 L2582.6,1683.7 L2585.3,1705.0 L2588.2,1718.1 L2591.1,1726.6 L2594.0,1733.1 L2596.7,1734.5 L2599.3,1737.6 L2601.9,1741.7 L2604.5,1747.1 L2607.3,1755.1 L2610.2,1769.8 L2613.0,1781.6 L2615.8,1792.4 L2618.6,1799.7 L2621.2,1782.0 L2623.8,1771.1 L2626.5,1750.9 L2629.1,1736.6 L2632.2,1730.7 L2635.2,1727.9 L2638.3,1717.5 L2641.4,1715.6 L2644.4,1705.3 L2647.5,1704.2 L2650.6,1692.9 L2653.6,1687.5 L2656.7,1668.0 L2659.8,1651.3 L2662.8,1633.7 L2665.9,1613.9 L2668.8,1629.8 L2671.7,1652.3 L2674.7,1673.5 L2677.3,1683.5 L2679.9,1694.4 L2682.6,1702.7 L2685.2,1715.6 L2687.8,1730.3 L2690.4,1747.3 L2693.1,1756.8 L2695.7,1771.7 L2698.3,1779.5 L2701.0,1783.5 L2703.6,1792.2 L2706.2,1801.5 L2709.7,1786.1 L2713.2,1768.2 L2716.7,1742.3 L2720.3,1722.6 L2723.1,1722.9 L2725.9,1720.2 L2728.7,1710.9 L2731.5,1714.9 L2734.3,1708.6 L2737.1,1699.1 L2739.9,1693.9 L2742.7,1685.4 L2745.5,1673.3 L2748.3,1666.5 L2751.2,1653.9 L2754.1,1639.7 L2757.1,1624.4 L2760.1,1642.6 L2763.2,1654.1 L2766.3,1673.8 L2769.3,1687.5 L2772.8,1703.5 L2776.4,1712.1 L2779.9,1731.0 L2783.4,1747.1 L2786.9,1749.2 L2790.4,1750.6 L2793.0,1761.6 L2795.6,1778.6 L2798.3,1791.5 L2800.9,1806.7 L2804.4,1803.2 L2807.9,1796.2 L2810.5,1783.6 L2813.2,1768.7 L2815.8,1751.6 L2818.4,1740.1 L2821.9,1725.5 L2825.4,1708.6 L2828.1,1700.8 L2830.7,1688.5 L2833.3,1685.4 L2836.0,1673.5 L2838.6,1661.6 L2841.2,1644.2 L2843.8,1637.5 L2846.5,1620.9 L2849.3,1632.8 L2852.1,1649.0 L2854.9,1666.8 L2857.7,1680.6 L2860.5,1694.5 L2863.1,1709.0 L2865.8,1723.8 L2868.4,1736.3 L2871.0,1750.6 L2873.9,1755.0 L2876.9,1759.7 L2879.8,1768.2 L2882.7,1754.2 L2885.6,1748.9 L2888.6,1736.6 L2891.2,1734.3 L2893.8,1728.2 L2896.4,1725.4 L2899.1,1719.1 L2901.9,1717.2 L2904.7,1715.8 L2907.5,1716.0 L2910.3,1719.2 L2913.1,1715.6 L2915.7,1717.2 L2918.4,1726.1 L2921.0,1729.3 L2923.6,1736.6 L2927.1,1744.0 L2930.6,1747.1 L2933.3,1733.7 L2935.9,1721.2 L2938.5,1709.5 L2941.2,1698.0 L2944.7,1707.1 L2948.2,1715.6 L2951.7,1725.6 L2955.2,1731.3 L2958.1,1715.6 L2961.0,1704.9 L2963.9,1687.5 L2967.0,1687.9 L2970.1,1692.7 L2973.1,1694.8 L2976.2,1701.5 L2979.3,1702.0 L2982.3,1710.8 L2985.4,1713.9 L2988.5,1715.6 L2991.1,1712.2 L2993.7,1711.3 L2996.4,1712.3 L2999.0,1712.1 L3001.6,1720.1 L3004.3,1726.9 L3006.9,1732.5 L3009.5,1736.6 L3012.1,1726.0 L3014.8,1711.1 L3017.4,1701.8 L3020.0,1691.2 L3022.6,1687.0 L3025.3,1687.7 L3028.2,1691.4 L3031.1,1695.3 L3034.0,1698.2 L3037.5,1690.6 L3041.1,1687.7 L3044.6,1678.7 L3048.1,1673.7 L3051.6,1691.7 L3055.1,1705.3 L3058.6,1696.2 L3062.1,1694.7 L3065.6,1704.2 L3069.1,1708.8 L3072.6,1710.1 L3076.1,1705.3 L3079.6,1715.9 L3083.2,1719.3 L3086.7,1727.1 L3090.2,1736.8 L3092.8,1731.1 L3095.4,1725.2 L3098.1,1719.5 L3100.7,1712.3 L3104.2,1728.4 L3107.7,1736.8 L3111.2,1748.9 L3114.7,1757.9 L3118.2,1731.7 L3121.8,1708.8 L3124.4,1717.8 L3127.0,1720.9 L3129.6,1728.0 L3132.3,1733.3 L3134.9,1730.8 L3137.5,1720.6 L3140.2,1722.3 L3142.8,1715.8 L3146.3,1705.3 L3149.8,1718.8 L3153.3,1729.8 L3156.0,1736.8 L3158.6,1744.0 L3161.2,1750.6 L3163.9,1757.9 L3166.5,1746.7 L3169.1,1740.6 L3171.8,1727.9 L3174.4,1722.8 L3177.9,1712.3 L3181.4,1701.8 L3184.9,1702.9 L3188.4,1701.8 L3191.9,1699.6 L3195.4,1698.2 L3198.9,1693.5 L3202.5,1687.7 L3206.0,1698.4 L3209.5,1701.8 L3212.1,1704.0 L3214.7,1697.1 L3217.4,1701.5 L3220.0,1698.2 L3223.5,1694.0 L3227.0,1687.7 L3230.5,1673.6 L3234.0,1666.7 L3237.5,1644.5 L3241.1,1624.6 L3243.7,1606.6 L3246.3,1589.6 L3248.9,1577.5 L3251.6,1561.4 L3255.1,1564.8 L3258.6,1561.4 L3262.1,1596.5 L3265.6,1652.6 L3269.1,1698.2 L3271.8,1696.8 L3274.4,1698.2" fill="none" stroke="#ff0000" stroke-width="3.8" stroke-linejoin="round"/>
<path d="M790.5,1698.0 L793.1,1699.1 L795.8,1700.1 L798.4,1700.8 L801.0,1699.8 L803.7,1702.0 L806.3,1701.0 L808.9,1701.9 L811.6,1699.8 L814.2,1697.0 L816.8,1698.7 L819.4,1700.7 L822.1,1698.0 L824.7,1699.2 L827.3,1700.9 L830.0,1697.4 L832.6,1699.8 L835.2,1698.8 L837.9,1698.0 L841.4,1703.8 L844.9,1712.1 L847.8,1718.7 L850.7,1725.3 L853.6,1731.3 L856.6,1728.9 L859.5,1729.9 L862.4,1731.3 L865.3,1728.5 L868.2,1729.9 L871.2,1726.1 L874.7,1731.8 L878.2,1734.9 L881.7,1738.4 L885.2,1745.4 L888.7,1753.0 L892.2,1757.6 L894.8,1759.3 L897.5,1764.7 L900.1,1753.8 L902.7,1741.9 L906.2,1724.2 L909.7,1710.3 L913.2,1687.5 L916.7,1684.1 L920.3,1685.8 L922.9,1699.0 L925.5,1708.6 L928.4,1715.9 L931.4,1724.7 L934.3,1734.9 L936.9,1739.0 L939.5,1740.2 L942.2,1739.1 L944.8,1741.9 L948.3,1760.0 L951.8,1773.4 L954.7,1761.3 L957.7,1749.8 L960.6,1736.6 L964.1,1747.4 L967.6,1761.2 L970.2,1773.9 L972.8,1782.2 L976.4,1774.4 L979.9,1764.7 L983.4,1753.0 L986.9,1736.6 L990.4,1734.2 L993.9,1727.8 L996.5,1733.4 L999.1,1740.3 L1001.8,1745.9 L1004.4,1754.1 L1007.9,1750.6 L1011.4,1750.6 L1014.0,1743.6 L1016.7,1740.0 L1019.3,1736.7 L1021.9,1731.3 L1025.4,1734.1 L1028.9,1741.9 L1032.5,1733.1 L1036.0,1722.6 L1039.5,1694.6 L1043.0,1668.2 L1046.5,1683.1 L1050.0,1699.8 L1053.5,1718.0 L1057.0,1733.1 L1060.5,1749.7 L1064.0,1766.4 L1067.5,1761.1 L1071.0,1757.6 L1073.7,1757.1 L1076.3,1757.8 L1078.9,1754.1 L1081.5,1755.9 L1084.2,1756.1 L1086.8,1749.1 L1089.4,1750.6 L1092.1,1747.1 L1095.6,1748.0 L1099.1,1745.4 L1102.0,1751.1 L1104.9,1763.2 L1107.8,1769.9 L1110.8,1764.0 L1113.7,1759.8 L1116.6,1754.1 L1119.2,1751.7 L1121.9,1751.9 L1124.5,1752.5 L1127.1,1754.1 L1130.6,1760.8 L1134.1,1762.9 L1137.1,1753.8 L1140.0,1749.0 L1142.9,1740.1 L1145.5,1740.1 L1148.2,1737.9 L1150.8,1732.8 L1153.4,1731.3 L1156.3,1725.4 L1159.3,1721.0 L1162.2,1715.6 L1165.7,1699.4 L1169.2,1680.5 L1171.8,1669.8 L1174.5,1663.0 L1177.1,1681.7 L1179.7,1698.0 L1182.3,1707.4 L1185.0,1715.6 L1187.6,1719.4 L1190.2,1729.6 L1192.9,1741.0 L1195.5,1746.0 L1198.1,1756.4 L1200.8,1766.4 L1203.7,1770.5 L1206.6,1775.5 L1209.5,1776.9 L1212.4,1772.0 L1215.4,1770.9 L1218.3,1764.7 L1221.8,1773.6 L1225.3,1782.2 L1228.8,1772.5 L1232.3,1764.7 L1234.9,1758.9 L1237.6,1753.4 L1240.2,1748.1 L1242.8,1745.4 L1245.5,1742.7 L1248.1,1744.6 L1250.7,1745.2 L1253.4,1741.9 L1256.0,1742.4 L1258.6,1744.0 L1261.2,1750.9 L1263.9,1750.6 L1266.8,1756.1 L1269.7,1760.7 L1272.6,1766.4 L1275.7,1761.2 L1278.8,1759.0 L1281.8,1756.2 L1284.9,1750.6 L1287.5,1749.5 L1290.2,1748.5 L1292.8,1745.8 L1295.4,1747.1 L1298.1,1746.1 L1300.7,1738.7 L1303.3,1737.9 L1305.9,1734.9 L1309.5,1731.3 L1313.0,1724.3 L1315.6,1722.0 L1318.2,1724.6 L1320.8,1725.3 L1323.5,1722.6 L1327.0,1733.8 L1330.5,1743.6 L1333.1,1746.8 L1335.8,1745.2 L1338.4,1748.6 L1341.0,1750.6 L1343.6,1755.5 L1346.3,1765.5 L1348.9,1769.3 L1351.5,1776.9 L1354.2,1772.7 L1356.8,1771.5 L1359.4,1766.9 L1362.0,1761.2 L1364.7,1763.5 L1367.3,1760.9 L1369.9,1761.1 L1372.6,1761.2 L1376.3,1760.5 L1380.0,1757.6 L1382.9,1756.4 L1385.8,1754.3 L1388.8,1754.1 L1391.7,1747.8 L1394.6,1740.7 L1397.5,1736.6 L1400.2,1734.2 L1402.8,1735.5 L1405.4,1733.6 L1408.1,1729.6 L1411.6,1730.2 L1415.1,1729.6 L1418.0,1722.0 L1420.9,1713.6 L1423.8,1706.8 L1426.8,1708.3 L1429.7,1712.7 L1432.6,1717.3 L1435.5,1717.0 L1438.4,1715.7 L1441.4,1712.1 L1444.3,1719.5 L1447.2,1729.9 L1450.1,1736.6 L1452.8,1750.3 L1455.4,1761.2 L1458.3,1758.0 L1461.2,1753.8 L1464.2,1748.9 L1467.1,1751.3 L1470.0,1750.5 L1472.9,1752.4 L1476.4,1765.7 L1479.9,1776.9 L1482.9,1769.4 L1485.8,1764.0 L1488.7,1757.6 L1491.3,1757.2 L1494.0,1755.1 L1496.6,1751.4 L1499.2,1750.6 L1502.7,1742.3 L1506.2,1729.6 L1509.7,1751.4 L1513.2,1771.7 L1515.9,1770.3 L1518.5,1765.7 L1521.1,1766.6 L1523.8,1764.7 L1526.7,1757.6 L1529.6,1753.8 L1532.5,1747.1 L1535.4,1755.1 L1538.4,1765.1 L1541.3,1771.7 L1543.9,1774.2 L1546.5,1776.7 L1549.2,1776.2 L1551.8,1778.7 L1555.3,1784.7 L1558.8,1789.2 L1561.5,1787.3 L1564.1,1784.7 L1566.7,1779.2 L1569.3,1776.9 L1572.1,1772.3 L1575.0,1766.2 L1577.8,1758.9 L1580.6,1754.1 L1583.4,1745.4 L1586.4,1748.1 L1589.5,1746.3 L1592.6,1746.8 L1595.6,1747.1 L1598.7,1742.8 L1601.8,1743.5 L1604.8,1741.4 L1607.9,1736.6 L1611.4,1731.2 L1614.9,1726.1 L1617.6,1725.7 L1620.2,1724.6 L1622.8,1723.3 L1625.4,1720.8 L1628.1,1719.6 L1630.7,1723.1 L1633.3,1722.5 L1636.0,1722.6 L1638.6,1736.6 L1641.2,1748.5 L1643.8,1762.6 L1646.5,1775.2 L1649.3,1774.8 L1652.1,1772.4 L1654.9,1771.0 L1657.7,1765.8 L1660.5,1766.4 L1663.1,1766.9 L1665.8,1770.5 L1668.4,1773.7 L1671.0,1775.2 L1673.9,1782.0 L1676.9,1792.5 L1679.8,1799.7 L1682.7,1795.7 L1685.6,1788.1 L1688.6,1785.7 L1691.4,1784.1 L1694.2,1781.5 L1697.0,1779.3 L1699.8,1778.3 L1702.6,1778.7 L1705.4,1774.3 L1708.2,1770.1 L1711.0,1766.6 L1713.8,1762.3 L1716.6,1761.2 L1719.4,1755.4 L1722.2,1749.3 L1725.0,1744.9 L1727.8,1739.2 L1730.6,1733.1 L1733.3,1727.8 L1735.9,1727.2 L1738.5,1718.8 L1741.2,1717.3 L1743.8,1720.8 L1746.4,1724.1 L1749.0,1728.7 L1751.7,1733.1 L1754.6,1740.5 L1757.5,1753.5 L1760.4,1761.2 L1763.1,1754.4 L1765.7,1748.9 L1768.3,1750.5 L1771.0,1757.3 L1773.6,1758.7 L1776.2,1764.7 L1778.8,1770.1 L1781.5,1774.4 L1784.1,1780.8 L1786.7,1785.7 L1789.5,1784.1 L1792.3,1779.6 L1795.1,1773.7 L1798.0,1771.8 L1800.8,1766.4 L1803.6,1763.3 L1806.4,1758.0 L1809.2,1753.0 L1812.0,1751.5 L1814.8,1747.1 L1817.4,1741.3 L1820.0,1737.1 L1822.7,1731.1 L1825.3,1722.6 L1828.8,1712.6 L1832.3,1701.5 L1834.8,1700.8 L1837.3,1703.5 L1839.8,1699.0 L1842.3,1699.6 L1844.8,1701.9 L1847.3,1702.1 L1849.8,1701.5 L1853.4,1710.3 L1856.9,1722.6 L1859.5,1732.9 L1862.1,1743.8 L1864.7,1750.9 L1867.4,1761.2 L1870.2,1763.6 L1873.0,1765.4 L1875.8,1768.5 L1878.6,1774.7 L1881.4,1775.2 L1884.9,1771.1 L1888.4,1768.2 L1891.0,1771.8 L1893.7,1772.9 L1896.3,1772.6 L1898.9,1773.4 L1901.6,1766.5 L1904.2,1764.4 L1906.8,1756.3 L1909.5,1750.6 L1912.1,1744.1 L1914.7,1737.5 L1917.3,1734.6 L1920.0,1726.1 L1922.6,1731.3 L1925.2,1735.5 L1927.9,1741.8 L1930.5,1747.1 L1933.1,1746.1 L1935.8,1749.5 L1938.4,1749.5 L1941.0,1750.6 L1944.5,1742.6 L1948.0,1736.6 L1951.5,1746.8 L1955.0,1754.1 L1957.7,1747.9 L1960.3,1735.9 L1962.9,1730.6 L1965.6,1722.6 L1968.4,1723.6 L1971.3,1729.0 L1974.2,1730.3 L1977.1,1729.7 L1980.0,1733.1 L1982.9,1736.6 L1985.8,1740.7 L1988.8,1747.1 L1991.7,1746.1 L1994.6,1739.1 L1997.5,1736.6 L2000.3,1737.5 L2003.1,1737.2 L2005.9,1738.4 L2008.8,1738.5 L2011.6,1738.4 L2015.1,1741.3 L2018.6,1741.9 L2022.1,1730.3 L2025.6,1722.6 L2028.4,1722.5 L2031.2,1718.8 L2034.0,1718.5 L2036.8,1716.2 L2039.6,1715.6 L2042.2,1714.1 L2044.9,1714.8 L2047.5,1714.1 L2050.1,1713.8 L2052.9,1712.8 L2055.7,1714.3 L2058.5,1713.2 L2061.3,1710.1 L2064.2,1712.1 L2067.7,1716.1 L2071.2,1722.6 L2073.8,1725.0 L2076.4,1729.9 L2079.1,1732.4 L2081.7,1733.1 L2084.3,1736.8 L2086.9,1737.7 L2089.6,1745.0 L2092.2,1747.1 L2095.1,1745.0 L2098.0,1744.0 L2101.0,1741.9 L2103.6,1746.9 L2106.2,1750.4 L2108.9,1753.6 L2111.5,1757.6 L2115.0,1749.2 L2118.5,1736.6 L2121.1,1732.5 L2123.8,1729.6 L2126.4,1729.9 L2129.0,1733.1 L2131.6,1730.7 L2134.3,1733.1 L2136.9,1732.5 L2139.5,1735.6 L2142.2,1732.2 L2144.8,1734.9 L2147.6,1733.4 L2150.4,1729.5 L2153.2,1725.0 L2156.0,1721.2 L2158.8,1719.1 L2161.6,1718.4 L2164.4,1716.9 L2167.2,1711.0 L2170.0,1710.6 L2172.8,1708.6 L2175.7,1707.0 L2178.5,1705.0 L2181.3,1702.4 L2184.1,1699.8 L2186.9,1699.8 L2189.9,1702.0 L2193.0,1704.9 L2196.1,1702.9 L2199.1,1706.8 L2202.1,1714.2 L2205.0,1725.9 L2207.9,1733.1 L2210.7,1740.9 L2213.5,1746.5 L2216.3,1749.7 L2219.1,1759.5 L2221.9,1764.7 L2224.9,1761.2 L2227.8,1755.5 L2230.7,1747.1 L2234.2,1737.6 L2237.7,1726.1 L2240.6,1725.0 L2243.6,1730.1 L2246.5,1729.6 L2249.1,1729.1 L2251.7,1732.1 L2254.4,1734.5 L2257.0,1733.1 L2259.6,1737.2 L2262.3,1737.4 L2264.9,1741.3 L2267.5,1745.4 L2270.3,1744.7 L2273.1,1738.0 L2275.9,1737.5 L2278.7,1733.7 L2281.5,1731.3 L2284.3,1732.5 L2287.2,1737.6 L2290.0,1737.5 L2292.8,1740.6 L2295.6,1745.4 L2298.4,1748.3 L2301.2,1750.2 L2304.0,1753.7 L2306.8,1759.8 L2309.6,1762.9 L2312.4,1761.0 L2315.2,1758.5 L2318.0,1751.6 L2320.8,1749.9 L2323.6,1747.1 L2326.4,1744.4 L2329.2,1744.1 L2332.0,1741.8 L2334.8,1742.3 L2337.6,1738.4 L2340.4,1738.4 L2343.3,1737.5 L2346.1,1741.4 L2348.9,1739.4 L2351.7,1741.9 L2354.3,1739.5 L2356.9,1735.8 L2359.6,1734.7 L2362.2,1729.6 L2364.7,1728.6 L2367.2,1727.7 L2369.7,1724.7 L2372.2,1724.8 L2374.7,1722.1 L2377.2,1723.3 L2379.7,1720.8 L2382.5,1725.8 L2385.3,1728.8 L2388.1,1734.2 L2390.9,1739.8 L2393.7,1745.4 L2396.8,1752.3 L2399.9,1755.2 L2402.9,1763.5 L2406.0,1768.2 L2409.1,1768.1 L2412.2,1764.3 L2415.2,1766.4 L2418.3,1764.7 L2421.1,1759.8 L2423.9,1757.2 L2426.7,1756.7 L2429.5,1752.1 L2432.3,1750.6 L2435.1,1755.3 L2437.9,1756.1 L2440.7,1758.2 L2443.5,1763.3 L2446.3,1764.7 L2449.1,1760.2 L2451.9,1761.6 L2454.8,1756.1 L2457.6,1754.5 L2460.4,1754.1 L2463.2,1754.6 L2466.0,1751.5 L2468.8,1747.5 L2471.6,1745.2 L2474.4,1745.4 L2477.2,1749.5 L2480.0,1749.7 L2482.8,1752.2 L2485.6,1750.6 L2488.4,1754.1 L2491.2,1754.1 L2494.0,1752.0 L2496.8,1750.7 L2499.6,1750.5 L2502.4,1750.6 L2505.1,1741.6 L2507.7,1731.3 L2510.6,1741.1 L2513.5,1751.8 L2516.5,1762.9 L2519.3,1757.9 L2522.1,1758.2 L2524.9,1754.2 L2527.7,1751.8 L2530.5,1747.1 L2533.1,1746.6 L2535.8,1748.4 L2538.4,1746.6 L2541.0,1746.7 L2543.6,1746.4 L2546.3,1747.0 L2548.9,1745.1 L2551.5,1745.4 L2554.0,1743.4 L2556.5,1743.0 L2559.0,1743.9 L2561.5,1743.1 L2564.1,1747.3 L2566.6,1745.3 L2569.1,1745.4 L2571.8,1750.6 L2574.5,1750.8 L2577.3,1757.1 L2580.0,1761.2 L2582.8,1762.7 L2585.6,1761.0 L2588.4,1759.7 L2591.2,1759.6 L2594.0,1759.4 L2596.7,1756.1 L2599.3,1755.0 L2601.9,1753.7 L2604.5,1754.1 L2607.6,1746.5 L2610.7,1739.5 L2613.7,1735.0 L2616.8,1726.1 L2619.7,1739.5 L2622.7,1755.2 L2625.6,1771.7 L2629.1,1763.5 L2632.6,1757.6 L2635.4,1755.3 L2638.2,1755.2 L2641.0,1754.2 L2643.8,1754.7 L2646.6,1754.1 L2649.7,1750.0 L2652.8,1752.8 L2655.8,1748.2 L2658.9,1747.1 L2661.4,1753.8 L2663.9,1757.1 L2666.4,1761.5 L2668.9,1765.0 L2671.4,1771.9 L2673.9,1772.3 L2676.4,1778.7 L2679.3,1778.4 L2682.3,1775.3 L2685.2,1775.2 L2687.8,1766.4 L2690.4,1757.0 L2693.1,1744.6 L2695.7,1736.6 L2698.3,1734.2 L2701.0,1732.5 L2703.6,1732.6 L2706.2,1733.1 L2709.0,1738.0 L2711.8,1746.6 L2714.6,1756.5 L2717.4,1760.5 L2720.3,1768.2 L2723.1,1765.1 L2725.9,1763.8 L2728.7,1760.8 L2731.5,1760.9 L2734.3,1757.6 L2736.8,1757.5 L2739.3,1753.5 L2741.8,1752.6 L2744.3,1753.5 L2746.8,1753.6 L2749.3,1750.9 L2751.8,1748.9 L2754.4,1754.2 L2757.1,1762.7 L2759.7,1763.5 L2762.3,1771.7 L2765.1,1770.2 L2767.9,1774.5 L2770.7,1773.3 L2773.5,1772.2 L2776.4,1775.2 L2779.0,1770.2 L2781.6,1767.1 L2784.2,1759.5 L2786.9,1754.1 L2789.5,1749.9 L2792.1,1745.1 L2794.8,1741.5 L2797.4,1740.1 L2800.0,1749.1 L2802.7,1754.1 L2805.3,1763.3 L2807.9,1768.2 L2810.7,1769.4 L2813.5,1773.9 L2816.3,1776.4 L2819.1,1781.7 L2821.9,1785.7 L2824.4,1781.0 L2826.9,1779.5 L2829.4,1777.7 L2832.0,1774.7 L2834.5,1770.9 L2837.0,1768.4 L2839.5,1768.2 L2842.3,1772.3 L2845.1,1770.1 L2847.9,1773.5 L2850.7,1774.7 L2853.5,1776.9 L2856.3,1775.3 L2859.1,1771.3 L2861.9,1770.7 L2864.7,1768.0 L2867.5,1768.2 L2870.1,1765.7 L2872.8,1765.0 L2875.4,1760.8 L2878.0,1757.6 L2880.7,1761.2 L2883.3,1759.7 L2885.9,1760.5 L2888.6,1764.7 L2891.2,1757.8 L2893.8,1750.6 L2896.4,1744.0 L2899.1,1736.6 L2901.7,1720.2 L2904.3,1705.7 L2907.0,1690.4 L2909.6,1673.5 L2912.2,1668.5 L2914.9,1658.5 L2917.5,1652.2 L2920.1,1645.4 L2922.7,1655.8 L2925.4,1661.6 L2928.0,1669.8 L2930.6,1680.5 L2933.3,1701.5 L2935.9,1722.3 L2938.5,1747.6 L2941.2,1768.2 L2943.8,1776.8 L2946.4,1781.3 L2949.0,1787.3 L2951.7,1796.2 L2954.7,1801.1 L2957.8,1809.0 L2960.9,1815.2 L2963.9,1824.3 L2967.0,1809.9 L2970.1,1796.6 L2973.1,1780.9 L2976.2,1768.2 L2978.8,1751.1 L2981.5,1739.4 L2984.1,1721.2 L2986.7,1708.6 L2989.5,1697.2 L2992.3,1687.9 L2995.1,1678.5 L2998.0,1667.3 L3000.8,1659.5 L3003.4,1671.3 L3006.0,1683.1 L3008.6,1697.5 L3011.3,1708.6 L3014.2,1730.0 L3017.1,1752.8 L3020.0,1771.9 L3023.5,1792.0 L3027.0,1810.5 L3029.6,1818.8 L3032.3,1824.9 L3034.9,1831.3 L3037.5,1838.6 L3040.2,1840.2 L3042.8,1839.4 L3045.4,1840.9 L3048.1,1838.6 L3050.7,1822.2 L3053.3,1804.5 L3056.0,1784.8 L3058.6,1768.4 L3061.2,1755.1 L3063.9,1738.0 L3066.5,1721.8 L3069.1,1708.8 L3071.9,1697.5 L3074.7,1688.9 L3077.5,1680.2 L3080.4,1673.2 L3083.2,1663.2 L3086.7,1679.6 L3090.2,1698.2 L3092.8,1718.0 L3095.4,1743.4 L3098.1,1764.3 L3100.7,1786.0 L3104.2,1804.7 L3107.7,1828.1 L3110.5,1827.9 L3113.3,1830.4 L3116.1,1833.7 L3118.9,1838.3 L3121.8,1838.6 L3124.4,1827.7 L3127.0,1812.8 L3129.6,1797.8 L3132.3,1786.0 L3134.9,1772.5 L3137.5,1759.0 L3140.2,1745.6 L3142.8,1733.3 L3145.6,1719.7 L3148.4,1711.3 L3151.2,1701.3 L3154.0,1689.6 L3156.8,1677.2 L3160.4,1676.9 L3163.9,1680.7 L3166.5,1698.4 L3169.1,1714.1 L3171.8,1734.4 L3174.4,1750.9 L3177.9,1785.7 L3181.4,1821.1 L3184.0,1832.9 L3186.7,1841.8 L3189.3,1848.1 L3191.9,1859.6 L3194.6,1857.0 L3197.2,1858.2 L3199.8,1854.2 L3202.5,1852.6 L3206.0,1827.7 L3209.5,1803.5 L3212.1,1789.2 L3214.7,1776.8 L3217.4,1763.6 L3220.0,1747.4 L3222.6,1737.9 L3225.3,1730.4 L3227.9,1718.9 L3230.5,1708.8 L3233.2,1717.3 L3235.8,1731.4 L3238.4,1739.9 L3241.1,1750.9 L3243.7,1768.8 L3246.3,1793.6 L3248.9,1809.1 L3251.6,1831.6 L3255.1,1817.9 L3258.6,1803.5 L3262.1,1773.6 L3265.6,1743.9 L3269.1,1726.5 L3272.6,1705.3" fill="none" stroke="#0000ff" stroke-width="3.8" stroke-linejoin="round"/>
<path d="M790.5,1559.5 L793.1,1555.7 L795.8,1556.0 L798.4,1555.8 L801.0,1562.0 L804.5,1561.7 L808.1,1563.0 L811.6,1558.5 L815.1,1559.5 L817.7,1557.3 L820.3,1562.0 L823.8,1564.0 L827.3,1567.6 L830.0,1566.9 L832.6,1559.5 L836.1,1554.9 L839.6,1545.5 L842.2,1554.6 L844.9,1559.5 L847.5,1550.3 L850.1,1545.5 L852.8,1551.9 L855.4,1557.8 L858.3,1547.8 L861.2,1538.8 L864.2,1533.2 L866.8,1539.7 L869.4,1552.5 L872.9,1543.2 L876.4,1538.5 L879.1,1536.7 L881.7,1528.0 L884.3,1550.8 L886.9,1568.3 L889.6,1574.3 L892.2,1575.3 L894.8,1586.5 L897.5,1592.8 L900.1,1578.1 L902.7,1568.3 L906.2,1581.7 L909.7,1598.1 L912.4,1584.2 L915.0,1568.3 L918.5,1557.9 L922.0,1543.8 L924.6,1558.9 L927.3,1568.3 L930.8,1560.8 L934.3,1547.3 L936.9,1529.1 L939.5,1517.5 L942.2,1529.7 L944.8,1540.3 L948.3,1539.9 L951.8,1536.7 L954.4,1554.3 L957.1,1571.8 L959.7,1555.2 L962.3,1543.8 L965.8,1538.3 L969.3,1533.2 L972.0,1558.9 L974.6,1591.1 L977.2,1563.9 L979.9,1529.7 L982.5,1537.9 L985.1,1540.3 L988.6,1566.9 L992.1,1592.8 L995.6,1562.3 L999.1,1535.0 L1002.7,1540.9 L1006.2,1540.3 L1008.8,1544.3 L1011.4,1547.3 L1014.9,1574.0 L1018.4,1594.6 L1021.9,1580.7 L1025.4,1561.3 L1028.9,1560.5 L1032.5,1559.5 L1035.1,1565.9 L1037.7,1573.6 L1040.3,1556.8 L1043.0,1538.5 L1046.5,1544.1 L1050.0,1550.8 L1053.5,1555.1 L1057.0,1564.8 L1060.5,1559.7 L1064.0,1557.8 L1067.5,1566.4 L1071.0,1570.1 L1074.5,1553.3 L1078.0,1543.8 L1081.5,1545.4 L1085.0,1554.3 L1088.6,1553.5 L1092.1,1550.8 L1095.6,1553.4 L1099.1,1559.5 L1102.6,1554.6 L1106.1,1549.0 L1109.6,1553.2 L1113.1,1557.8 L1116.6,1547.8 L1120.1,1540.3 L1123.6,1551.2 L1127.1,1554.3 L1130.6,1535.0 L1134.1,1553.6 L1137.6,1577.1 L1141.2,1567.6 L1144.7,1559.5 L1147.6,1551.9 L1150.5,1550.1 L1153.4,1543.8 L1156.9,1554.2 L1160.4,1568.3 L1163.4,1562.5 L1166.3,1560.9 L1169.2,1554.3 L1172.1,1549.3 L1175.0,1547.7 L1178.0,1543.8 L1180.6,1567.2 L1183.2,1584.1 L1186.7,1555.5 L1190.2,1533.2 L1193.7,1543.8 L1197.3,1561.3 L1200.2,1562.6 L1203.1,1570.4 L1206.0,1571.8 L1208.9,1568.1 L1211.9,1560.4 L1214.8,1557.8 L1217.7,1550.6 L1220.6,1543.5 L1223.5,1540.3 L1226.5,1541.1 L1229.4,1538.9 L1232.3,1543.8 L1235.8,1547.1 L1239.3,1547.3 L1242.2,1557.4 L1245.2,1564.9 L1248.1,1568.3 L1251.0,1571.9 L1253.9,1575.5 L1256.9,1573.6 L1260.4,1562.7 L1263.9,1559.5 L1266.5,1558.7 L1269.1,1565.0 L1271.8,1564.4 L1274.4,1563.0 L1277.0,1556.6 L1279.6,1555.2 L1282.3,1546.9 L1284.9,1540.3 L1287.5,1545.4 L1290.2,1543.9 L1292.8,1545.7 L1295.4,1550.8 L1298.1,1552.1 L1300.7,1551.4 L1303.3,1555.1 L1305.9,1557.8 L1308.6,1558.0 L1311.2,1549.4 L1313.8,1543.3 L1316.5,1543.8 L1319.1,1545.4 L1321.7,1551.6 L1324.4,1561.8 L1327.0,1564.8 L1329.6,1557.6 L1332.2,1550.8 L1334.9,1543.2 L1337.5,1540.3 L1340.1,1551.1 L1342.8,1553.7 L1345.4,1559.0 L1348.0,1568.3 L1350.7,1563.5 L1353.3,1562.1 L1355.9,1561.7 L1358.5,1563.0 L1361.2,1564.9 L1363.8,1561.1 L1366.4,1560.7 L1369.1,1564.8 L1371.8,1563.8 L1374.5,1561.0 L1377.3,1566.1 L1380.0,1561.3 L1383.5,1556.5 L1387.0,1557.8 L1389.6,1551.9 L1392.3,1547.7 L1394.9,1538.7 L1397.5,1533.2 L1400.2,1545.9 L1402.8,1550.8 L1405.7,1550.6 L1408.6,1548.7 L1411.6,1550.8 L1415.1,1559.7 L1418.6,1570.1 L1422.1,1547.1 L1425.6,1531.5 L1429.1,1540.5 L1432.6,1550.8 L1435.5,1553.4 L1438.4,1563.2 L1441.4,1564.8 L1444.3,1556.3 L1447.2,1542.6 L1450.1,1531.5 L1453.6,1540.9 L1457.1,1557.8 L1460.6,1563.7 L1464.2,1573.6 L1466.8,1559.2 L1469.4,1546.7 L1472.0,1534.6 L1474.7,1524.5 L1477.3,1553.7 L1479.9,1577.1 L1483.4,1555.8 L1486.9,1540.3 L1489.9,1543.1 L1492.8,1556.5 L1495.7,1559.5 L1498.3,1571.5 L1501.0,1582.3 L1504.5,1554.7 L1508.0,1519.2 L1512.5,1587.6 L1515.3,1574.5 L1518.1,1566.3 L1521.0,1552.0 L1523.8,1538.5 L1526.4,1554.0 L1529.0,1566.8 L1531.6,1577.9 L1534.3,1591.1 L1536.9,1584.8 L1539.5,1582.6 L1542.2,1584.9 L1544.8,1578.8 L1548.3,1561.0 L1551.8,1536.7 L1555.3,1522.6 L1558.8,1501.7 L1561.5,1505.6 L1564.1,1512.2 L1566.7,1499.4 L1569.3,1484.2 L1572.8,1512.8 L1576.4,1536.7 L1579.9,1527.4 L1583.4,1515.7 L1586.0,1535.8 L1588.6,1550.8 L1592.1,1537.8 L1595.6,1524.5 L1599.1,1554.6 L1602.7,1582.3 L1605.6,1596.7 L1608.5,1606.2 L1611.4,1620.9 L1614.0,1624.3 L1616.7,1624.5 L1619.3,1617.5 L1621.9,1620.9 L1625.4,1652.7 L1628.9,1677.0 L1632.5,1661.4 L1636.0,1638.4 L1638.6,1615.2 L1641.2,1585.7 L1643.8,1568.0 L1646.5,1540.3 L1650.0,1518.0 L1653.5,1501.7 L1657.0,1526.5 L1660.5,1543.8 L1663.1,1551.2 L1665.8,1556.0 L1669.3,1535.0 L1672.8,1521.0 L1676.3,1512.2 L1679.8,1508.7 L1683.3,1487.9 L1686.8,1464.9 L1689.7,1480.0 L1692.6,1496.1 L1695.6,1508.7 L1698.5,1523.8 L1701.4,1529.8 L1704.3,1543.8 L1707.4,1544.2 L1710.5,1555.9 L1713.5,1553.0 L1716.6,1561.3 L1719.2,1571.3 L1721.9,1572.2 L1724.5,1584.8 L1727.1,1589.3 L1729.9,1609.8 L1732.7,1628.8 L1735.5,1644.4 L1738.3,1665.3 L1741.2,1680.5 L1743.8,1657.1 L1746.4,1639.8 L1749.0,1616.0 L1751.7,1596.4 L1754.3,1587.2 L1756.9,1574.0 L1759.6,1559.3 L1762.2,1547.3 L1765.7,1531.7 L1769.2,1515.7 L1772.1,1520.1 L1775.0,1528.3 L1778.0,1540.3 L1780.6,1537.5 L1783.2,1533.2 L1785.9,1508.6 L1788.5,1484.2 L1791.4,1467.8 L1794.3,1446.4 L1797.3,1426.3 L1800.8,1461.1 L1804.3,1501.7 L1807.1,1511.1 L1809.9,1524.9 L1812.7,1533.4 L1815.5,1539.8 L1818.3,1554.3 L1821.8,1578.0 L1825.3,1596.4 L1827.9,1610.4 L1830.6,1615.8 L1833.2,1630.9 L1835.8,1641.9 L1838.7,1650.3 L1841.7,1662.9 L1844.6,1670.0 L1847.2,1644.8 L1849.8,1620.5 L1852.5,1598.9 L1855.1,1575.3 L1858.0,1560.3 L1860.9,1534.7 L1863.9,1519.2 L1866.5,1517.0 L1869.1,1521.9 L1871.8,1524.9 L1874.4,1522.7 L1877.0,1521.1 L1879.6,1518.7 L1882.3,1520.3 L1884.9,1515.7 L1888.4,1485.5 L1891.9,1450.8 L1894.6,1472.4 L1897.2,1503.9 L1899.8,1523.4 L1902.4,1550.8 L1905.2,1561.8 L1908.1,1578.7 L1910.9,1588.0 L1913.7,1603.6 L1916.5,1613.9 L1919.1,1619.1 L1921.7,1632.7 L1924.4,1635.0 L1927.0,1645.4 L1929.5,1655.2 L1932.0,1670.4 L1934.5,1681.7 L1937.0,1695.9 L1939.5,1711.3 L1942.0,1722.3 L1944.5,1733.1 L1947.3,1697.6 L1950.1,1668.5 L1952.9,1638.8 L1955.7,1606.8 L1958.5,1575.3 L1961.3,1573.9 L1964.2,1568.9 L1967.0,1562.5 L1969.8,1560.7 L1972.6,1559.5 L1976.3,1591.2 L1980.0,1617.4 L1982.6,1630.3 L1985.3,1645.4 L1988.2,1646.4 L1991.1,1647.0 L1994.0,1641.9 L1997.5,1652.5 L2000.2,1625.4 L2002.8,1596.4 L2005.4,1587.2 L2008.1,1575.3 L2011.0,1568.0 L2013.9,1557.5 L2016.8,1550.8 L2018.6,1540.3 L2021.2,1555.8 L2023.8,1564.8 L2027.3,1569.8 L2030.8,1575.3 L2033.5,1594.4 L2036.1,1606.9 L2039.0,1618.2 L2041.9,1635.5 L2044.9,1645.4 L2048.4,1691.6 L2051.9,1733.1 L2054.5,1734.0 L2057.1,1733.1 L2060.1,1703.4 L2063.0,1671.8 L2065.9,1645.4 L2068.8,1624.2 L2071.7,1597.6 L2074.7,1575.3 L2077.3,1564.3 L2079.9,1550.8 L2082.6,1549.6 L2085.2,1554.3 L2088.7,1565.0 L2092.2,1582.3 L2094.8,1576.0 L2097.5,1575.3 L2101.0,1591.8 L2104.5,1603.4 L2107.1,1613.1 L2109.7,1631.1 L2112.4,1639.2 L2115.0,1652.5 L2118.5,1668.8 L2122.0,1684.0 L2124.9,1653.6 L2127.8,1626.5 L2130.8,1596.4 L2134.3,1582.3 L2136.9,1571.2 L2139.5,1565.8 L2142.2,1562.2 L2144.8,1550.8 L2147.4,1550.0 L2150.1,1555.5 L2152.7,1554.6 L2155.3,1557.8 L2158.8,1565.0 L2162.3,1575.3 L2165.3,1583.2 L2168.2,1594.9 L2171.1,1610.4 L2174.6,1631.5 L2178.1,1645.4 L2180.7,1663.0 L2183.4,1677.7 L2186.0,1692.6 L2188.6,1705.0 L2191.3,1705.2 L2193.9,1698.0 L2197.4,1658.5 L2200.9,1624.4 L2203.5,1604.0 L2206.2,1582.3 L2208.8,1561.3 L2211.4,1540.3 L2214.0,1537.3 L2216.7,1533.2 L2220.2,1561.3 L2222.8,1589.3 L2225.4,1610.4 L2228.1,1632.6 L2230.7,1654.4 L2233.3,1667.8 L2236.0,1691.0 L2239.5,1706.3 L2243.0,1719.1 L2246.5,1704.7 L2250.0,1687.5 L2253.5,1659.7 L2257.0,1627.9 L2260.5,1606.1 L2264.0,1582.3 L2267.5,1571.0 L2271.0,1554.3 L2273.9,1549.2 L2276.9,1550.7 L2279.8,1543.8 L2282.7,1547.7 L2285.6,1553.9 L2288.6,1557.8 L2291.2,1558.3 L2293.8,1554.2 L2296.4,1548.4 L2299.1,1547.3 L2302.6,1552.1 L2306.1,1561.3 L2309.0,1551.1 L2311.9,1544.8 L2314.9,1535.0 L2317.5,1558.2 L2320.1,1573.6 L2323.6,1567.1 L2327.1,1554.3 L2329.8,1553.5 L2332.4,1553.5 L2335.0,1556.8 L2337.6,1554.3 L2340.4,1551.8 L2343.3,1552.2 L2346.1,1548.3 L2348.9,1548.9 L2351.7,1550.8 L2354.5,1556.0 L2357.3,1562.1 L2360.1,1566.4 L2362.9,1569.3 L2365.7,1575.3 L2368.3,1579.8 L2371.0,1578.1 L2373.6,1575.2 L2376.2,1578.8 L2379.7,1563.1 L2383.2,1554.3 L2385.9,1555.9 L2388.5,1553.8 L2391.1,1551.1 L2393.7,1545.5 L2397.3,1555.1 L2400.8,1563.0 L2403.4,1556.7 L2406.0,1550.1 L2408.6,1546.6 L2411.3,1543.8 L2413.9,1543.3 L2416.5,1550.7 L2419.2,1552.2 L2421.8,1550.8 L2425.3,1560.0 L2428.8,1564.8 L2432.3,1565.5 L2435.8,1571.8 L2439.3,1556.6 L2442.8,1545.5 L2445.5,1547.0 L2448.1,1555.2 L2450.7,1552.0 L2453.4,1557.8 L2456.0,1559.2 L2458.6,1557.5 L2461.2,1555.5 L2463.9,1554.3 L2466.7,1561.5 L2469.5,1559.4 L2472.3,1565.0 L2475.1,1565.6 L2477.9,1571.8 L2480.5,1564.6 L2483.2,1560.2 L2485.8,1558.5 L2488.4,1556.0 L2491.0,1554.3 L2493.7,1555.2 L2496.3,1563.9 L2498.9,1561.3 L2501.6,1555.7 L2504.2,1556.5 L2506.8,1551.1 L2509.5,1545.5 L2512.1,1551.3 L2514.7,1554.6 L2517.3,1561.0 L2520.0,1561.3 L2522.5,1561.3 L2525.0,1557.0 L2527.5,1552.8 L2530.0,1550.8 L2532.5,1548.1 L2535.0,1543.7 L2537.5,1540.3 L2540.6,1547.3 L2543.6,1551.5 L2546.7,1564.0 L2549.8,1568.3 L2552.8,1566.4 L2555.9,1561.3 L2559.0,1560.4 L2562.0,1561.3 L2564.7,1562.5 L2567.3,1555.8 L2569.9,1555.2 L2572.6,1554.3 L2576.3,1555.7 L2580.0,1554.3 L2583.5,1562.4 L2587.0,1564.8 L2589.6,1564.3 L2592.3,1565.6 L2594.9,1566.8 L2597.5,1568.3 L2600.2,1561.9 L2602.8,1566.1 L2605.4,1556.6 L2608.1,1557.8 L2611.1,1556.6 L2614.2,1545.4 L2617.3,1540.6 L2620.3,1538.5 L2623.8,1547.4 L2627.3,1550.8 L2630.3,1556.9 L2633.2,1555.6 L2636.1,1561.3 L2639.0,1559.4 L2641.9,1556.4 L2644.9,1554.3 L2647.8,1557.2 L2650.7,1554.1 L2653.6,1557.8 L2656.3,1563.0 L2658.9,1567.0 L2661.5,1567.3 L2664.2,1568.3 L2667.7,1561.2 L2671.2,1547.3 L2674.0,1553.9 L2676.8,1552.6 L2679.6,1559.5 L2682.4,1562.6 L2685.2,1563.0 L2687.8,1560.5 L2690.4,1553.5 L2693.1,1554.4 L2695.7,1553.5 L2698.3,1545.4 L2701.0,1543.8 L2704.0,1547.6 L2707.1,1552.2 L2710.2,1552.4 L2713.2,1554.3 L2715.9,1553.2 L2718.5,1560.6 L2721.1,1560.2 L2723.8,1564.8 L2726.4,1564.2 L2729.0,1559.1 L2731.6,1552.7 L2734.3,1550.8 L2736.9,1556.6 L2739.5,1557.0 L2742.2,1557.4 L2744.8,1561.3 L2747.4,1566.6 L2750.1,1569.7 L2752.7,1572.3 L2755.3,1571.8 L2757.9,1569.6 L2760.6,1562.6 L2763.2,1557.6 L2765.8,1550.8 L2768.5,1555.1 L2771.1,1558.0 L2773.7,1565.2 L2776.4,1564.8 L2779.9,1552.2 L2783.4,1542.0 L2786.9,1550.1 L2790.4,1564.8 L2793.4,1559.1 L2796.5,1549.9 L2799.6,1542.8 L2802.7,1535.0 L2805.3,1543.7 L2807.9,1550.8 L2810.5,1554.0 L2813.2,1558.9 L2815.8,1563.1 L2818.4,1571.8 L2821.9,1565.3 L2825.4,1554.3 L2828.2,1559.6 L2831.1,1560.1 L2833.9,1557.5 L2836.7,1566.5 L2839.5,1564.8 L2843.0,1572.7 L2846.5,1575.3 L2849.1,1567.5 L2851.7,1555.5 L2854.4,1554.4 L2857.0,1543.8 L2859.9,1557.6 L2862.8,1570.4 L2865.8,1582.3 L2868.4,1573.2 L2871.0,1571.8 L2874.5,1540.4 L2878.0,1505.2 L2881.0,1498.0 L2883.9,1498.0 L2886.8,1494.7 L2889.7,1497.7 L2892.6,1505.2 L2895.6,1512.2 L2898.2,1526.7 L2900.8,1537.0 L2903.5,1548.9 L2906.1,1557.8 L2909.6,1600.0 L2913.1,1645.4 L2916.6,1665.6 L2920.1,1687.5 L2923.6,1681.3 L2927.1,1673.5 L2930.6,1629.4 L2934.1,1592.8 L2937.6,1519.2 L2941.2,1529.0 L2944.7,1540.3 L2948.2,1505.2 L2951.7,1523.0 L2955.2,1533.2 L2958.7,1483.6 L2962.2,1429.8 L2965.7,1470.4 L2969.2,1505.2 L2972.7,1521.1 L2976.2,1540.3 L2978.8,1552.3 L2981.5,1563.6 L2984.1,1573.4 L2986.7,1582.3 L2990.2,1613.4 L2993.7,1645.4 L2996.4,1660.4 L2999.0,1680.5 L3001.9,1662.6 L3004.8,1655.6 L3007.8,1638.4 L3010.4,1602.0 L3013.0,1556.9 L3015.7,1520.8 L3018.3,1478.9 L3020.0,1480.7 L3023.5,1540.4 L3027.0,1519.3 L3030.5,1568.4 L3034.0,1541.4 L3037.5,1515.8 L3041.1,1522.8 L3045.3,1491.2 L3048.4,1513.3 L3051.6,1533.3 L3055.1,1554.4 L3058.6,1560.6 L3062.1,1561.4 L3065.6,1567.0 L3069.1,1575.4 L3071.8,1593.9 L3074.4,1610.5 L3077.9,1652.4 L3081.4,1698.2 L3084.0,1694.8 L3086.7,1691.2 L3089.6,1631.3 L3092.5,1577.1 L3095.4,1522.8 L3098.9,1529.9 L3102.5,1540.4 L3105.1,1547.2 L3107.7,1547.4 L3110.9,1508.5 L3114.0,1475.4 L3116.6,1483.9 L3119.2,1485.0 L3121.8,1494.7 L3125.3,1512.3 L3128.8,1535.5 L3132.3,1550.9 L3135.8,1546.5 L3139.3,1547.4 L3142.8,1564.9 L3146.3,1591.5 L3149.8,1624.6 L3153.3,1636.3 L3156.8,1652.6 L3159.5,1668.4 L3162.1,1677.2 L3165.0,1644.6 L3168.0,1612.5 L3170.9,1575.4 L3174.4,1554.4 L3177.9,1533.3 L3180.5,1521.5 L3183.2,1515.8 L3185.8,1511.0 L3188.4,1508.8 L3191.1,1495.3 L3193.7,1482.5 L3196.3,1501.3 L3198.9,1512.3 L3202.5,1498.2 L3206.0,1547.4 L3209.5,1558.7 L3213.0,1575.4 L3216.5,1568.4 L3220.0,1615.5 L3223.5,1666.7 L3227.0,1662.4 L3230.5,1652.6 L3234.0,1626.7 L3237.5,1607.0 L3240.2,1617.8 L3242.8,1621.1 L3245.7,1598.4 L3248.7,1579.5 L3251.6,1557.9 L3255.1,1541.6 L3258.6,1522.8 L3262.1,1541.9 L3265.6,1554.4 L3269.1,1558.0 L3272.6,1568.4 L3274.4,1596.5" fill="none" stroke="#00ff00" stroke-width="3.8" stroke-linejoin="round"/><line x1="1921" y1="1119" x2="1921" y2="2118" stroke="#fff" stroke-width="4.5"/><text x="3300" y="1140.0" fill="#c80000" stroke="#c80000" font-family="Liberation Mono, monospace" font-size="27.3" text-anchor="end" stroke-width="0.5">a x</text><text x="3300" y="1159.5" fill="#00b800" stroke="#00b800" font-family="Liberation Mono, monospace" font-size="27.3" text-anchor="end" stroke-width="0.5">a y</text><text x="3300" y="1179.5" fill="#0000c8" stroke="#0000c8" font-family="Liberation Mono, monospace" font-size="27.3" text-anchor="end" stroke-width="0.5">a z</text><text x="3300" y="1235.6" fill="#c80000" stroke="#c80000" font-family="Liberation Mono, monospace" font-size="27.3" text-anchor="end" stroke-width="0.5">a x Spline</text><text x="3300" y="1263.7" fill="#00b800" stroke="#00b800" font-family="Liberation Mono, monospace" font-size="27.3" text-anchor="end" stroke-width="0.5">a y Spline</text><text x="3300" y="1291.0" fill="#0000c8" stroke="#0000c8" font-family="Liberation Mono, monospace" font-size="27.3" text-anchor="end" stroke-width="0.5">a z Spline</text></svg>
</body></html>
